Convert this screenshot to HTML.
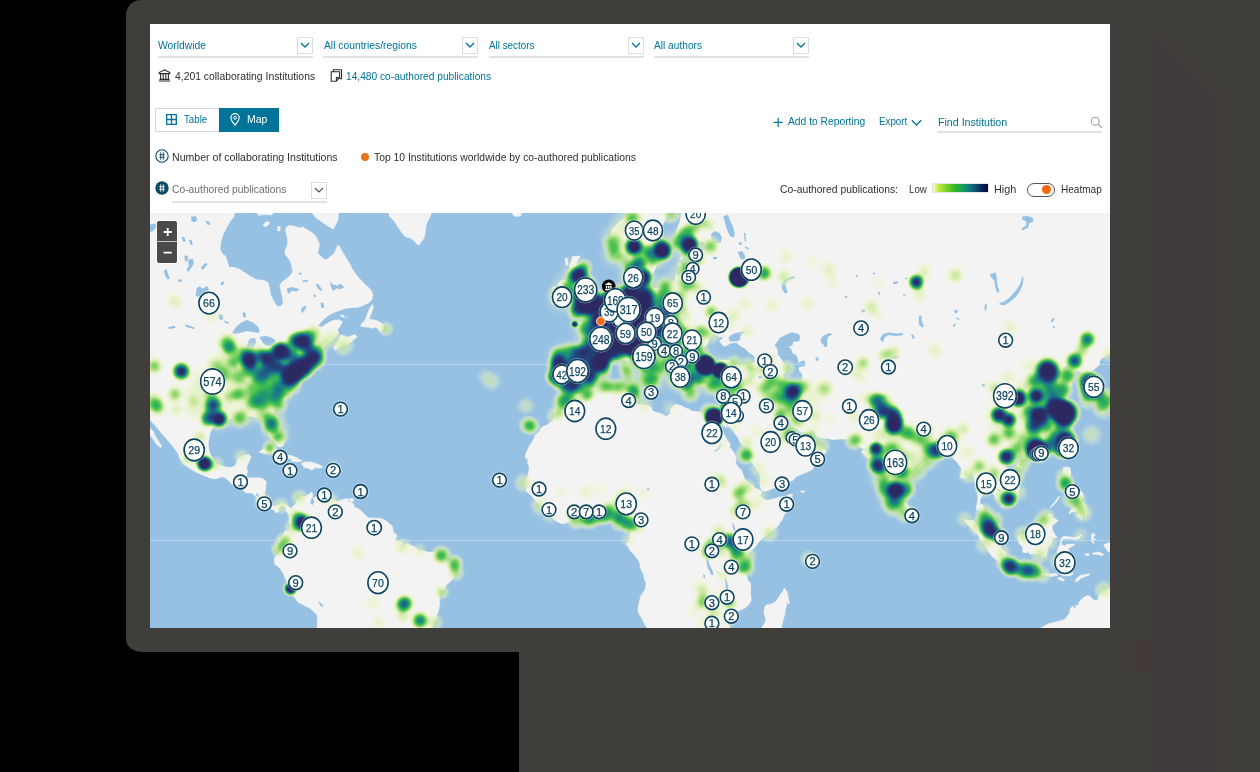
<!DOCTYPE html>
<html><head><meta charset="utf-8">
<style>
html,body{margin:0;padding:0;background:#000;}
body{width:1260px;height:772px;position:relative;overflow:hidden;font-family:"Liberation Sans",sans-serif;}
.abs{position:absolute;}
#frame{left:126px;top:0px;width:1160px;height:652px;background:#403e3a;border-radius:15px 0 0 16px / 15px 0 0 12.5px;}
#stand{left:519px;top:640px;width:741px;height:132px;background:#403e3a;}
#screen{left:150px;top:24px;width:960px;height:604px;background:#fff;overflow:hidden;}
.t{position:absolute;white-space:nowrap;font-size:11px;line-height:14px;color:#007398;transform-origin:0 50%;}
.k{color:#2e2e2e;}
.ul{position:absolute;height:2px;background:#e2e2e2;}
.cb{position:absolute;width:14px;height:15px;border:1px solid #dcdcdc;background:#fff;}
.cb svg{position:absolute;left:2px;top:3px;}
</style></head><body>
<div id="frame" class="abs"></div>
<div id="stand" class="abs"></div>
<div class="abs" style="left:1131.5px;top:641px;width:20.5px;height:31px;background:rgba(110,40,40,0.10);"></div>
<svg id="shade" class="abs" style="left:0;top:0" width="1260" height="772"><path d="M1149.5 27.5 L1217 95 V772 H1149.5 Z" fill="rgba(80,40,80,0.07)"/><path d="M1122 0 L1217 95" stroke="rgba(90,80,95,0.25)" stroke-width="0.8" fill="none"/></svg>
<div id="screen" class="abs">
<!-- coordinates inside screen are page coords minus (150,24) -->
<div id="ui" style="position:absolute;left:-150px;top:-24px;width:1260px;height:772px;">

<!-- row 1 dropdowns -->
<span class="t" id="t1" style="transform:scaleX(0.9383);left:158px;top:37.5px;">Worldwide</span>
<div class="ul" style="left:157.5px;top:56px;width:155px;"></div>
<div class="cb" style="left:296.5px;top:37px;"><svg width="10" height="8" viewBox="0 0 10 8"><path d="M1 2 L5 6 L9 2" fill="none" stroke="#007398" stroke-width="1.3"/></svg></div>

<span class="t" id="t2" style="transform:scaleX(0.9368);left:323.5px;top:37.5px;">All countries/regions</span>
<div class="ul" style="left:323px;top:56px;width:155px;"></div>
<div class="cb" style="left:462px;top:37px;"><svg width="10" height="8" viewBox="0 0 10 8"><path d="M1 2 L5 6 L9 2" fill="none" stroke="#007398" stroke-width="1.3"/></svg></div>

<span class="t" id="t3" style="transform:scaleX(0.8946);left:488.5px;top:37.5px;">All sectors</span>
<div class="ul" style="left:488.5px;top:56px;width:155px;"></div>
<div class="cb" style="left:627.5px;top:37px;"><svg width="10" height="8" viewBox="0 0 10 8"><path d="M1 2 L5 6 L9 2" fill="none" stroke="#007398" stroke-width="1.3"/></svg></div>

<span class="t" id="t4" style="transform:scaleX(0.9234);left:654px;top:37.5px;">All authors</span>
<div class="ul" style="left:654px;top:56px;width:155px;"></div>
<div class="cb" style="left:793px;top:37px;"><svg width="10" height="8" viewBox="0 0 10 8"><path d="M1 2 L5 6 L9 2" fill="none" stroke="#007398" stroke-width="1.3"/></svg></div>

<!-- row 2 -->
<svg class="abs" style="left:158px;top:68.6px" width="13" height="13" viewBox="0 0 13 13"><path d="M6.5 0.8 L11.8 3.6 L11.8 4.6 L1.2 4.6 L1.2 3.6 Z M2.6 5 V10 M5.2 5 V10 M7.8 5 V10 M10.4 5 V10 M1.5 10.4 H11.5 M0.8 12 H12.2" fill="none" stroke="#2e2e2e" stroke-width="1.1"/></svg>
<span class="t k" id="t5" style="transform:scaleX(0.9427);left:174.8px;top:68.6px;">4,201 collaborating Institutions</span>
<svg class="abs" style="left:330px;top:68.8px" width="13" height="13" viewBox="0 0 13 13"><path d="M3.3 2.8 V0.8 H11.5 V9.6 H9.8 M1.2 2.8 H9.6 V8.6 L6.4 12.2 H1.2 Z M9.6 8.6 H6.4 V12.2" fill="none" stroke="#2e2e2e" stroke-width="1.1"/></svg>
<span class="t" id="t6" style="transform:scaleX(0.9268);left:346.2px;top:68.6px;">14,480 co-authored publications</span>

<!-- Table / Map buttons -->
<div class="abs" style="left:155px;top:108px;width:64px;height:21.6px;border:1px solid #d6d6d6;background:#fff;"></div>
<div class="abs" style="left:219px;top:108px;width:60px;height:23.6px;background:#007398;"></div>
<svg class="abs" style="left:166px;top:113.5px" width="11" height="11" viewBox="0 0 11 11"><path d="M0.7 0.7 H10.3 V10.3 H0.7 Z M5.5 0.7 V10.3 M0.7 5.5 H10.3" fill="none" stroke="#007398" stroke-width="1.3"/></svg>
<span class="t" id="t7" style="transform:scaleX(0.8822);left:183.5px;top:111.8px;">Table</span>
<svg class="abs" style="left:230px;top:113px" width="10" height="13" viewBox="0 0 10 13"><path d="M5 12 C5 12 0.9 7.6 0.9 4.8 A4.1 4.1 0 0 1 9.1 4.8 C9.1 7.6 5 12 5 12 Z" fill="none" stroke="#fff" stroke-width="1.2"/><circle cx="5" cy="4.8" r="1.4" fill="none" stroke="#fff" stroke-width="1"/></svg>
<span class="t" id="t8" style="transform:scaleX(0.9483);left:247px;top:111.8px;color:#fff;">Map</span>

<!-- right: add to reporting etc -->
<svg class="abs" style="left:772.6px;top:117px" width="11" height="11" viewBox="0 0 11 11"><path d="M5.2 0.7 V9.9 M0.6 5.3 H9.8" stroke="#007398" stroke-width="1.2"/></svg>
<span class="t" id="t9" style="transform:scaleX(0.9350);left:787.5px;top:114px;">Add to Reporting</span>
<span class="t" id="t10" style="transform:scaleX(0.8900);left:879px;top:114px;">Export</span>
<svg class="abs" style="left:911px;top:119px" width="11" height="8" viewBox="0 0 11 8"><path d="M0.8 1.2 L5.5 6 L10.2 1.2" fill="none" stroke="#007398" stroke-width="1.3"/></svg>
<span class="t" id="t11" style="transform:scaleX(0.9672);left:937.5px;top:114.6px;">Find Institution</span>
<div class="ul" style="left:937px;top:131px;width:165px;"></div>
<svg class="abs" style="left:1089.5px;top:116px" width="13" height="13" viewBox="0 0 13 13"><circle cx="5.2" cy="5.2" r="3.9" fill="none" stroke="#a0a0a0" stroke-width="1.1"/><path d="M8 8 L11.8 11.8" stroke="#a0a0a0" stroke-width="1.2"/></svg>

<!-- legend row 1 -->
<svg class="abs" style="left:155px;top:148.7px" width="14" height="14" viewBox="0 0 14 14"><circle cx="7" cy="7" r="6.2" fill="#fff" stroke="#0c4a63" stroke-width="1.1"/><path d="M5.7 3.3 V10.7 M8.3 3.3 V10.7 M4.3 5.7 H9.7 M4.3 8.3 H9.7" stroke="#0c4a63" stroke-width="0.9"/></svg>
<span class="t k" id="t12" style="transform:scaleX(0.9603);left:172.4px;top:149.5px;">Number of collaborating Institutions</span>
<div class="abs" style="left:361.3px;top:152.7px;width:8px;height:8px;border-radius:50%;background:#e9711c;"></div>
<span class="t k" id="t13" style="transform:scaleX(0.9417);left:374px;top:149.5px;">Top 10 Institutions worldwide by co-authored publications</span>

<!-- legend row 2 -->
<svg class="abs" style="left:155px;top:180.9px" width="14" height="14" viewBox="0 0 14 14"><circle cx="7" cy="7" r="6.7" fill="#0c4a63"/><path d="M5.7 3.3 V10.7 M8.3 3.3 V10.7 M4.3 5.7 H9.7 M4.3 8.3 H9.7" stroke="#fff" stroke-width="0.9"/></svg>
<span class="t" id="t14" style="transform:scaleX(0.9353);left:172.4px;top:182px;color:#6e6e6e;">Co-authored publications</span>
<div class="cb" style="left:311px;top:182px;"><svg width="10" height="8" viewBox="0 0 10 8"><path d="M1 2 L5 6 L9 2" fill="none" stroke="#505050" stroke-width="1.2"/></svg></div>
<div class="ul" style="left:172.4px;top:201px;width:154.5px;height:1.5px;"></div>

<span class="t k" id="t15" style="transform:scaleX(0.9413);left:780px;top:181.6px;">Co-authored publications:</span>
<span class="t k" id="t16" style="transform:scaleX(0.8817);left:909.4px;top:181.6px;">Low</span>
<div class="abs" style="left:933.3px;top:184.2px;width:55px;height:8px;box-shadow:0 0 0 0.6px #cfcfcf;background:linear-gradient(90deg,#f4fbc8 0%,#c4ea4a 10%,#7cd321 24%,#2fb82c 40%,#14a05a 54%,#0f7a80 66%,#0b4670 80%,#08184a 92%,#070c3a 100%);"></div>
<span class="t k" id="t17" style="transform:scaleX(0.9812);left:994px;top:181.6px;">High</span>
<div class="abs" style="left:1026.8px;top:183px;width:26px;height:12px;border:1px solid #555;border-radius:7px;background:#fff;"></div>
<div class="abs" style="left:1041.8px;top:185px;width:9px;height:9px;border-radius:50%;background:#f9650d;"></div>
<span class="t k" id="t18" style="transform:scaleX(0.9140);left:1061.4px;top:181.6px;">Heatmap</span>

<!-- MAP -->
<div id="map" class="abs" style="left:150px;top:213px;width:960px;height:415px;background:#97c1e3;overflow:hidden;">
<svg width="960" height="415" viewBox="0 0 960 415" style="position:absolute;left:0;top:0;">
<g fill="#f3f3f3" stroke="#f3f3f3" stroke-width="0.6" stroke-linejoin="round"><path d="M-1.9 -1.9 L84.8 -1.9 L83.8 3.8 L80.0 8.6 L76.2 15.2 L73.3 21.0 L70.9 28.6 L70.1 36.2 L72.4 41.0 L75.8 43.4 L77.1 47.6 L79.0 54.3 L83.8 54.3 L89.5 56.2 L95.2 60.0 L101.0 63.8 L106.7 66.7 L114.3 67.6 L118.1 69.5 L119.6 75.2 L120.4 81.0 L122.9 86.7 L125.7 91.4 L128.0 93.7 L131.4 93.0 L133.3 89.5 L132.4 83.8 L131.0 78.1 L129.9 73.3 L131.4 69.5 L135.2 66.7 L140.0 62.9 L142.5 59.0 L141.9 53.3 L140.0 47.6 L137.1 43.8 L134.9 41.0 L135.6 36.2 L137.5 31.4 L137.5 25.7 L136.2 20.0 L135.6 15.2 L139.0 12.4 L144.8 13.3 L150.5 14.9 L152.4 13.7 L156.2 16.2 L161.0 19.0 L165.3 22.5 L167.6 26.7 L169.5 31.4 L168.6 36.2 L167.6 40.0 L170.5 42.9 L173.3 45.7 L176.2 46.7 L180.0 43.8 L183.8 41.0 L185.7 37.1 L187.6 32.4 L189.5 33.3 L191.4 37.1 L194.3 41.9 L197.1 46.7 L200.0 51.4 L201.9 55.2 L205.7 61.0 L209.5 65.7 L215.2 71.4 L221.0 77.1 L222.9 81.9 L221.9 86.7 L219.0 89.5 L213.3 92.4 L207.6 94.3 L201.9 94.7 L196.2 95.2 L190.5 97.1 L184.8 99.0 L179.0 101.9 L174.3 105.7 L170.5 109.5 L167.6 113.3 L171.4 114.3 L177.1 110.5 L182.9 107.6 L188.6 106.7 L192.4 108.6 L190.5 112.4 L187.6 116.6 L188.6 120.0 L185.7 123.8 L179.0 129.5 L173.3 134.3 L169.5 140.0 L168.6 142.9 L-1.9 142.9Z"/><path d="M190.5 121.9 L198.1 124.2 L204.8 121.5 L207.2 123.8 L202.3 128.0 L196.2 131.8 L190.5 133.7 L185.7 136.8 L183.2 135.6 L185.7 131.4 L188.6 126.7Z"/><path d="M161.0 -1.9 L188.6 -1.9 L187.8 7.6 L183.2 16.2 L179.0 13.7 L171.4 8.6 L165.3 4.2Z"/><path d="M221.0 93.0 L222.9 91.8 L223.2 95.2 L221.0 101.0 L219.0 105.7 L221.9 106.7 L226.7 107.6 L230.5 109.5 L233.9 112.4 L233.3 116.2 L230.5 119.0 L228.6 116.2 L225.7 114.3 L222.9 115.2 L219.0 114.3 L214.3 113.9 L210.5 113.3 L211.8 110.5 L215.2 106.7 L217.1 101.9 L219.0 97.1Z"/><path d="M190.5 101.9 L195.2 102.5 L200.0 104.4 L196.2 104.8 L191.4 103.8Z"/><path d="M113.3 11.4 L116.6 8.6 L120.0 9.5 L117.1 13.0 L114.3 13.7Z"/><path d="M128.0 13.3 L130.3 13.7 L129.9 18.1 L127.6 17.5Z"/><path d="M106.7 -1.0 L123.8 -1.0 L121.9 1.9 L114.3 1.5 L108.6 2.3Z"/><path d="M239.0 -1.9 L282.3 -1.9 L279.0 5.7 L276.2 11.4 L275.2 19.0 L274.3 24.8 L271.4 28.6 L268.6 32.4 L264.8 28.6 L260.0 24.8 L255.2 23.8 L251.4 19.0 L247.6 13.3 L243.8 7.6 L239.0 2.9Z"/><path d="M361.9 -1.9 L372.4 -1.9 L370.5 2.9 L365.7 3.4 L362.9 1.9Z"/><path d="M421.0 48.6 L424.8 44.2 L430.1 42.9 L427.6 47.6 L424.8 52.4 L421.9 53.3Z"/><path d="M414.9 45.7 L417.1 44.8 L418.1 51.4 L416.2 52.4Z"/><path d="M468.6 9.5 L473.3 6.7 L481.9 1.0 L481.9 47.6 L474.3 46.7 L469.5 42.9 L465.7 36.2 L463.2 28.6 L461.9 21.0 L463.8 15.2Z"/><path d="M528.6 43.4 L532.4 42.9 L533.0 45.3 L529.1 46.1Z"/><path d="M513.9 49.1 L516.2 48.6 L515.8 53.3 L513.9 53.7Z"/><path d="M-1.9 135.7 L168.6 135.7 L167.6 141.8 L169.9 146.6 L166.1 149.8 L161.9 154.2 L159.0 159.0 L154.3 163.7 L150.5 168.5 L146.7 173.2 L144.8 177.0 L141.0 181.8 L136.2 185.6 L131.4 189.8 L127.6 193.2 L124.8 197.0 L122.9 201.8 L123.8 206.6 L126.7 212.3 L129.5 218.0 L132.4 222.8 L134.3 227.5 L133.3 232.3 L129.5 234.2 L125.7 231.3 L121.9 226.6 L119.0 221.8 L116.6 216.1 L115.2 210.4 L112.4 206.6 L108.6 204.7 L103.8 203.7 L99.0 202.8 L95.2 204.7 L91.4 205.6 L86.7 206.6 L81.9 205.6 L76.2 207.0 L71.4 208.5 L66.7 211.3 L62.9 214.2 L60.6 218.0 L59.4 222.8 L58.7 227.5 L58.1 232.3 L59.0 237.0 L60.6 241.8 L62.9 246.6 L65.7 250.4 L69.5 252.3 L74.3 253.8 L80.0 254.6 L84.8 253.2 L86.7 249.4 L88.6 244.7 L93.3 242.4 L99.0 241.8 L101.0 243.7 L99.0 248.5 L96.8 253.2 L94.9 258.0 L93.3 262.8 L97.1 265.2 L102.9 264.7 L108.6 265.6 L114.3 267.5 L115.2 271.3 L114.3 279.9 L96.2 279.9 L89.5 274.2 L83.8 269.4 L78.1 265.2 L72.4 262.8 L66.7 264.1 L61.0 264.7 L55.2 262.8 L47.6 259.9 L41.0 256.1 L34.3 251.3 L30.5 246.6 L27.6 239.9 L22.9 233.2 L17.1 226.6 L11.4 219.9 L5.7 213.2 L-1.9 204.7Z"/><path d="M-1.9 213.2 L0.0 215.1 L2.9 218.0 L5.7 223.7 L8.6 228.5 L11.8 233.2 L10.5 234.8 L6.7 231.3 L3.4 226.6 L0.0 221.8 L-1.9 219.9Z"/><path d="M109.0 239.0 L114.3 235.5 L120.4 234.2 L125.7 236.1 L131.4 239.0 L137.1 241.8 L142.9 243.1 L149.5 246.2 L152.4 247.9 L146.7 248.9 L141.0 248.1 L141.9 246.2 L136.2 244.7 L131.4 242.4 L125.7 240.5 L120.0 239.7 L114.3 240.5Z"/><path d="M151.4 250.4 L155.2 248.9 L161.0 248.9 L165.7 250.4 L170.5 252.3 L173.3 254.2 L169.5 255.1 L165.7 254.6 L161.9 257.0 L158.1 255.1 L154.3 254.6 L152.4 252.3Z"/><path d="M481.1 -60.9 L989.6 -60.9 L989.6 136.0 L962.2 143.0 L957.9 140.8 L955.1 143.5 L952.0 145.1 L949.7 147.7 L949.3 151.9 L947.3 153.7 L943.4 157.0 L941.1 158.1 L940.5 161.4 L943.0 164.1 L945.0 166.1 L946.1 168.3 L948.1 172.0 L948.3 176.7 L947.7 180.3 L946.9 181.2 L944.6 182.2 L941.6 183.1 L939.5 184.1 L937.0 185.0 L936.2 182.9 L936.4 179.8 L937.0 177.1 L936.8 175.0 L935.4 173.0 L937.1 172.0 L937.1 169.8 L936.0 168.6 L933.6 167.1 L930.5 166.6 L931.7 163.6 L932.1 160.6 L929.3 158.6 L928.2 157.5 L924.6 158.6 L920.3 160.6 L917.6 162.6 L916.0 162.1 L917.6 159.1 L919.9 155.0 L918.4 152.4 L915.2 152.9 L912.9 156.0 L909.8 157.5 L907.0 161.1 L902.7 162.1 L901.9 164.1 L903.9 166.6 L907.4 168.1 L908.2 168.3 L907.0 170.6 L909.4 171.5 L911.3 170.1 L914.5 168.1 L916.8 169.3 L919.5 169.6 L921.5 170.1 L921.1 172.5 L917.6 173.0 L914.9 174.5 L912.9 176.4 L910.9 178.8 L908.6 181.2 L909.0 183.1 L912.1 185.5 L914.5 191.1 L915.2 193.5 L918.8 197.2 L918.4 199.5 L918.8 200.8 L916.0 201.7 L914.9 203.1 L917.6 204.5 L918.8 205.4 L918.8 208.5 L917.2 211.6 L914.9 213.9 L913.3 216.9 L910.9 220.4 L909.8 222.6 L908.6 225.2 L906.2 227.8 L903.9 229.3 L901.6 232.1 L898.4 234.0 L895.7 236.0 L891.8 236.8 L888.6 238.5 L886.1 238.9 L884.0 239.8 L881.2 241.0 L879.7 240.6 L876.1 241.9 L874.2 243.1 L874.6 245.6 L873.4 246.9 L871.4 246.1 L871.4 244.0 L870.7 241.9 L868.7 241.9 L866.4 241.0 L864.4 241.9 L861.7 244.0 L859.3 244.6 L858.5 246.9 L856.2 249.0 L855.4 253.5 L858.1 256.4 L858.9 258.5 L861.3 260.9 L862.8 262.6 L865.4 264.2 L867.5 267.0 L868.7 270.7 L869.3 273.5 L869.5 276.7 L869.1 279.7 L869.1 281.1 L867.9 283.5 L864.8 285.1 L862.4 286.7 L860.9 287.3 L859.7 287.5 L859.3 289.5 L858.5 290.3 L857.4 291.5 L854.6 292.7 L853.4 293.8 L851.7 294.2 L851.9 291.5 L853.1 288.7 L850.7 287.1 L849.5 286.5 L846.8 286.3 L844.8 283.1 L842.9 279.9 L840.5 278.3 L838.2 278.1 L836.6 277.1 L836.8 275.1 L835.3 274.7 L833.1 275.5 L832.9 278.3 L832.3 281.5 L831.2 284.3 L830.2 286.7 L829.8 289.5 L830.8 291.9 L832.7 291.5 L833.5 294.6 L834.7 297.8 L835.5 299.8 L838.0 300.9 L840.2 302.7 L841.9 303.7 L844.1 305.7 L845.4 307.0 L846.6 310.0 L846.4 313.1 L846.8 316.3 L848.2 318.4 L849.5 321.4 L849.7 322.7 L846.8 322.9 L844.1 321.0 L841.9 319.4 L840.2 317.8 L838.4 316.3 L836.6 313.5 L835.5 311.6 L834.7 308.4 L834.5 306.8 L834.5 304.5 L833.3 302.5 L831.9 300.9 L830.8 299.4 L828.8 296.4 L826.5 297.0 L826.3 294.6 L826.9 291.9 L827.4 288.7 L828.0 285.9 L827.6 282.3 L827.6 279.1 L826.5 275.5 L825.7 272.3 L824.5 267.8 L823.7 262.6 L821.4 260.5 L821.0 259.3 L818.6 262.6 L815.1 265.4 L812.4 265.0 L810.4 264.6 L811.2 259.7 L811.6 255.6 L809.3 252.3 L807.7 249.8 L805.3 247.5 L803.0 244.8 L801.8 242.3 L801.0 238.5 L798.7 237.2 L796.3 238.5 L794.8 240.2 L792.0 240.6 L789.3 241.4 L786.6 241.4 L784.2 241.4 L782.3 241.9 L781.9 244.8 L781.1 246.9 L779.1 248.6 L777.8 249.0 L774.8 250.6 L773.7 251.9 L770.9 255.2 L767.8 257.6 L763.9 260.7 L763.5 262.6 L761.5 263.4 L759.4 264.0 L758.0 265.4 L755.3 267.4 L755.1 270.7 L755.7 274.3 L756.1 276.3 L755.5 279.5 L754.3 281.9 L754.3 287.5 L752.2 287.5 L750.6 290.3 L752.2 291.5 L750.6 291.9 L747.7 293.4 L745.3 296.3 L743.2 295.2 L741.2 292.7 L740.2 288.9 L738.5 283.9 L736.5 280.7 L734.7 277.1 L733.8 273.5 L732.6 269.9 L730.6 266.6 L729.5 263.4 L728.7 260.5 L727.5 256.4 L726.7 252.3 L726.5 249.0 L726.7 246.1 L726.7 243.5 L725.9 241.4 L725.9 238.9 L724.4 238.9 L724.4 242.7 L722.0 244.4 L719.7 245.2 L717.0 244.2 L714.6 241.9 L711.7 238.7 L712.6 237.6 L716.6 237.2 L717.0 235.5 L713.8 236.0 L710.7 234.7 L708.7 232.5 L706.0 231.7 L705.2 229.5 L704.0 227.6 L702.5 225.7 L698.2 225.5 L694.7 226.1 L690.4 225.9 L685.7 226.5 L682.5 226.5 L679.0 225.7 L674.7 225.2 L672.0 224.8 L668.1 224.2 L665.7 222.6 L664.5 218.7 L662.2 217.6 L659.1 219.4 L656.7 220.2 L652.4 219.6 L649.3 218.3 L647.3 216.1 L644.2 214.7 L641.9 212.1 L640.7 209.8 L639.9 207.6 L637.9 204.9 L635.6 204.5 L633.3 203.5 L632.1 204.9 L629.7 205.4 L629.5 207.6 L630.5 209.4 L631.7 212.1 L633.3 215.2 L635.6 217.4 L637.9 219.6 L638.3 221.8 L637.9 223.9 L639.9 226.1 L640.7 228.0 L641.1 224.8 L642.2 222.0 L643.8 223.1 L643.8 227.0 L642.6 228.7 L643.8 230.2 L647.3 230.6 L651.2 230.8 L654.8 229.3 L658.3 225.9 L661.0 223.5 L662.2 221.1 L662.6 223.1 L662.4 227.0 L663.4 229.1 L665.7 231.3 L668.8 232.3 L671.2 233.0 L673.5 235.5 L675.9 237.6 L674.7 240.2 L672.4 243.5 L670.8 246.1 L668.1 247.3 L667.7 249.6 L667.7 252.5 L664.2 253.5 L662.2 256.6 L658.3 258.5 L653.6 260.5 L649.7 261.9 L646.2 263.8 L642.6 267.4 L638.3 269.1 L634.0 270.7 L630.5 272.7 L627.4 274.3 L623.9 275.1 L618.0 277.5 L614.9 278.3 L612.1 277.9 L611.2 275.5 L610.2 272.7 L610.0 269.5 L610.6 267.4 L610.2 263.4 L609.6 260.9 L607.4 257.6 L604.7 253.5 L603.9 251.9 L600.8 247.7 L598.1 245.6 L596.3 241.9 L595.7 237.6 L593.8 233.4 L592.0 230.8 L589.1 227.4 L588.3 224.8 L585.7 221.8 L582.8 216.7 L579.7 213.9 L577.7 213.4 L578.9 207.2 L578.5 207.2 L576.9 212.5 L576.0 215.0 L573.4 212.5 L571.8 209.8 L569.9 206.3 L569.3 205.1 L568.3 199.2 L571.1 199.9 L574.2 199.9 L576.5 198.1 L577.9 195.3 L578.9 192.1 L579.3 189.7 L580.8 186.9 L582.4 183.1 L582.0 179.3 L582.4 176.9 L583.6 174.0 L581.2 174.0 L577.3 173.0 L574.6 175.4 L570.3 176.9 L567.2 174.5 L562.1 172.5 L561.3 175.4 L558.2 176.2 L555.8 174.0 L552.7 173.0 L549.2 172.0 L548.6 169.1 L544.9 165.6 L547.2 164.9 L546.8 161.6 L544.1 159.6 L544.5 157.0 L543.7 154.0 L539.8 152.4 L537.4 152.4 L535.5 155.5 L534.7 157.0 L533.5 155.5 L531.6 154.5 L530.4 157.0 L531.6 160.1 L532.7 161.6 L531.6 162.6 L533.9 164.6 L536.1 167.1 L535.9 168.8 L533.9 167.1 L532.3 167.6 L532.7 170.1 L530.8 169.3 L532.3 174.5 L530.0 175.0 L528.8 172.5 L526.9 173.0 L525.3 169.1 L526.9 165.6 L530.0 165.6 L524.5 165.1 L523.0 162.6 L521.0 159.1 L519.8 157.0 L517.9 154.5 L518.3 150.3 L517.9 147.2 L514.4 144.0 L510.8 141.4 L506.1 138.7 L502.6 136.0 L500.3 131.6 L498.3 128.8 L496.4 131.3 L495.2 128.0 L495.6 126.6 L493.2 126.6 L490.1 128.3 L490.5 131.0 L490.1 134.3 L492.8 136.8 L495.2 138.4 L496.8 143.0 L499.5 146.1 L502.6 147.2 L505.0 147.2 L504.2 149.3 L508.1 151.4 L512.0 153.7 L514.4 156.3 L514.0 158.1 L512.0 155.5 L508.5 154.5 L506.9 157.5 L508.9 162.1 L506.9 163.1 L505.0 167.4 L503.2 167.1 L503.8 164.1 L505.0 162.1 L503.8 157.5 L500.7 156.0 L498.3 153.7 L497.1 152.7 L495.2 150.6 L491.3 149.6 L489.7 147.7 L487.4 144.8 L485.0 144.0 L483.1 141.4 L482.3 138.1 L481.5 136.0 L479.2 134.3 L476.8 133.8 L474.1 136.2 L471.3 137.1 L469.4 138.4 L466.2 140.8 L462.7 139.8 L460.8 139.2 L457.6 138.4 L454.5 140.3 L453.9 144.0 L454.5 147.2 L450.6 149.8 L445.9 151.6 L444.7 153.4 L442.0 157.5 L440.8 159.6 L441.6 163.1 L440.0 165.6 L438.9 168.6 L438.1 169.1 L434.6 172.5 L432.6 173.0 L428.3 173.5 L424.8 173.5 L421.1 176.4 L420.1 176.9 L417.4 174.0 L417.0 172.5 L414.6 171.1 L411.1 172.0 L407.0 172.0 L407.6 167.1 L404.8 163.4 L405.6 160.1 L407.2 156.0 L408.2 151.1 L407.4 146.7 L405.8 141.9 L409.1 139.2 L411.9 137.3 L418.5 138.1 L424.4 139.2 L427.1 139.0 L430.7 139.2 L435.0 139.2 L436.1 138.4 L437.1 132.7 L437.5 127.7 L437.7 124.9 L435.0 122.1 L433.6 118.7 L432.2 117.5 L431.0 116.3 L428.3 114.9 L424.8 114.3 L423.4 111.4 L426.4 109.3 L430.3 108.7 L434.2 109.6 L435.7 109.6 L435.7 103.6 L437.1 103.6 L437.7 105.4 L442.4 104.5 L442.8 103.3 L446.3 101.5 L448.3 99.4 L448.3 96.3 L451.8 94.7 L454.5 93.2 L456.5 92.2 L457.6 89.1 L460.0 85.9 L460.6 83.0 L463.1 81.0 L465.1 80.0 L469.0 80.4 L470.2 78.1 L473.3 78.1 L475.2 78.7 L475.6 76.1 L476.8 76.1 L475.8 73.4 L475.6 70.0 L474.5 69.3 L473.9 65.6 L473.9 58.2 L475.6 54.6 L479.5 53.6 L481.1 51.0 L483.5 49.9 L483.1 53.9 L482.3 57.5 L484.6 59.3 L481.9 61.7 L481.9 63.8 L479.9 65.9 L479.2 69.3 L480.7 70.7 L481.1 73.1 L484.6 73.7 L485.0 76.1 L488.5 75.1 L490.9 73.1 L494.4 74.1 L495.6 75.1 L497.7 76.7 L499.1 76.7 L504.6 74.4 L508.1 72.1 L513.6 70.7 L515.1 73.4 L517.9 73.7 L519.8 73.1 L520.2 69.7 L524.1 67.3 L524.3 62.4 L524.1 56.8 L526.5 51.4 L530.4 49.9 L533.1 55.0 L536.3 55.0 L537.4 48.8 L537.0 45.9 L533.9 43.6 L533.9 39.1 L538.6 37.1 L543.7 36.0 L547.6 37.1 L551.5 36.8 L555.4 32.9 L560.1 33.3 L555.4 31.3 L553.5 28.1 L547.6 28.9 L539.8 31.3 L532.0 34.1 L529.6 30.5 L525.7 28.1 L525.3 20.9 L525.3 14.2 L524.5 9.1 L528.0 3.9 L531.2 0.4 L533.9 -5.0 L537.8 -12.4 L535.9 -19.0 L528.0 -19.0 L526.1 -12.4 L524.1 -5.9 L522.2 1.3 L516.3 6.5 L514.4 9.1 L512.0 12.5 L510.1 16.7 L509.3 20.9 L508.9 27.3 L510.4 28.9 L514.4 31.3 L515.9 33.7 L512.8 38.3 L510.8 42.1 L507.3 43.6 L507.1 49.5 L506.1 55.4 L504.6 61.0 L503.0 61.4 L499.5 61.4 L497.5 66.6 L494.0 67.0 L492.5 65.6 L491.9 62.1 L491.3 59.6 L492.3 57.9 L488.9 52.5 L488.5 50.3 L486.2 45.1 L485.8 40.6 L483.5 38.3 L483.5 34.1 L482.7 38.3 L480.3 40.6 L476.4 45.1 L473.3 47.3 L469.4 48.1 L464.3 43.6 L463.9 40.6 L462.3 36.8 L462.7 29.7 L461.6 24.9 L461.6 20.1 L462.3 15.9 L466.2 12.5 L469.4 9.1 L473.3 5.7 L476.0 3.9 L479.2 2.2 L481.9 -2.3Z"/><path d="M418.9 177.9 L421.3 177.4 L424.8 181.0 L430.3 180.3 L434.2 181.2 L438.1 178.3 L442.0 177.4 L445.9 174.5 L449.8 174.0 L454.0 173.0 L457.6 172.5 L461.9 173.3 L466.6 171.8 L470.2 171.5 L472.5 172.5 L475.6 172.3 L480.5 170.6 L482.3 171.1 L481.9 173.0 L485.2 171.5 L483.1 175.0 L483.5 177.9 L485.4 180.7 L484.2 183.1 L481.5 185.0 L481.5 186.9 L485.0 188.3 L485.4 190.2 L490.1 191.8 L493.6 191.6 L497.5 192.5 L501.1 193.9 L502.2 197.6 L506.5 199.5 L511.6 200.8 L516.3 203.5 L520.2 200.4 L520.6 195.3 L524.1 192.3 L526.9 191.6 L532.3 193.0 L535.9 195.3 L539.8 196.2 L540.6 197.8 L548.4 198.8 L553.5 200.1 L555.4 201.1 L558.9 199.5 L562.9 198.1 L565.2 198.1 L568.3 199.2 L569.3 205.1 L568.5 206.7 L569.7 209.8 L571.7 213.9 L572.6 217.4 L573.4 220.0 L575.0 223.1 L576.9 226.5 L579.3 230.0 L580.5 231.7 L579.3 233.8 L582.0 236.8 L583.6 238.9 L584.8 241.0 L585.9 244.4 L585.9 249.8 L586.7 251.9 L588.7 254.8 L591.0 256.4 L593.0 261.3 L594.7 266.2 L597.7 269.1 L601.6 271.5 L604.7 274.7 L609.0 276.7 L611.4 278.3 L611.4 281.1 L609.4 282.5 L611.2 282.9 L614.1 286.7 L618.0 287.1 L623.9 285.7 L629.7 284.1 L634.8 283.5 L639.5 281.3 L642.4 281.3 L641.9 283.9 L643.0 286.9 L640.7 291.1 L638.3 295.4 L636.8 297.8 L634.0 302.1 L632.1 306.5 L629.3 311.2 L625.4 315.5 L619.2 320.0 L614.1 323.7 L608.4 329.4 L604.7 334.6 L602.0 337.0 L599.2 339.3 L598.8 340.9 L597.1 343.9 L595.3 347.2 L593.8 351.1 L593.9 353.3 L595.7 354.7 L596.5 357.4 L595.7 360.6 L596.9 364.1 L597.7 367.3 L599.2 368.5 L600.4 370.5 L600.8 375.3 L600.4 379.3 L601.0 384.1 L601.2 387.3 L598.4 392.2 L594.9 395.1 L590.6 396.7 L586.3 399.2 L583.6 403.3 L580.1 406.2 L578.3 407.0 L577.7 409.9 L579.3 413.3 L580.5 417.1 L578.9 451.1 L500.7 451.1 L498.7 418.4 L497.9 416.2 L494.4 410.8 L492.1 405.8 L488.2 399.6 L488.0 396.5 L488.2 393.4 L489.5 388.2 L490.9 382.5 L495.0 376.7 L496.0 372.1 L496.0 370.1 L494.0 365.3 L493.8 362.6 L492.3 359.0 L490.1 353.9 L490.3 351.7 L489.7 349.9 L488.3 346.8 L485.4 343.5 L483.7 341.3 L479.9 337.4 L478.4 333.9 L476.2 330.7 L478.4 328.8 L479.0 326.4 L479.5 324.1 L480.1 320.8 L480.3 318.2 L480.7 315.5 L479.9 312.3 L476.8 310.2 L474.5 310.2 L470.2 310.8 L465.9 311.2 L463.1 308.0 L459.6 303.5 L455.3 302.7 L451.4 303.1 L446.7 304.1 L443.6 305.5 L441.2 306.3 L438.1 307.6 L433.8 309.4 L430.3 308.0 L426.4 307.2 L422.4 307.8 L418.5 309.2 L412.7 311.0 L411.9 310.8 L406.8 308.4 L402.9 305.3 L399.8 303.3 L397.0 300.9 L393.1 299.0 L390.4 294.6 L390.0 291.9 L388.4 290.7 L384.9 286.7 L383.3 284.7 L380.2 281.5 L376.7 279.1 L376.3 275.5 L377.5 275.1 L376.3 273.1 L373.6 269.9 L375.5 267.4 L377.5 264.6 L378.2 260.5 L379.4 256.0 L378.6 251.5 L377.5 250.6 L378.2 246.9 L375.3 244.8 L375.5 242.3 L375.9 240.6 L378.2 235.5 L379.8 232.5 L382.2 228.7 L383.9 225.7 L385.3 222.2 L389.2 218.7 L391.5 214.3 L397.0 212.1 L402.1 208.1 L404.3 204.5 L404.5 203.1 L403.5 200.4 L403.7 198.1 L405.8 194.4 L408.8 190.0 L412.3 188.3 L415.4 186.2 L417.4 181.7Z"/><path d="M96.6 254.4 L97.4 258.5 L96.6 262.6 L94.3 265.0 L97.8 265.8 L101.7 265.4 L105.6 265.0 L109.6 264.8 L113.5 266.2 L116.6 268.7 L115.8 272.7 L115.4 276.7 L114.8 280.7 L114.6 284.7 L117.4 288.7 L120.5 291.9 L123.2 293.2 L126.0 293.1 L129.1 291.5 L131.1 290.3 L135.0 291.1 L139.3 294.0 L141.2 296.2 L141.8 294.6 L143.6 292.7 L146.3 290.3 L146.7 287.1 L149.3 284.5 L151.8 283.5 L155.3 283.5 L159.2 281.1 L161.6 279.1 L163.1 281.5 L162.0 284.9 L164.3 284.7 L167.4 282.7 L168.2 280.1 L169.0 282.7 L172.9 283.1 L175.3 286.3 L180.0 286.3 L183.5 286.3 L187.4 288.5 L190.9 286.9 L195.6 285.9 L199.9 285.9 L197.2 287.9 L201.5 289.5 L203.8 291.1 L204.2 294.2 L208.1 295.4 L213.2 299.8 L214.4 301.3 L217.9 304.5 L219.1 304.9 L226.1 304.9 L230.8 305.5 L235.1 307.2 L237.4 308.8 L240.2 311.6 L242.1 312.7 L243.7 319.4 L246.4 321.4 L246.8 324.1 L244.9 327.2 L246.4 328.0 L250.4 328.8 L252.7 329.2 L252.3 333.5 L256.2 330.5 L260.1 331.9 L264.0 333.5 L267.6 336.2 L268.7 337.8 L271.9 337.4 L275.8 338.6 L279.7 339.3 L283.6 339.2 L287.5 340.1 L291.4 342.5 L295.3 345.6 L298.1 347.8 L303.2 348.2 L304.3 349.5 L305.3 353.1 L305.9 355.8 L305.5 359.6 L304.3 363.3 L302.4 365.9 L299.6 369.3 L297.1 370.9 L295.3 373.7 L293.4 377.7 L291.4 379.3 L289.5 382.1 L289.3 386.5 L289.9 390.6 L289.3 393.2 L288.5 398.4 L286.7 401.2 L286.3 406.2 L284.4 409.1 L282.0 413.7 L281.6 416.2 L281.6 451.1 L166.3 451.1 L167.0 416.2 L167.6 408.7 L167.0 401.6 L163.1 397.9 L160.4 395.5 L155.3 393.0 L147.9 389.0 L143.6 383.3 L144.0 380.9 L140.5 375.5 L138.1 371.3 L136.2 367.3 L134.6 363.7 L133.0 359.8 L129.5 355.1 L126.8 352.3 L124.8 351.5 L124.6 348.0 L124.0 346.4 L125.6 343.3 L127.9 341.3 L129.5 338.2 L127.5 338.2 L125.4 336.6 L126.4 331.9 L127.5 329.6 L128.9 327.6 L129.1 324.9 L130.7 324.3 L133.4 322.5 L134.6 318.2 L138.1 317.8 L139.3 315.1 L140.5 312.7 L138.9 309.2 L139.7 306.1 L139.1 302.1 L137.3 299.8 L135.8 297.0 L136.3 295.0 L133.4 293.1 L131.1 292.9 L129.5 295.0 L127.5 295.6 L129.1 298.6 L125.6 299.6 L124.8 297.4 L122.5 296.6 L120.5 295.4 L117.8 296.2 L117.4 295.4 L114.6 294.2 L115.0 292.7 L111.1 290.3 L109.9 288.7 L109.2 290.1 L106.4 287.9 L106.8 284.7 L103.7 281.5 L101.0 278.7 L99.4 276.7 L98.2 275.9 L94.7 275.7 L90.8 274.5 L86.9 273.1 L84.1 272.3 L81.4 270.7 L78.3 267.0 L74.7 264.6 L71.6 263.8 L68.5 265.0 L64.6 266.0 L59.5 264.8 L56.4 263.4 L51.3 261.1 L70.4 255.2 L86.1 255.2Z"/><path d="M754.3 289.5 L755.7 289.5 L759.6 294.6 L762.1 299.0 L761.5 302.5 L758.8 304.3 L755.7 304.7 L754.3 300.9 L753.7 296.2 L754.9 292.7Z"/><path d="M867.1 251.0 L869.5 248.6 L872.2 247.9 L875.7 248.1 L876.1 249.8 L874.2 253.1 L871.0 255.4 L867.9 254.8 L866.9 252.7Z"/><path d="M915.2 227.0 L917.6 225.7 L919.0 227.0 L917.6 231.3 L916.8 234.7 L914.9 238.5 L914.5 240.0 L912.5 237.2 L911.7 235.1 L912.1 232.1 L913.7 229.5Z"/><path d="M949.3 190.2 L950.4 188.3 L954.0 186.7 L957.1 188.3 L957.9 191.1 L957.9 192.5 L955.9 196.7 L954.7 199.0 L953.2 200.4 L951.2 199.2 L951.2 195.3 L952.8 193.0 L951.2 193.0 L949.5 192.5Z"/><path d="M954.0 186.5 L955.9 184.6 L958.7 182.2 L961.0 179.8 L966.1 178.8 L966.1 183.6 L962.2 185.0 L959.0 185.5 L957.1 186.5Z"/><path d="M959.8 191.1 L958.7 189.3 L961.0 186.5 L966.1 185.5 L966.1 189.3 L962.2 191.1Z"/><path d="M913.7 254.4 L916.0 253.9 L919.9 254.8 L920.7 259.3 L919.9 263.8 L917.6 265.0 L917.6 268.7 L918.4 271.9 L921.5 271.9 L924.2 273.5 L926.6 273.5 L927.4 277.1 L926.6 277.9 L923.8 275.9 L921.5 275.9 L919.2 273.9 L916.4 274.3 L913.7 273.5 L913.7 271.1 L915.0 270.3 L913.5 269.7 L912.1 269.5 L910.9 266.2 L910.6 263.4 L912.5 264.2 L912.9 260.5 L912.9 258.1Z"/><path d="M912.9 275.1 L915.2 274.7 L917.2 277.1 L916.0 279.9 L914.9 279.5Z"/><path d="M900.4 295.0 L903.5 291.9 L907.4 287.5 L909.8 283.5 L909.0 283.1 L905.5 287.9 L901.6 292.7Z"/><path d="M919.2 281.1 L923.5 282.7 L921.5 286.7 L919.2 286.9 L918.8 284.7Z"/><path d="M923.1 285.1 L925.2 285.9 L923.8 292.3 L921.1 290.7 L920.7 288.7 L922.5 286.7Z"/><path d="M924.6 290.7 L925.8 290.3 L927.4 283.9 L926.6 283.9Z"/><path d="M928.2 278.7 L932.1 278.7 L933.6 283.9 L930.9 284.7 L930.1 282.7Z"/><path d="M928.5 283.1 L930.9 284.3 L931.7 287.9 L930.1 288.7 L929.7 285.5Z"/><path d="M926.2 289.1 L928.9 288.3 L928.9 289.9 L927.0 290.3Z"/><path d="M919.4 300.9 L920.3 297.0 L922.7 296.0 L924.6 293.8 L926.2 295.8 L928.2 294.2 L930.1 292.7 L932.8 289.5 L936.0 293.1 L937.1 299.4 L935.6 303.3 L933.2 300.6 L932.5 304.1 L932.1 306.1 L927.8 303.7 L927.0 300.9 L927.8 299.0 L925.0 298.2 L924.2 299.0 L922.3 298.6Z"/><path d="M870.9 320.0 L873.4 321.4 L876.1 322.5 L877.7 318.6 L880.0 316.7 L884.0 315.5 L887.7 310.8 L890.2 309.2 L891.8 308.4 L893.7 306.8 L895.9 304.5 L898.4 300.9 L900.4 300.6 L902.3 302.9 L901.9 304.9 L903.9 305.3 L908.2 307.6 L904.7 310.8 L903.1 311.6 L901.9 313.9 L902.7 317.0 L903.5 319.4 L906.6 323.7 L907.4 324.3 L903.1 324.9 L901.6 328.0 L901.4 331.1 L898.8 333.1 L897.6 335.8 L896.9 339.3 L896.1 343.3 L891.8 343.7 L890.2 341.7 L889.8 341.3 L886.7 341.3 L884.0 340.1 L880.0 341.3 L878.5 339.3 L875.7 339.7 L873.0 339.3 L872.6 335.4 L872.2 333.1 L869.5 331.1 L868.7 328.0 L868.3 325.7 L868.1 323.3Z"/><path d="M814.7 306.3 L819.4 307.6 L823.3 307.4 L825.3 310.2 L828.0 313.3 L831.9 315.5 L834.7 318.6 L837.0 319.4 L839.4 321.4 L842.1 324.1 L844.8 325.7 L847.6 327.6 L846.4 330.7 L850.3 332.1 L851.1 335.4 L852.7 337.2 L856.6 339.7 L855.8 344.4 L856.2 347.6 L855.8 350.9 L853.4 350.7 L851.1 349.5 L850.9 351.1 L847.6 347.6 L842.1 343.5 L838.6 338.6 L836.6 335.8 L834.5 331.7 L832.3 328.0 L829.6 325.7 L828.2 321.4 L824.5 318.6 L822.2 315.5 L817.9 311.8 L815.1 308.8Z"/><path d="M853.4 354.7 L856.6 351.1 L859.7 351.7 L863.6 352.3 L866.4 354.3 L870.3 354.9 L873.8 355.2 L875.7 353.1 L878.1 354.1 L882.4 355.1 L883.0 356.2 L885.9 358.2 L889.4 358.4 L889.4 361.8 L885.9 361.0 L882.0 361.0 L878.1 360.6 L874.2 359.8 L870.3 358.4 L866.4 358.6 L862.4 358.2 L858.5 357.0 L854.6 354.9Z"/><path d="M889.8 360.0 L892.6 359.6 L894.5 361.0 L892.6 362.6 L890.2 361.0Z"/><path d="M895.3 361.0 L897.3 360.4 L898.4 361.8 L897.3 363.1 L895.3 362.6Z"/><path d="M898.8 361.0 L901.9 361.0 L904.3 360.2 L907.8 361.0 L907.4 362.4 L904.7 362.8 L901.6 363.5 L898.8 363.3Z"/><path d="M910.9 361.0 L914.5 360.6 L918.4 361.4 L922.7 359.8 L923.1 361.0 L920.3 362.4 L916.0 362.9 L912.1 362.6Z"/><path d="M907.4 365.1 L910.9 364.5 L914.5 367.1 L912.9 368.3 L909.4 366.5Z"/><path d="M925.0 368.5 L927.0 364.9 L930.9 362.2 L934.8 361.4 L939.9 360.8 L938.7 362.2 L934.8 363.7 L930.9 365.3 L928.2 367.9Z"/><path d="M909.0 348.2 L909.4 343.7 L907.0 339.7 L907.0 338.6 L908.6 333.9 L910.4 330.7 L910.6 327.2 L911.3 325.1 L914.5 322.9 L917.2 323.7 L921.1 324.1 L925.0 324.5 L928.9 322.9 L930.9 321.5 L931.7 322.5 L928.9 325.7 L925.0 326.6 L921.1 326.0 L917.2 326.0 L913.3 326.0 L911.7 328.0 L911.5 331.1 L914.1 333.1 L916.8 331.5 L920.3 331.1 L924.6 331.1 L924.2 332.1 L921.1 334.1 L918.0 335.4 L920.3 339.7 L922.7 343.7 L923.5 346.4 L921.5 349.2 L919.9 346.8 L917.6 346.8 L917.2 343.7 L915.2 340.5 L915.6 338.6 L912.9 339.0 L912.9 342.1 L912.9 346.8 L913.1 349.9 L909.4 349.9Z"/><path d="M941.1 324.1 L942.6 319.8 L945.4 322.1 L943.0 324.5 L946.1 326.8 L942.6 326.4 L944.2 331.1 L942.2 329.2 L941.4 326.4Z"/><path d="M942.6 340.1 L948.5 339.0 L953.6 341.3 L952.4 342.5 L946.5 341.3 L942.6 341.3Z"/><path d="M935.2 340.5 L939.1 340.9 L938.7 342.9 L935.6 342.5Z"/><path d="M954.0 331.5 L955.5 331.1 L959.8 329.6 L966.1 331.1 L966.1 341.7 L961.4 337.8 L958.3 339.0 L954.4 333.5Z"/><path d="M885.9 418.4 L888.3 415.8 L890.2 415.4 L893.7 413.3 L898.4 410.8 L902.7 409.9 L905.9 409.1 L910.6 407.7 L915.2 406.2 L918.4 401.6 L919.9 399.6 L919.9 396.3 L922.7 393.0 L925.4 397.1 L925.8 392.6 L928.5 392.2 L928.9 389.4 L931.7 386.1 L934.8 383.7 L938.3 382.3 L941.4 384.5 L943.4 386.9 L944.6 387.3 L948.9 386.9 L948.1 384.5 L951.2 380.1 L951.6 377.7 L953.8 377.1 L956.3 376.1 L960.2 375.7 L970.0 375.3 L970.0 429.0 L884.0 429.0Z"/><path d="M634.8 375.3 L637.2 379.3 L637.6 380.9 L638.7 386.9 L639.5 391.0 L636.8 389.4 L636.4 393.4 L635.2 396.7 L635.2 400.2 L632.9 407.4 L631.3 415.0 L630.5 418.4 L612.1 418.4 L611.5 415.2 L615.3 409.1 L615.7 406.2 L614.1 400.0 L614.1 396.3 L615.7 392.2 L619.2 391.4 L623.1 390.2 L625.8 388.6 L627.4 386.5 L629.3 383.3 L630.9 380.9 L632.9 378.5 L633.3 376.5Z"/><path d="M419.7 101.2 L425.6 99.4 L428.3 99.7 L430.3 97.2 L434.6 97.8 L437.7 96.9 L442.0 96.9 L445.9 96.0 L447.5 94.4 L447.5 93.2 L444.3 92.6 L446.3 90.4 L448.6 85.9 L447.1 83.3 L443.6 83.0 L443.4 81.4 L442.4 78.7 L441.2 75.4 L439.7 72.7 L436.9 70.7 L435.9 67.3 L434.2 63.8 L430.7 62.4 L431.8 60.3 L431.0 59.3 L433.8 55.4 L435.0 51.7 L433.8 50.3 L428.3 50.3 L426.0 51.4 L426.7 48.1 L429.9 43.6 L422.4 43.6 L421.7 48.1 L419.7 51.7 L420.1 56.1 L417.8 57.5 L420.1 60.3 L419.7 66.6 L422.1 65.9 L423.2 65.2 L422.8 69.3 L422.1 70.7 L424.8 71.4 L427.9 70.0 L428.7 70.4 L427.9 73.1 L429.5 75.4 L430.7 75.1 L430.1 77.7 L429.9 80.0 L425.2 80.7 L424.0 84.0 L426.0 83.3 L426.0 87.2 L423.6 88.8 L421.3 89.7 L422.4 91.3 L425.6 91.6 L429.5 92.6 L431.4 91.9 L430.3 94.1 L425.6 94.1 L424.2 95.7 L422.1 99.1Z"/><path d="M417.8 80.4 L418.5 83.3 L417.0 87.8 L412.3 88.8 L409.5 90.4 L404.5 92.2 L401.7 90.0 L401.7 88.1 L404.1 85.2 L405.2 82.0 L402.9 80.0 L402.5 75.4 L403.3 74.1 L408.4 74.1 L408.0 71.0 L409.9 68.3 L413.4 67.0 L417.8 67.6 L419.7 70.4 L420.5 73.4 L418.1 76.1 L418.1 78.1Z"/><path d="M478.8 141.4 L479.4 145.6 L478.0 149.8 L475.6 147.2 L475.6 144.0Z"/><path d="M478.0 150.9 L480.3 154.5 L479.5 161.1 L477.2 162.1 L474.9 161.6 L474.9 155.5 L474.1 152.4Z"/><path d="M490.5 167.1 L494.4 166.1 L503.0 165.9 L501.1 170.6 L501.1 173.7 L497.9 172.0 L490.9 169.1Z"/><path d="M533.9 179.3 L537.8 179.8 L544.9 180.5 L544.1 181.7 L538.6 181.9 L533.9 180.5Z"/><path d="M568.3 181.5 L570.7 180.7 L573.0 180.0 L577.3 178.3 L575.0 181.7 L571.1 183.6 L568.7 182.9Z"/><path d="M485.0 64.5 L488.9 61.7 L491.3 64.5 L489.7 68.0 L487.8 69.7 L485.4 67.3Z"/><path d="M480.3 65.9 L483.8 65.9 L484.2 68.7 L481.5 69.0Z"/><path d="M512.8 53.9 L515.5 48.8 L516.3 50.3 L514.0 55.4Z"/><path d="M527.7 45.9 L530.4 43.6 L532.7 44.4 L530.0 47.3Z"/><path d="M528.8 41.3 L531.2 40.2 L532.0 42.1 L530.0 42.9Z"/><path d="M135.6 255.0 L138.9 254.4 L143.6 256.0 L142.8 257.0 L138.9 257.2 L135.8 255.6Z"/><path d="M179.0 254.6 L185.0 254.8 L185.0 256.4 L179.2 256.6Z"/><path d="M199.9 285.9 L203.4 285.5 L203.4 288.3 L199.9 288.3Z"/><path d="M451.4 159.3 L454.1 157.5 L455.3 158.6 L454.1 160.6 L452.2 160.1Z"/><path d="M650.5 278.3 L653.2 277.9 L655.2 278.5 L653.2 279.5 L650.9 279.1Z"/><path d="M935.6 189.7 L937.1 188.6 L938.5 189.0 L937.1 190.0Z"/></g>
<g fill="#97c1e3"><path d="M81.9 120.0 L85.7 114.3 L91.4 109.5 L97.1 107.0 L102.9 109.5 L107.6 113.3 L109.5 117.1 L108.6 120.0 L102.9 119.0 L97.1 118.1 L91.4 119.6 L85.7 121.0Z"/><path d="M100.0 125.7 L104.8 124.8 L106.3 129.5 L103.8 133.3 L101.0 141.9 L96.8 141.9 L96.8 133.3 L98.1 128.6Z"/><path d="M109.5 123.8 L116.2 122.9 L121.9 124.8 L125.7 127.6 L124.8 131.4 L120.0 133.3 L114.3 131.4 L111.4 127.6Z"/><path d="M46.7 75.2 L49.9 73.3 L52.4 75.8 L55.2 73.9 L58.1 73.3 L58.7 77.1 L55.2 79.0 L51.4 81.0 L48.6 83.8 L45.7 82.9 L46.1 79.0Z"/><path d="M68.6 101.9 L72.0 101.0 L73.3 105.7 L70.5 107.6 L68.6 104.8Z"/><path d="M92.4 100.0 L95.2 99.0 L96.2 103.8 L93.3 104.4Z"/><path d="M38.1 46.7 L42.9 45.7 L43.8 50.5 L41.0 55.2 L38.1 59.0 L36.6 57.1 L38.7 52.4Z"/><path d="M34.3 42.9 L37.7 42.3 L38.1 46.7 L35.8 49.1 L34.7 46.7Z"/><path d="M51.0 54.3 L55.2 49.9 L57.5 51.0 L54.3 55.6 L51.8 57.1Z"/><path d="M41.0 3.8 L45.7 2.9 L47.6 6.7 L44.2 9.5 L41.5 8.0Z"/><path d="M55.2 7.6 L59.0 8.6 L60.6 11.8 L57.1 11.4Z"/><path d="M31.4 23.8 L34.7 24.4 L35.8 28.6 L33.3 29.0Z"/><path d="M39.0 26.7 L41.5 27.0 L42.9 31.4 L40.4 32.0Z"/><path d="M13.7 57.1 L16.8 56.2 L18.1 61.0 L20.0 65.7 L17.5 66.3 L15.2 62.9Z"/><path d="M0.0 11.4 L5.7 10.5 L7.6 13.3 L2.9 18.1 L0.0 19.0Z"/><path d="M137.1 75.2 L142.9 73.9 L149.5 76.2 L146.7 78.5 L141.9 78.1 L139.0 81.0 L137.1 78.5Z"/><path d="M180.0 68.6 L182.9 71.4 L187.6 72.4 L190.5 70.5 L194.3 74.3 L190.5 76.2 L186.7 75.2 L183.2 78.1 L181.0 74.3Z"/><path d="M170.5 89.5 L173.7 89.9 L174.3 94.3 L171.4 95.2Z"/><path d="M151.4 95.2 L155.2 92.4 L156.6 94.3 L153.3 99.0 L151.4 100.0Z"/><path d="M165.7 70.5 L168.6 71.4 L172.4 77.1 L170.5 78.1 L167.2 74.7Z"/><path d="M152.4 67.6 L158.1 66.7 L158.5 68.2 L153.3 69.5Z"/><path d="M148.6 59.4 L151.4 60.0 L152.0 61.9 L149.0 61.3Z"/><path d="M163.4 81.0 L165.7 81.9 L166.1 84.2 L163.8 83.8Z"/><path d="M70.5 69.5 L74.3 68.6 L73.3 72.0 L70.9 72.4Z"/><path d="M28.2 66.7 L32.4 66.3 L31.4 69.0 L28.6 69.0Z"/><path d="M18.1 114.3 L24.8 112.8 L25.7 114.7 L19.0 116.2Z"/><path d="M35.2 111.4 L39.0 112.4 L43.8 114.3 L44.8 116.2 L39.0 114.7 L35.2 113.3Z"/><path d="M74.3 107.6 L79.0 109.5 L78.5 110.9 L74.7 109.5Z"/><path d="M194.3 101.9 L201.9 104.4 L201.0 105.9 L193.9 103.8Z"/><path d="M517.1 -1.9 L531.4 -1.9 L529.9 7.6 L527.2 15.2 L525.7 22.9 L527.6 28.6 L529.9 33.3 L537.1 35.2 L548.6 34.3 L560.0 32.8 L561.0 35.2 L550.5 38.1 L539.0 39.0 L532.4 41.0 L529.9 45.7 L527.6 50.5 L529.9 55.2 L531.4 59.0 L528.6 62.9 L525.7 61.0 L524.8 66.7 L521.0 70.5 L514.3 73.3 L506.7 74.7 L499.0 75.2 L491.4 76.2 L483.8 75.2 L480.0 72.4 L487.6 70.5 L499.0 68.6 L502.5 61.0 L506.7 53.3 L510.5 45.7 L515.2 39.0 L519.0 34.3 L521.0 28.6 L520.4 22.9 L518.1 17.1 L515.2 9.5Z"/><path d="M561.0 21.0 L564.8 18.1 L569.5 20.0 L571.8 24.8 L570.5 29.5 L565.7 30.5 L561.9 27.6Z"/><path d="M573.3 2.9 L578.1 1.9 L580.0 7.6 L582.9 13.3 L584.8 20.0 L583.8 24.8 L580.0 22.9 L577.1 17.1 L575.2 10.5Z"/><path d="M587.6 39.0 L592.4 38.1 L595.2 42.9 L594.3 46.7 L590.5 45.7Z"/><path d="M588.6 29.5 L591.4 29.0 L592.0 31.4 L589.0 32.0Z"/><path d="M593.9 20.0 L595.4 20.0 L596.2 28.6 L594.7 28.6Z"/><path d="M595.2 33.3 L599.0 35.2 L598.5 36.6 L594.9 34.9Z"/><path d="M562.9 44.2 L566.7 43.8 L567.2 46.1 L563.4 46.5Z"/><path d="M631.4 72.4 L633.3 67.6 L638.1 64.8 L644.2 62.9 L644.8 64.8 L639.0 67.0 L635.2 70.5 L636.2 75.2 L637.7 79.6 L634.7 80.4 L632.4 76.2Z"/><path d="M694.9 83.4 L697.1 82.3 L697.5 84.2 L695.2 85.3Z"/><path d="M711.4 97.1 L714.7 96.2 L715.2 98.7 L712.0 99.4Z"/><path d="M705.7 61.9 L707.8 61.9 L707.8 63.8 L705.7 63.8Z"/><path d="M849.1 89.9 L853.3 89.1 L858.1 85.7 L862.9 81.0 L867.6 75.2 L870.9 69.5 L872.0 63.8 L873.5 64.4 L872.8 71.4 L869.9 78.1 L865.5 84.2 L860.4 88.4 L854.7 92.2 L850.5 91.8Z"/><path d="M839.6 61.3 L845.7 59.6 L846.9 65.7 L847.4 72.4 L849.5 78.1 L847.2 80.4 L845.3 74.3 L844.2 67.6 L841.5 64.8Z"/><path d="M872.0 3.4 L877.1 2.9 L882.9 4.8 L883.4 8.6 L879.0 10.5 L878.5 14.3 L872.4 17.5 L871.4 15.6 L876.2 12.4 L876.2 8.6 L872.4 6.7Z"/><path d="M729.9 125.7 L733.0 121.0 L739.0 119.6 L746.7 120.4 L753.1 120.0 L752.8 122.3 L745.7 123.0 L739.0 122.1 L735.2 123.8 L732.4 129.5Z"/><path d="M769.1 102.9 L771.8 102.5 L771.4 106.7 L773.7 112.4 L773.0 114.7 L769.1 112.0 L768.6 107.6Z"/><path d="M803.8 97.5 L806.1 96.4 L808.0 98.7 L805.7 101.0Z"/><path d="M806.1 104.4 L809.5 105.7 L809.1 107.0 L806.1 105.9Z"/><path d="M802.3 112.4 L805.3 110.5 L806.1 111.6 L803.4 114.3Z"/><path d="M834.7 91.4 L837.0 91.0 L836.2 97.5 L834.7 97.5Z"/><path d="M900.6 107.6 L903.8 104.8 L904.8 106.3 L901.9 109.5Z"/><path d="M902.9 113.3 L904.8 113.0 L904.8 114.7 L902.9 115.0Z"/><path d="M742.9 69.0 L747.6 68.2 L748.0 70.5 L743.2 71.2Z"/><path d="M761.0 121.9 L763.4 121.5 L764.8 125.7 L762.9 125.7Z"/><path d="M728.0 79.0 L730.5 79.6 L729.9 81.9 L728.0 81.0Z"/><path d="M753.3 81.5 L755.2 81.5 L755.2 83.4 L753.3 83.4Z"/><path d="M722.7 59.8 L725.0 59.8 L725.0 61.3 L722.7 61.3Z"/><path d="M755.0 64.8 L757.3 64.8 L757.3 66.3 L755.0 66.3Z"/><path d="M670.6 127.7 L671.7 124.3 L674.8 122.0 L679.5 120.1 L682.3 120.9 L679.8 123.1 L677.3 124.0 L678.2 126.2 L676.7 127.7 L677.6 131.3 L676.7 133.6 L674.5 133.9 L673.2 131.3 L671.4 130.2Z"/><path d="M665.8 144.8 L668.0 144.2 L668.9 146.7 L667.0 148.2 L665.5 147.0Z"/><path d="M555.8 150.9 L551.5 147.2 L551.1 144.0 L549.6 144.0 L551.1 140.3 L553.9 137.6 L553.9 134.9 L557.8 131.3 L558.2 129.4 L560.1 125.8 L562.3 122.1 L565.2 121.5 L567.2 122.7 L569.5 124.3 L573.4 124.3 L569.1 128.6 L573.0 132.7 L575.0 133.8 L580.5 130.5 L584.4 129.9 L585.1 129.9 L587.9 130.5 L588.7 132.1 L591.4 133.8 L594.5 135.4 L597.3 138.1 L599.6 140.3 L602.4 141.9 L604.3 144.0 L604.7 148.8 L602.4 150.6 L598.4 151.9 L594.5 151.6 L590.6 152.2 L586.7 151.1 L584.0 150.3 L580.8 148.5 L578.9 146.4 L575.0 146.9 L572.2 146.7 L568.7 147.7 L564.8 150.3 L560.5 151.1Z"/><path d="M585.1 128.6 L579.7 128.6 L578.5 124.3 L582.4 121.2 L587.9 119.5 L592.2 118.4 L595.3 118.7 L591.4 121.5 L589.8 124.3 L590.6 125.5 L589.1 127.4 L586.7 128.6Z"/><path d="M546.4 155.0 L549.6 155.2 L551.5 155.0 L555.4 154.7 L558.9 153.2 L555.8 151.9 L552.3 151.6 L549.6 152.2 L547.6 153.7Z"/><path d="M629.7 124.9 L635.6 122.1 L641.5 119.2 L647.3 120.4 L650.1 122.7 L649.3 128.3 L643.4 128.8 L642.2 132.7 L638.7 133.8 L641.1 136.0 L642.6 140.3 L646.6 142.4 L648.1 146.7 L648.5 150.3 L653.2 147.2 L655.5 149.3 L655.2 152.9 L649.3 154.0 L648.5 157.0 L650.9 159.6 L652.4 162.6 L652.4 168.1 L653.2 172.0 L649.3 173.0 L645.4 173.7 L641.5 173.0 L638.3 170.6 L635.2 169.6 L633.3 165.6 L633.3 160.6 L635.2 160.1 L635.6 156.0 L638.9 155.2 L635.6 153.4 L634.4 150.9 L632.1 147.2 L629.3 143.0 L627.8 141.4 L627.8 137.1 L626.2 134.3 L624.6 132.7 L626.6 129.4 L629.0 126.6Z"/><path d="M566.0 330.7 L567.9 327.2 L572.2 326.4 L575.4 327.2 L575.0 331.5 L573.4 335.8 L570.7 338.2 L567.2 337.4 L566.4 334.3Z"/><path d="M556.2 341.3 L557.8 341.3 L558.6 346.8 L559.3 351.5 L562.5 357.4 L563.6 362.2 L561.3 361.8 L557.8 354.7 L556.2 348.4Z"/><path d="M574.6 365.3 L576.2 365.7 L577.7 371.3 L578.5 377.3 L579.7 382.1 L578.9 384.9 L576.9 381.7 L575.8 375.3 L575.4 369.3Z"/><path d="M582.4 310.4 L583.6 310.8 L585.5 317.4 L584.0 318.2 L582.8 314.3Z"/><path d="M560.9 323.7 L564.4 319.4 L565.2 319.8 L562.9 323.7Z"/><path d="M553.1 361.8 L555.0 361.8 L555.0 365.3 L553.5 364.5Z"/><path d="M566.4 358.2 L568.3 359.0 L569.9 361.4 L567.9 360.6Z"/><path d="M586.7 279.9 L589.1 279.9 L588.7 281.9 L587.1 281.9Z"/><path d="M557.0 328.4 L558.6 328.4 L558.6 330.3 L557.0 330.3Z"/><path d="M555.0 334.3 L556.6 334.6 L556.2 337.4 L555.0 337.0Z"/><path d="M496.4 275.9 L498.7 274.7 L499.9 276.7 L497.5 277.5Z"/><path d="M570.3 231.3 L571.5 231.7 L569.5 236.0 L565.2 238.9 L564.4 238.1 L568.3 235.1Z"/><path d="M168.2 388.6 L169.8 389.0 L172.9 392.2 L172.9 393.9 L170.2 392.2Z"/><path d="M162.0 285.1 L163.1 285.1 L164.3 289.1 L162.4 292.3 L160.4 290.3 L160.8 287.1Z"/><path d="M740.0 144.6 L743.9 143.0 L747.8 143.5 L748.2 145.1 L743.9 146.1Z"/><path d="M618.4 166.1 L620.3 166.1 L621.5 170.6 L619.6 171.5 L618.8 169.1Z"/><path d="M607.8 164.1 L611.4 162.1 L612.5 164.6 L609.8 165.6Z"/><path d="M580.5 196.9 L581.2 196.9 L581.0 199.9 L580.5 199.9Z"/><path d="M847.2 275.5 L848.8 275.9 L851.1 278.7 L849.5 279.1Z"/><path d="M106.0 280.3 L108.0 280.7 L110.3 284.3 L108.8 284.7 L106.4 282.3Z"/><path d="M831.5 171.5 L833.9 171.1 L835.8 172.5 L833.9 174.0 L831.9 173.0Z"/><path d="M490.5 41.3 L493.6 38.3 L496.8 39.8 L494.8 43.6 L491.3 44.4Z"/><path d="M496.8 49.5 L498.3 49.5 L500.3 43.6 L498.7 42.9Z"/><path d="M548.0 41.3 L550.7 40.6 L550.7 46.6 L548.8 48.8Z"/></g>
<path d="M0 151.5 H960 M0 327.5 H960" stroke="#fff" stroke-opacity="0.28" stroke-width="1" fill="none"/>
<defs>
<radialGradient id="h0"><stop offset="0.00" stop-color="#000" stop-opacity="0.040"/><stop offset="0.05" stop-color="#000" stop-opacity="0.040"/><stop offset="0.10" stop-color="#000" stop-opacity="0.039"/><stop offset="0.15" stop-color="#000" stop-opacity="0.038"/><stop offset="0.20" stop-color="#000" stop-opacity="0.037"/><stop offset="0.25" stop-color="#000" stop-opacity="0.035"/><stop offset="0.30" stop-color="#000" stop-opacity="0.033"/><stop offset="0.35" stop-color="#000" stop-opacity="0.031"/><stop offset="0.40" stop-color="#000" stop-opacity="0.028"/><stop offset="0.45" stop-color="#000" stop-opacity="0.025"/><stop offset="0.50" stop-color="#000" stop-opacity="0.022"/><stop offset="0.55" stop-color="#000" stop-opacity="0.019"/><stop offset="0.60" stop-color="#000" stop-opacity="0.016"/><stop offset="0.65" stop-color="#000" stop-opacity="0.013"/><stop offset="0.70" stop-color="#000" stop-opacity="0.010"/><stop offset="0.75" stop-color="#000" stop-opacity="0.008"/><stop offset="0.80" stop-color="#000" stop-opacity="0.005"/><stop offset="0.85" stop-color="#000" stop-opacity="0.003"/><stop offset="0.90" stop-color="#000" stop-opacity="0.001"/><stop offset="0.95" stop-color="#000" stop-opacity="0.000"/><stop offset="1.00" stop-color="#000" stop-opacity="0.000"/></radialGradient>
<radialGradient id="h1"><stop offset="0.00" stop-color="#000" stop-opacity="0.060"/><stop offset="0.05" stop-color="#000" stop-opacity="0.060"/><stop offset="0.10" stop-color="#000" stop-opacity="0.059"/><stop offset="0.15" stop-color="#000" stop-opacity="0.057"/><stop offset="0.20" stop-color="#000" stop-opacity="0.055"/><stop offset="0.25" stop-color="#000" stop-opacity="0.053"/><stop offset="0.30" stop-color="#000" stop-opacity="0.050"/><stop offset="0.35" stop-color="#000" stop-opacity="0.046"/><stop offset="0.40" stop-color="#000" stop-opacity="0.042"/><stop offset="0.45" stop-color="#000" stop-opacity="0.038"/><stop offset="0.50" stop-color="#000" stop-opacity="0.034"/><stop offset="0.55" stop-color="#000" stop-opacity="0.029"/><stop offset="0.60" stop-color="#000" stop-opacity="0.025"/><stop offset="0.65" stop-color="#000" stop-opacity="0.020"/><stop offset="0.70" stop-color="#000" stop-opacity="0.016"/><stop offset="0.75" stop-color="#000" stop-opacity="0.011"/><stop offset="0.80" stop-color="#000" stop-opacity="0.008"/><stop offset="0.85" stop-color="#000" stop-opacity="0.005"/><stop offset="0.90" stop-color="#000" stop-opacity="0.002"/><stop offset="0.95" stop-color="#000" stop-opacity="0.001"/><stop offset="1.00" stop-color="#000" stop-opacity="0.000"/></radialGradient>
<radialGradient id="h2"><stop offset="0.00" stop-color="#000" stop-opacity="0.075"/><stop offset="0.05" stop-color="#000" stop-opacity="0.075"/><stop offset="0.10" stop-color="#000" stop-opacity="0.074"/><stop offset="0.15" stop-color="#000" stop-opacity="0.072"/><stop offset="0.20" stop-color="#000" stop-opacity="0.069"/><stop offset="0.25" stop-color="#000" stop-opacity="0.066"/><stop offset="0.30" stop-color="#000" stop-opacity="0.062"/><stop offset="0.35" stop-color="#000" stop-opacity="0.058"/><stop offset="0.40" stop-color="#000" stop-opacity="0.053"/><stop offset="0.45" stop-color="#000" stop-opacity="0.048"/><stop offset="0.50" stop-color="#000" stop-opacity="0.042"/><stop offset="0.55" stop-color="#000" stop-opacity="0.036"/><stop offset="0.60" stop-color="#000" stop-opacity="0.031"/><stop offset="0.65" stop-color="#000" stop-opacity="0.025"/><stop offset="0.70" stop-color="#000" stop-opacity="0.020"/><stop offset="0.75" stop-color="#000" stop-opacity="0.014"/><stop offset="0.80" stop-color="#000" stop-opacity="0.010"/><stop offset="0.85" stop-color="#000" stop-opacity="0.006"/><stop offset="0.90" stop-color="#000" stop-opacity="0.003"/><stop offset="0.95" stop-color="#000" stop-opacity="0.001"/><stop offset="1.00" stop-color="#000" stop-opacity="0.000"/></radialGradient>
<radialGradient id="h4"><stop offset="0.00" stop-color="#000" stop-opacity="0.090"/><stop offset="0.05" stop-color="#000" stop-opacity="0.090"/><stop offset="0.10" stop-color="#000" stop-opacity="0.088"/><stop offset="0.15" stop-color="#000" stop-opacity="0.086"/><stop offset="0.20" stop-color="#000" stop-opacity="0.083"/><stop offset="0.25" stop-color="#000" stop-opacity="0.079"/><stop offset="0.30" stop-color="#000" stop-opacity="0.075"/><stop offset="0.35" stop-color="#000" stop-opacity="0.069"/><stop offset="0.40" stop-color="#000" stop-opacity="0.064"/><stop offset="0.45" stop-color="#000" stop-opacity="0.057"/><stop offset="0.50" stop-color="#000" stop-opacity="0.051"/><stop offset="0.55" stop-color="#000" stop-opacity="0.044"/><stop offset="0.60" stop-color="#000" stop-opacity="0.037"/><stop offset="0.65" stop-color="#000" stop-opacity="0.030"/><stop offset="0.70" stop-color="#000" stop-opacity="0.023"/><stop offset="0.75" stop-color="#000" stop-opacity="0.017"/><stop offset="0.80" stop-color="#000" stop-opacity="0.012"/><stop offset="0.85" stop-color="#000" stop-opacity="0.007"/><stop offset="0.90" stop-color="#000" stop-opacity="0.003"/><stop offset="0.95" stop-color="#000" stop-opacity="0.001"/><stop offset="1.00" stop-color="#000" stop-opacity="0.000"/></radialGradient>
<radialGradient id="h5"><stop offset="0.00" stop-color="#000" stop-opacity="0.095"/><stop offset="0.05" stop-color="#000" stop-opacity="0.095"/><stop offset="0.10" stop-color="#000" stop-opacity="0.093"/><stop offset="0.15" stop-color="#000" stop-opacity="0.091"/><stop offset="0.20" stop-color="#000" stop-opacity="0.088"/><stop offset="0.25" stop-color="#000" stop-opacity="0.083"/><stop offset="0.30" stop-color="#000" stop-opacity="0.079"/><stop offset="0.35" stop-color="#000" stop-opacity="0.073"/><stop offset="0.40" stop-color="#000" stop-opacity="0.067"/><stop offset="0.45" stop-color="#000" stop-opacity="0.060"/><stop offset="0.50" stop-color="#000" stop-opacity="0.053"/><stop offset="0.55" stop-color="#000" stop-opacity="0.046"/><stop offset="0.60" stop-color="#000" stop-opacity="0.039"/><stop offset="0.65" stop-color="#000" stop-opacity="0.032"/><stop offset="0.70" stop-color="#000" stop-opacity="0.025"/><stop offset="0.75" stop-color="#000" stop-opacity="0.018"/><stop offset="0.80" stop-color="#000" stop-opacity="0.012"/><stop offset="0.85" stop-color="#000" stop-opacity="0.007"/><stop offset="0.90" stop-color="#000" stop-opacity="0.003"/><stop offset="0.95" stop-color="#000" stop-opacity="0.001"/><stop offset="1.00" stop-color="#000" stop-opacity="0.000"/></radialGradient>
<radialGradient id="h6"><stop offset="0.00" stop-color="#000" stop-opacity="0.100"/><stop offset="0.05" stop-color="#000" stop-opacity="0.100"/><stop offset="0.10" stop-color="#000" stop-opacity="0.098"/><stop offset="0.15" stop-color="#000" stop-opacity="0.096"/><stop offset="0.20" stop-color="#000" stop-opacity="0.092"/><stop offset="0.25" stop-color="#000" stop-opacity="0.088"/><stop offset="0.30" stop-color="#000" stop-opacity="0.083"/><stop offset="0.35" stop-color="#000" stop-opacity="0.077"/><stop offset="0.40" stop-color="#000" stop-opacity="0.071"/><stop offset="0.45" stop-color="#000" stop-opacity="0.064"/><stop offset="0.50" stop-color="#000" stop-opacity="0.056"/><stop offset="0.55" stop-color="#000" stop-opacity="0.049"/><stop offset="0.60" stop-color="#000" stop-opacity="0.041"/><stop offset="0.65" stop-color="#000" stop-opacity="0.033"/><stop offset="0.70" stop-color="#000" stop-opacity="0.026"/><stop offset="0.75" stop-color="#000" stop-opacity="0.019"/><stop offset="0.80" stop-color="#000" stop-opacity="0.013"/><stop offset="0.85" stop-color="#000" stop-opacity="0.008"/><stop offset="0.90" stop-color="#000" stop-opacity="0.004"/><stop offset="0.95" stop-color="#000" stop-opacity="0.001"/><stop offset="1.00" stop-color="#000" stop-opacity="0.000"/></radialGradient>
<radialGradient id="h7"><stop offset="0.00" stop-color="#000" stop-opacity="0.110"/><stop offset="0.05" stop-color="#000" stop-opacity="0.109"/><stop offset="0.10" stop-color="#000" stop-opacity="0.108"/><stop offset="0.15" stop-color="#000" stop-opacity="0.105"/><stop offset="0.20" stop-color="#000" stop-opacity="0.101"/><stop offset="0.25" stop-color="#000" stop-opacity="0.097"/><stop offset="0.30" stop-color="#000" stop-opacity="0.091"/><stop offset="0.35" stop-color="#000" stop-opacity="0.085"/><stop offset="0.40" stop-color="#000" stop-opacity="0.078"/><stop offset="0.45" stop-color="#000" stop-opacity="0.070"/><stop offset="0.50" stop-color="#000" stop-opacity="0.062"/><stop offset="0.55" stop-color="#000" stop-opacity="0.054"/><stop offset="0.60" stop-color="#000" stop-opacity="0.045"/><stop offset="0.65" stop-color="#000" stop-opacity="0.037"/><stop offset="0.70" stop-color="#000" stop-opacity="0.029"/><stop offset="0.75" stop-color="#000" stop-opacity="0.021"/><stop offset="0.80" stop-color="#000" stop-opacity="0.014"/><stop offset="0.85" stop-color="#000" stop-opacity="0.008"/><stop offset="0.90" stop-color="#000" stop-opacity="0.004"/><stop offset="0.95" stop-color="#000" stop-opacity="0.001"/><stop offset="1.00" stop-color="#000" stop-opacity="0.000"/></radialGradient>
<radialGradient id="h8"><stop offset="0.00" stop-color="#000" stop-opacity="0.120"/><stop offset="0.05" stop-color="#000" stop-opacity="0.119"/><stop offset="0.10" stop-color="#000" stop-opacity="0.118"/><stop offset="0.15" stop-color="#000" stop-opacity="0.115"/><stop offset="0.20" stop-color="#000" stop-opacity="0.111"/><stop offset="0.25" stop-color="#000" stop-opacity="0.105"/><stop offset="0.30" stop-color="#000" stop-opacity="0.099"/><stop offset="0.35" stop-color="#000" stop-opacity="0.092"/><stop offset="0.40" stop-color="#000" stop-opacity="0.085"/><stop offset="0.45" stop-color="#000" stop-opacity="0.076"/><stop offset="0.50" stop-color="#000" stop-opacity="0.068"/><stop offset="0.55" stop-color="#000" stop-opacity="0.058"/><stop offset="0.60" stop-color="#000" stop-opacity="0.049"/><stop offset="0.65" stop-color="#000" stop-opacity="0.040"/><stop offset="0.70" stop-color="#000" stop-opacity="0.031"/><stop offset="0.75" stop-color="#000" stop-opacity="0.023"/><stop offset="0.80" stop-color="#000" stop-opacity="0.016"/><stop offset="0.85" stop-color="#000" stop-opacity="0.009"/><stop offset="0.90" stop-color="#000" stop-opacity="0.004"/><stop offset="0.95" stop-color="#000" stop-opacity="0.001"/><stop offset="1.00" stop-color="#000" stop-opacity="0.000"/></radialGradient>
<radialGradient id="h9"><stop offset="0.00" stop-color="#000" stop-opacity="0.140"/><stop offset="0.05" stop-color="#000" stop-opacity="0.139"/><stop offset="0.10" stop-color="#000" stop-opacity="0.137"/><stop offset="0.15" stop-color="#000" stop-opacity="0.134"/><stop offset="0.20" stop-color="#000" stop-opacity="0.129"/><stop offset="0.25" stop-color="#000" stop-opacity="0.123"/><stop offset="0.30" stop-color="#000" stop-opacity="0.116"/><stop offset="0.35" stop-color="#000" stop-opacity="0.108"/><stop offset="0.40" stop-color="#000" stop-opacity="0.099"/><stop offset="0.45" stop-color="#000" stop-opacity="0.089"/><stop offset="0.50" stop-color="#000" stop-opacity="0.079"/><stop offset="0.55" stop-color="#000" stop-opacity="0.068"/><stop offset="0.60" stop-color="#000" stop-opacity="0.057"/><stop offset="0.65" stop-color="#000" stop-opacity="0.047"/><stop offset="0.70" stop-color="#000" stop-opacity="0.036"/><stop offset="0.75" stop-color="#000" stop-opacity="0.027"/><stop offset="0.80" stop-color="#000" stop-opacity="0.018"/><stop offset="0.85" stop-color="#000" stop-opacity="0.011"/><stop offset="0.90" stop-color="#000" stop-opacity="0.005"/><stop offset="0.95" stop-color="#000" stop-opacity="0.001"/><stop offset="1.00" stop-color="#000" stop-opacity="0.000"/></radialGradient>
<radialGradient id="h10"><stop offset="0.00" stop-color="#000" stop-opacity="0.150"/><stop offset="0.05" stop-color="#000" stop-opacity="0.149"/><stop offset="0.10" stop-color="#000" stop-opacity="0.147"/><stop offset="0.15" stop-color="#000" stop-opacity="0.143"/><stop offset="0.20" stop-color="#000" stop-opacity="0.138"/><stop offset="0.25" stop-color="#000" stop-opacity="0.132"/><stop offset="0.30" stop-color="#000" stop-opacity="0.124"/><stop offset="0.35" stop-color="#000" stop-opacity="0.116"/><stop offset="0.40" stop-color="#000" stop-opacity="0.106"/><stop offset="0.45" stop-color="#000" stop-opacity="0.095"/><stop offset="0.50" stop-color="#000" stop-opacity="0.084"/><stop offset="0.55" stop-color="#000" stop-opacity="0.073"/><stop offset="0.60" stop-color="#000" stop-opacity="0.061"/><stop offset="0.65" stop-color="#000" stop-opacity="0.050"/><stop offset="0.70" stop-color="#000" stop-opacity="0.039"/><stop offset="0.75" stop-color="#000" stop-opacity="0.029"/><stop offset="0.80" stop-color="#000" stop-opacity="0.019"/><stop offset="0.85" stop-color="#000" stop-opacity="0.012"/><stop offset="0.90" stop-color="#000" stop-opacity="0.005"/><stop offset="0.95" stop-color="#000" stop-opacity="0.001"/><stop offset="1.00" stop-color="#000" stop-opacity="0.000"/></radialGradient>
<radialGradient id="h11"><stop offset="0.00" stop-color="#000" stop-opacity="0.160"/><stop offset="0.05" stop-color="#000" stop-opacity="0.159"/><stop offset="0.10" stop-color="#000" stop-opacity="0.157"/><stop offset="0.15" stop-color="#000" stop-opacity="0.153"/><stop offset="0.20" stop-color="#000" stop-opacity="0.147"/><stop offset="0.25" stop-color="#000" stop-opacity="0.141"/><stop offset="0.30" stop-color="#000" stop-opacity="0.132"/><stop offset="0.35" stop-color="#000" stop-opacity="0.123"/><stop offset="0.40" stop-color="#000" stop-opacity="0.113"/><stop offset="0.45" stop-color="#000" stop-opacity="0.102"/><stop offset="0.50" stop-color="#000" stop-opacity="0.090"/><stop offset="0.55" stop-color="#000" stop-opacity="0.078"/><stop offset="0.60" stop-color="#000" stop-opacity="0.066"/><stop offset="0.65" stop-color="#000" stop-opacity="0.053"/><stop offset="0.70" stop-color="#000" stop-opacity="0.042"/><stop offset="0.75" stop-color="#000" stop-opacity="0.031"/><stop offset="0.80" stop-color="#000" stop-opacity="0.021"/><stop offset="0.85" stop-color="#000" stop-opacity="0.012"/><stop offset="0.90" stop-color="#000" stop-opacity="0.006"/><stop offset="0.95" stop-color="#000" stop-opacity="0.002"/><stop offset="1.00" stop-color="#000" stop-opacity="0.000"/></radialGradient>
<radialGradient id="h12"><stop offset="0.00" stop-color="#000" stop-opacity="0.180"/><stop offset="0.05" stop-color="#000" stop-opacity="0.179"/><stop offset="0.10" stop-color="#000" stop-opacity="0.176"/><stop offset="0.15" stop-color="#000" stop-opacity="0.172"/><stop offset="0.20" stop-color="#000" stop-opacity="0.166"/><stop offset="0.25" stop-color="#000" stop-opacity="0.158"/><stop offset="0.30" stop-color="#000" stop-opacity="0.149"/><stop offset="0.35" stop-color="#000" stop-opacity="0.139"/><stop offset="0.40" stop-color="#000" stop-opacity="0.127"/><stop offset="0.45" stop-color="#000" stop-opacity="0.114"/><stop offset="0.50" stop-color="#000" stop-opacity="0.101"/><stop offset="0.55" stop-color="#000" stop-opacity="0.088"/><stop offset="0.60" stop-color="#000" stop-opacity="0.074"/><stop offset="0.65" stop-color="#000" stop-opacity="0.060"/><stop offset="0.70" stop-color="#000" stop-opacity="0.047"/><stop offset="0.75" stop-color="#000" stop-opacity="0.034"/><stop offset="0.80" stop-color="#000" stop-opacity="0.023"/><stop offset="0.85" stop-color="#000" stop-opacity="0.014"/><stop offset="0.90" stop-color="#000" stop-opacity="0.006"/><stop offset="0.95" stop-color="#000" stop-opacity="0.002"/><stop offset="1.00" stop-color="#000" stop-opacity="0.000"/></radialGradient>
<radialGradient id="h13"><stop offset="0.00" stop-color="#000" stop-opacity="0.200"/><stop offset="0.05" stop-color="#000" stop-opacity="0.199"/><stop offset="0.10" stop-color="#000" stop-opacity="0.196"/><stop offset="0.15" stop-color="#000" stop-opacity="0.191"/><stop offset="0.20" stop-color="#000" stop-opacity="0.184"/><stop offset="0.25" stop-color="#000" stop-opacity="0.176"/><stop offset="0.30" stop-color="#000" stop-opacity="0.166"/><stop offset="0.35" stop-color="#000" stop-opacity="0.154"/><stop offset="0.40" stop-color="#000" stop-opacity="0.141"/><stop offset="0.45" stop-color="#000" stop-opacity="0.127"/><stop offset="0.50" stop-color="#000" stop-opacity="0.113"/><stop offset="0.55" stop-color="#000" stop-opacity="0.097"/><stop offset="0.60" stop-color="#000" stop-opacity="0.082"/><stop offset="0.65" stop-color="#000" stop-opacity="0.067"/><stop offset="0.70" stop-color="#000" stop-opacity="0.052"/><stop offset="0.75" stop-color="#000" stop-opacity="0.038"/><stop offset="0.80" stop-color="#000" stop-opacity="0.026"/><stop offset="0.85" stop-color="#000" stop-opacity="0.015"/><stop offset="0.90" stop-color="#000" stop-opacity="0.007"/><stop offset="0.95" stop-color="#000" stop-opacity="0.002"/><stop offset="1.00" stop-color="#000" stop-opacity="0.000"/></radialGradient>
<radialGradient id="h14"><stop offset="0.00" stop-color="#000" stop-opacity="0.220"/><stop offset="0.05" stop-color="#000" stop-opacity="0.219"/><stop offset="0.10" stop-color="#000" stop-opacity="0.216"/><stop offset="0.15" stop-color="#000" stop-opacity="0.210"/><stop offset="0.20" stop-color="#000" stop-opacity="0.203"/><stop offset="0.25" stop-color="#000" stop-opacity="0.193"/><stop offset="0.30" stop-color="#000" stop-opacity="0.182"/><stop offset="0.35" stop-color="#000" stop-opacity="0.169"/><stop offset="0.40" stop-color="#000" stop-opacity="0.155"/><stop offset="0.45" stop-color="#000" stop-opacity="0.140"/><stop offset="0.50" stop-color="#000" stop-opacity="0.124"/><stop offset="0.55" stop-color="#000" stop-opacity="0.107"/><stop offset="0.60" stop-color="#000" stop-opacity="0.090"/><stop offset="0.65" stop-color="#000" stop-opacity="0.073"/><stop offset="0.70" stop-color="#000" stop-opacity="0.057"/><stop offset="0.75" stop-color="#000" stop-opacity="0.042"/><stop offset="0.80" stop-color="#000" stop-opacity="0.029"/><stop offset="0.85" stop-color="#000" stop-opacity="0.017"/><stop offset="0.90" stop-color="#000" stop-opacity="0.008"/><stop offset="0.95" stop-color="#000" stop-opacity="0.002"/><stop offset="1.00" stop-color="#000" stop-opacity="0.000"/></radialGradient>
<radialGradient id="h15"><stop offset="0.00" stop-color="#000" stop-opacity="0.240"/><stop offset="0.05" stop-color="#000" stop-opacity="0.239"/><stop offset="0.10" stop-color="#000" stop-opacity="0.235"/><stop offset="0.15" stop-color="#000" stop-opacity="0.229"/><stop offset="0.20" stop-color="#000" stop-opacity="0.221"/><stop offset="0.25" stop-color="#000" stop-opacity="0.211"/><stop offset="0.30" stop-color="#000" stop-opacity="0.199"/><stop offset="0.35" stop-color="#000" stop-opacity="0.185"/><stop offset="0.40" stop-color="#000" stop-opacity="0.169"/><stop offset="0.45" stop-color="#000" stop-opacity="0.153"/><stop offset="0.50" stop-color="#000" stop-opacity="0.135"/><stop offset="0.55" stop-color="#000" stop-opacity="0.117"/><stop offset="0.60" stop-color="#000" stop-opacity="0.098"/><stop offset="0.65" stop-color="#000" stop-opacity="0.080"/><stop offset="0.70" stop-color="#000" stop-opacity="0.062"/><stop offset="0.75" stop-color="#000" stop-opacity="0.046"/><stop offset="0.80" stop-color="#000" stop-opacity="0.031"/><stop offset="0.85" stop-color="#000" stop-opacity="0.018"/><stop offset="0.90" stop-color="#000" stop-opacity="0.009"/><stop offset="0.95" stop-color="#000" stop-opacity="0.002"/><stop offset="1.00" stop-color="#000" stop-opacity="0.000"/></radialGradient>
<radialGradient id="h16"><stop offset="0.00" stop-color="#000" stop-opacity="0.250"/><stop offset="0.05" stop-color="#000" stop-opacity="0.249"/><stop offset="0.10" stop-color="#000" stop-opacity="0.245"/><stop offset="0.15" stop-color="#000" stop-opacity="0.239"/><stop offset="0.20" stop-color="#000" stop-opacity="0.230"/><stop offset="0.25" stop-color="#000" stop-opacity="0.220"/><stop offset="0.30" stop-color="#000" stop-opacity="0.207"/><stop offset="0.35" stop-color="#000" stop-opacity="0.193"/><stop offset="0.40" stop-color="#000" stop-opacity="0.176"/><stop offset="0.45" stop-color="#000" stop-opacity="0.159"/><stop offset="0.50" stop-color="#000" stop-opacity="0.141"/><stop offset="0.55" stop-color="#000" stop-opacity="0.122"/><stop offset="0.60" stop-color="#000" stop-opacity="0.102"/><stop offset="0.65" stop-color="#000" stop-opacity="0.083"/><stop offset="0.70" stop-color="#000" stop-opacity="0.065"/><stop offset="0.75" stop-color="#000" stop-opacity="0.048"/><stop offset="0.80" stop-color="#000" stop-opacity="0.032"/><stop offset="0.85" stop-color="#000" stop-opacity="0.019"/><stop offset="0.90" stop-color="#000" stop-opacity="0.009"/><stop offset="0.95" stop-color="#000" stop-opacity="0.002"/><stop offset="1.00" stop-color="#000" stop-opacity="0.000"/></radialGradient>
<radialGradient id="h17"><stop offset="0.00" stop-color="#000" stop-opacity="0.260"/><stop offset="0.05" stop-color="#000" stop-opacity="0.259"/><stop offset="0.10" stop-color="#000" stop-opacity="0.255"/><stop offset="0.15" stop-color="#000" stop-opacity="0.248"/><stop offset="0.20" stop-color="#000" stop-opacity="0.240"/><stop offset="0.25" stop-color="#000" stop-opacity="0.229"/><stop offset="0.30" stop-color="#000" stop-opacity="0.215"/><stop offset="0.35" stop-color="#000" stop-opacity="0.200"/><stop offset="0.40" stop-color="#000" stop-opacity="0.183"/><stop offset="0.45" stop-color="#000" stop-opacity="0.165"/><stop offset="0.50" stop-color="#000" stop-opacity="0.146"/><stop offset="0.55" stop-color="#000" stop-opacity="0.126"/><stop offset="0.60" stop-color="#000" stop-opacity="0.106"/><stop offset="0.65" stop-color="#000" stop-opacity="0.087"/><stop offset="0.70" stop-color="#000" stop-opacity="0.068"/><stop offset="0.75" stop-color="#000" stop-opacity="0.050"/><stop offset="0.80" stop-color="#000" stop-opacity="0.034"/><stop offset="0.85" stop-color="#000" stop-opacity="0.020"/><stop offset="0.90" stop-color="#000" stop-opacity="0.009"/><stop offset="0.95" stop-color="#000" stop-opacity="0.002"/><stop offset="1.00" stop-color="#000" stop-opacity="0.000"/></radialGradient>
<radialGradient id="h18"><stop offset="0.00" stop-color="#000" stop-opacity="0.280"/><stop offset="0.05" stop-color="#000" stop-opacity="0.279"/><stop offset="0.10" stop-color="#000" stop-opacity="0.274"/><stop offset="0.15" stop-color="#000" stop-opacity="0.268"/><stop offset="0.20" stop-color="#000" stop-opacity="0.258"/><stop offset="0.25" stop-color="#000" stop-opacity="0.246"/><stop offset="0.30" stop-color="#000" stop-opacity="0.232"/><stop offset="0.35" stop-color="#000" stop-opacity="0.216"/><stop offset="0.40" stop-color="#000" stop-opacity="0.198"/><stop offset="0.45" stop-color="#000" stop-opacity="0.178"/><stop offset="0.50" stop-color="#000" stop-opacity="0.158"/><stop offset="0.55" stop-color="#000" stop-opacity="0.136"/><stop offset="0.60" stop-color="#000" stop-opacity="0.115"/><stop offset="0.65" stop-color="#000" stop-opacity="0.093"/><stop offset="0.70" stop-color="#000" stop-opacity="0.073"/><stop offset="0.75" stop-color="#000" stop-opacity="0.054"/><stop offset="0.80" stop-color="#000" stop-opacity="0.036"/><stop offset="0.85" stop-color="#000" stop-opacity="0.022"/><stop offset="0.90" stop-color="#000" stop-opacity="0.010"/><stop offset="0.95" stop-color="#000" stop-opacity="0.003"/><stop offset="1.00" stop-color="#000" stop-opacity="0.000"/></radialGradient>
<radialGradient id="h19"><stop offset="0.00" stop-color="#000" stop-opacity="0.300"/><stop offset="0.05" stop-color="#000" stop-opacity="0.299"/><stop offset="0.10" stop-color="#000" stop-opacity="0.294"/><stop offset="0.15" stop-color="#000" stop-opacity="0.287"/><stop offset="0.20" stop-color="#000" stop-opacity="0.276"/><stop offset="0.25" stop-color="#000" stop-opacity="0.264"/><stop offset="0.30" stop-color="#000" stop-opacity="0.248"/><stop offset="0.35" stop-color="#000" stop-opacity="0.231"/><stop offset="0.40" stop-color="#000" stop-opacity="0.212"/><stop offset="0.45" stop-color="#000" stop-opacity="0.191"/><stop offset="0.50" stop-color="#000" stop-opacity="0.169"/><stop offset="0.55" stop-color="#000" stop-opacity="0.146"/><stop offset="0.60" stop-color="#000" stop-opacity="0.123"/><stop offset="0.65" stop-color="#000" stop-opacity="0.100"/><stop offset="0.70" stop-color="#000" stop-opacity="0.078"/><stop offset="0.75" stop-color="#000" stop-opacity="0.057"/><stop offset="0.80" stop-color="#000" stop-opacity="0.039"/><stop offset="0.85" stop-color="#000" stop-opacity="0.023"/><stop offset="0.90" stop-color="#000" stop-opacity="0.011"/><stop offset="0.95" stop-color="#000" stop-opacity="0.003"/><stop offset="1.00" stop-color="#000" stop-opacity="0.000"/></radialGradient>
<radialGradient id="h20"><stop offset="0.00" stop-color="#000" stop-opacity="0.320"/><stop offset="0.05" stop-color="#000" stop-opacity="0.318"/><stop offset="0.10" stop-color="#000" stop-opacity="0.314"/><stop offset="0.15" stop-color="#000" stop-opacity="0.306"/><stop offset="0.20" stop-color="#000" stop-opacity="0.295"/><stop offset="0.25" stop-color="#000" stop-opacity="0.281"/><stop offset="0.30" stop-color="#000" stop-opacity="0.265"/><stop offset="0.35" stop-color="#000" stop-opacity="0.246"/><stop offset="0.40" stop-color="#000" stop-opacity="0.226"/><stop offset="0.45" stop-color="#000" stop-opacity="0.204"/><stop offset="0.50" stop-color="#000" stop-opacity="0.180"/><stop offset="0.55" stop-color="#000" stop-opacity="0.156"/><stop offset="0.60" stop-color="#000" stop-opacity="0.131"/><stop offset="0.65" stop-color="#000" stop-opacity="0.107"/><stop offset="0.70" stop-color="#000" stop-opacity="0.083"/><stop offset="0.75" stop-color="#000" stop-opacity="0.061"/><stop offset="0.80" stop-color="#000" stop-opacity="0.041"/><stop offset="0.85" stop-color="#000" stop-opacity="0.025"/><stop offset="0.90" stop-color="#000" stop-opacity="0.012"/><stop offset="0.95" stop-color="#000" stop-opacity="0.003"/><stop offset="1.00" stop-color="#000" stop-opacity="0.000"/></radialGradient>
<radialGradient id="h21"><stop offset="0.00" stop-color="#000" stop-opacity="0.330"/><stop offset="0.05" stop-color="#000" stop-opacity="0.328"/><stop offset="0.10" stop-color="#000" stop-opacity="0.323"/><stop offset="0.15" stop-color="#000" stop-opacity="0.315"/><stop offset="0.20" stop-color="#000" stop-opacity="0.304"/><stop offset="0.25" stop-color="#000" stop-opacity="0.290"/><stop offset="0.30" stop-color="#000" stop-opacity="0.273"/><stop offset="0.35" stop-color="#000" stop-opacity="0.254"/><stop offset="0.40" stop-color="#000" stop-opacity="0.233"/><stop offset="0.45" stop-color="#000" stop-opacity="0.210"/><stop offset="0.50" stop-color="#000" stop-opacity="0.186"/><stop offset="0.55" stop-color="#000" stop-opacity="0.161"/><stop offset="0.60" stop-color="#000" stop-opacity="0.135"/><stop offset="0.65" stop-color="#000" stop-opacity="0.110"/><stop offset="0.70" stop-color="#000" stop-opacity="0.086"/><stop offset="0.75" stop-color="#000" stop-opacity="0.063"/><stop offset="0.80" stop-color="#000" stop-opacity="0.043"/><stop offset="0.85" stop-color="#000" stop-opacity="0.025"/><stop offset="0.90" stop-color="#000" stop-opacity="0.012"/><stop offset="0.95" stop-color="#000" stop-opacity="0.003"/><stop offset="1.00" stop-color="#000" stop-opacity="0.000"/></radialGradient>
<radialGradient id="h22"><stop offset="0.00" stop-color="#000" stop-opacity="0.340"/><stop offset="0.05" stop-color="#000" stop-opacity="0.338"/><stop offset="0.10" stop-color="#000" stop-opacity="0.333"/><stop offset="0.15" stop-color="#000" stop-opacity="0.325"/><stop offset="0.20" stop-color="#000" stop-opacity="0.313"/><stop offset="0.25" stop-color="#000" stop-opacity="0.299"/><stop offset="0.30" stop-color="#000" stop-opacity="0.282"/><stop offset="0.35" stop-color="#000" stop-opacity="0.262"/><stop offset="0.40" stop-color="#000" stop-opacity="0.240"/><stop offset="0.45" stop-color="#000" stop-opacity="0.216"/><stop offset="0.50" stop-color="#000" stop-opacity="0.191"/><stop offset="0.55" stop-color="#000" stop-opacity="0.165"/><stop offset="0.60" stop-color="#000" stop-opacity="0.139"/><stop offset="0.65" stop-color="#000" stop-opacity="0.113"/><stop offset="0.70" stop-color="#000" stop-opacity="0.088"/><stop offset="0.75" stop-color="#000" stop-opacity="0.065"/><stop offset="0.80" stop-color="#000" stop-opacity="0.044"/><stop offset="0.85" stop-color="#000" stop-opacity="0.026"/><stop offset="0.90" stop-color="#000" stop-opacity="0.012"/><stop offset="0.95" stop-color="#000" stop-opacity="0.003"/><stop offset="1.00" stop-color="#000" stop-opacity="0.000"/></radialGradient>
<radialGradient id="h23"><stop offset="0.00" stop-color="#000" stop-opacity="0.350"/><stop offset="0.05" stop-color="#000" stop-opacity="0.348"/><stop offset="0.10" stop-color="#000" stop-opacity="0.343"/><stop offset="0.15" stop-color="#000" stop-opacity="0.334"/><stop offset="0.20" stop-color="#000" stop-opacity="0.323"/><stop offset="0.25" stop-color="#000" stop-opacity="0.308"/><stop offset="0.30" stop-color="#000" stop-opacity="0.290"/><stop offset="0.35" stop-color="#000" stop-opacity="0.270"/><stop offset="0.40" stop-color="#000" stop-opacity="0.247"/><stop offset="0.45" stop-color="#000" stop-opacity="0.223"/><stop offset="0.50" stop-color="#000" stop-opacity="0.197"/><stop offset="0.55" stop-color="#000" stop-opacity="0.170"/><stop offset="0.60" stop-color="#000" stop-opacity="0.143"/><stop offset="0.65" stop-color="#000" stop-opacity="0.117"/><stop offset="0.70" stop-color="#000" stop-opacity="0.091"/><stop offset="0.75" stop-color="#000" stop-opacity="0.067"/><stop offset="0.80" stop-color="#000" stop-opacity="0.045"/><stop offset="0.85" stop-color="#000" stop-opacity="0.027"/><stop offset="0.90" stop-color="#000" stop-opacity="0.013"/><stop offset="0.95" stop-color="#000" stop-opacity="0.003"/><stop offset="1.00" stop-color="#000" stop-opacity="0.000"/></radialGradient>
<radialGradient id="h24"><stop offset="0.00" stop-color="#000" stop-opacity="0.360"/><stop offset="0.05" stop-color="#000" stop-opacity="0.358"/><stop offset="0.10" stop-color="#000" stop-opacity="0.353"/><stop offset="0.15" stop-color="#000" stop-opacity="0.344"/><stop offset="0.20" stop-color="#000" stop-opacity="0.332"/><stop offset="0.25" stop-color="#000" stop-opacity="0.316"/><stop offset="0.30" stop-color="#000" stop-opacity="0.298"/><stop offset="0.35" stop-color="#000" stop-opacity="0.277"/><stop offset="0.40" stop-color="#000" stop-opacity="0.254"/><stop offset="0.45" stop-color="#000" stop-opacity="0.229"/><stop offset="0.50" stop-color="#000" stop-opacity="0.202"/><stop offset="0.55" stop-color="#000" stop-opacity="0.175"/><stop offset="0.60" stop-color="#000" stop-opacity="0.147"/><stop offset="0.65" stop-color="#000" stop-opacity="0.120"/><stop offset="0.70" stop-color="#000" stop-opacity="0.094"/><stop offset="0.75" stop-color="#000" stop-opacity="0.069"/><stop offset="0.80" stop-color="#000" stop-opacity="0.047"/><stop offset="0.85" stop-color="#000" stop-opacity="0.028"/><stop offset="0.90" stop-color="#000" stop-opacity="0.013"/><stop offset="0.95" stop-color="#000" stop-opacity="0.003"/><stop offset="1.00" stop-color="#000" stop-opacity="0.000"/></radialGradient>
<radialGradient id="h25"><stop offset="0.00" stop-color="#000" stop-opacity="0.380"/><stop offset="0.05" stop-color="#000" stop-opacity="0.378"/><stop offset="0.10" stop-color="#000" stop-opacity="0.372"/><stop offset="0.15" stop-color="#000" stop-opacity="0.363"/><stop offset="0.20" stop-color="#000" stop-opacity="0.350"/><stop offset="0.25" stop-color="#000" stop-opacity="0.334"/><stop offset="0.30" stop-color="#000" stop-opacity="0.315"/><stop offset="0.35" stop-color="#000" stop-opacity="0.293"/><stop offset="0.40" stop-color="#000" stop-opacity="0.268"/><stop offset="0.45" stop-color="#000" stop-opacity="0.242"/><stop offset="0.50" stop-color="#000" stop-opacity="0.214"/><stop offset="0.55" stop-color="#000" stop-opacity="0.185"/><stop offset="0.60" stop-color="#000" stop-opacity="0.156"/><stop offset="0.65" stop-color="#000" stop-opacity="0.127"/><stop offset="0.70" stop-color="#000" stop-opacity="0.099"/><stop offset="0.75" stop-color="#000" stop-opacity="0.073"/><stop offset="0.80" stop-color="#000" stop-opacity="0.049"/><stop offset="0.85" stop-color="#000" stop-opacity="0.029"/><stop offset="0.90" stop-color="#000" stop-opacity="0.014"/><stop offset="0.95" stop-color="#000" stop-opacity="0.004"/><stop offset="1.00" stop-color="#000" stop-opacity="0.000"/></radialGradient>
<radialGradient id="h26"><stop offset="0.00" stop-color="#000" stop-opacity="0.400"/><stop offset="0.05" stop-color="#000" stop-opacity="0.398"/><stop offset="0.10" stop-color="#000" stop-opacity="0.392"/><stop offset="0.15" stop-color="#000" stop-opacity="0.382"/><stop offset="0.20" stop-color="#000" stop-opacity="0.369"/><stop offset="0.25" stop-color="#000" stop-opacity="0.352"/><stop offset="0.30" stop-color="#000" stop-opacity="0.331"/><stop offset="0.35" stop-color="#000" stop-opacity="0.308"/><stop offset="0.40" stop-color="#000" stop-opacity="0.282"/><stop offset="0.45" stop-color="#000" stop-opacity="0.254"/><stop offset="0.50" stop-color="#000" stop-opacity="0.225"/><stop offset="0.55" stop-color="#000" stop-opacity="0.195"/><stop offset="0.60" stop-color="#000" stop-opacity="0.164"/><stop offset="0.65" stop-color="#000" stop-opacity="0.133"/><stop offset="0.70" stop-color="#000" stop-opacity="0.104"/><stop offset="0.75" stop-color="#000" stop-opacity="0.077"/><stop offset="0.80" stop-color="#000" stop-opacity="0.052"/><stop offset="0.85" stop-color="#000" stop-opacity="0.031"/><stop offset="0.90" stop-color="#000" stop-opacity="0.014"/><stop offset="0.95" stop-color="#000" stop-opacity="0.004"/><stop offset="1.00" stop-color="#000" stop-opacity="0.000"/></radialGradient>
<radialGradient id="h27"><stop offset="0.00" stop-color="#000" stop-opacity="0.420"/><stop offset="0.05" stop-color="#000" stop-opacity="0.418"/><stop offset="0.10" stop-color="#000" stop-opacity="0.412"/><stop offset="0.15" stop-color="#000" stop-opacity="0.401"/><stop offset="0.20" stop-color="#000" stop-opacity="0.387"/><stop offset="0.25" stop-color="#000" stop-opacity="0.369"/><stop offset="0.30" stop-color="#000" stop-opacity="0.348"/><stop offset="0.35" stop-color="#000" stop-opacity="0.323"/><stop offset="0.40" stop-color="#000" stop-opacity="0.296"/><stop offset="0.45" stop-color="#000" stop-opacity="0.267"/><stop offset="0.50" stop-color="#000" stop-opacity="0.236"/><stop offset="0.55" stop-color="#000" stop-opacity="0.204"/><stop offset="0.60" stop-color="#000" stop-opacity="0.172"/><stop offset="0.65" stop-color="#000" stop-opacity="0.140"/><stop offset="0.70" stop-color="#000" stop-opacity="0.109"/><stop offset="0.75" stop-color="#000" stop-opacity="0.080"/><stop offset="0.80" stop-color="#000" stop-opacity="0.054"/><stop offset="0.85" stop-color="#000" stop-opacity="0.032"/><stop offset="0.90" stop-color="#000" stop-opacity="0.015"/><stop offset="0.95" stop-color="#000" stop-opacity="0.004"/><stop offset="1.00" stop-color="#000" stop-opacity="0.000"/></radialGradient>
<radialGradient id="h28"><stop offset="0.00" stop-color="#000" stop-opacity="0.440"/><stop offset="0.05" stop-color="#000" stop-opacity="0.438"/><stop offset="0.10" stop-color="#000" stop-opacity="0.431"/><stop offset="0.15" stop-color="#000" stop-opacity="0.420"/><stop offset="0.20" stop-color="#000" stop-opacity="0.406"/><stop offset="0.25" stop-color="#000" stop-opacity="0.387"/><stop offset="0.30" stop-color="#000" stop-opacity="0.364"/><stop offset="0.35" stop-color="#000" stop-opacity="0.339"/><stop offset="0.40" stop-color="#000" stop-opacity="0.310"/><stop offset="0.45" stop-color="#000" stop-opacity="0.280"/><stop offset="0.50" stop-color="#000" stop-opacity="0.247"/><stop offset="0.55" stop-color="#000" stop-opacity="0.214"/><stop offset="0.60" stop-color="#000" stop-opacity="0.180"/><stop offset="0.65" stop-color="#000" stop-opacity="0.147"/><stop offset="0.70" stop-color="#000" stop-opacity="0.114"/><stop offset="0.75" stop-color="#000" stop-opacity="0.084"/><stop offset="0.80" stop-color="#000" stop-opacity="0.057"/><stop offset="0.85" stop-color="#000" stop-opacity="0.034"/><stop offset="0.90" stop-color="#000" stop-opacity="0.016"/><stop offset="0.95" stop-color="#000" stop-opacity="0.004"/><stop offset="1.00" stop-color="#000" stop-opacity="0.000"/></radialGradient>
<radialGradient id="h29"><stop offset="0.00" stop-color="#000" stop-opacity="0.450"/><stop offset="0.05" stop-color="#000" stop-opacity="0.448"/><stop offset="0.10" stop-color="#000" stop-opacity="0.441"/><stop offset="0.15" stop-color="#000" stop-opacity="0.430"/><stop offset="0.20" stop-color="#000" stop-opacity="0.415"/><stop offset="0.25" stop-color="#000" stop-opacity="0.396"/><stop offset="0.30" stop-color="#000" stop-opacity="0.373"/><stop offset="0.35" stop-color="#000" stop-opacity="0.347"/><stop offset="0.40" stop-color="#000" stop-opacity="0.318"/><stop offset="0.45" stop-color="#000" stop-opacity="0.286"/><stop offset="0.50" stop-color="#000" stop-opacity="0.253"/><stop offset="0.55" stop-color="#000" stop-opacity="0.219"/><stop offset="0.60" stop-color="#000" stop-opacity="0.184"/><stop offset="0.65" stop-color="#000" stop-opacity="0.150"/><stop offset="0.70" stop-color="#000" stop-opacity="0.117"/><stop offset="0.75" stop-color="#000" stop-opacity="0.086"/><stop offset="0.80" stop-color="#000" stop-opacity="0.058"/><stop offset="0.85" stop-color="#000" stop-opacity="0.035"/><stop offset="0.90" stop-color="#000" stop-opacity="0.016"/><stop offset="0.95" stop-color="#000" stop-opacity="0.004"/><stop offset="1.00" stop-color="#000" stop-opacity="0.000"/></radialGradient>
<radialGradient id="h30"><stop offset="0.00" stop-color="#000" stop-opacity="0.460"/><stop offset="0.05" stop-color="#000" stop-opacity="0.458"/><stop offset="0.10" stop-color="#000" stop-opacity="0.451"/><stop offset="0.15" stop-color="#000" stop-opacity="0.440"/><stop offset="0.20" stop-color="#000" stop-opacity="0.424"/><stop offset="0.25" stop-color="#000" stop-opacity="0.404"/><stop offset="0.30" stop-color="#000" stop-opacity="0.381"/><stop offset="0.35" stop-color="#000" stop-opacity="0.354"/><stop offset="0.40" stop-color="#000" stop-opacity="0.325"/><stop offset="0.45" stop-color="#000" stop-opacity="0.293"/><stop offset="0.50" stop-color="#000" stop-opacity="0.259"/><stop offset="0.55" stop-color="#000" stop-opacity="0.224"/><stop offset="0.60" stop-color="#000" stop-opacity="0.188"/><stop offset="0.65" stop-color="#000" stop-opacity="0.153"/><stop offset="0.70" stop-color="#000" stop-opacity="0.120"/><stop offset="0.75" stop-color="#000" stop-opacity="0.088"/><stop offset="0.80" stop-color="#000" stop-opacity="0.060"/><stop offset="0.85" stop-color="#000" stop-opacity="0.035"/><stop offset="0.90" stop-color="#000" stop-opacity="0.017"/><stop offset="0.95" stop-color="#000" stop-opacity="0.004"/><stop offset="1.00" stop-color="#000" stop-opacity="0.000"/></radialGradient>
<radialGradient id="h31"><stop offset="0.00" stop-color="#000" stop-opacity="0.480"/><stop offset="0.05" stop-color="#000" stop-opacity="0.478"/><stop offset="0.10" stop-color="#000" stop-opacity="0.470"/><stop offset="0.15" stop-color="#000" stop-opacity="0.459"/><stop offset="0.20" stop-color="#000" stop-opacity="0.442"/><stop offset="0.25" stop-color="#000" stop-opacity="0.422"/><stop offset="0.30" stop-color="#000" stop-opacity="0.397"/><stop offset="0.35" stop-color="#000" stop-opacity="0.370"/><stop offset="0.40" stop-color="#000" stop-opacity="0.339"/><stop offset="0.45" stop-color="#000" stop-opacity="0.305"/><stop offset="0.50" stop-color="#000" stop-opacity="0.270"/><stop offset="0.55" stop-color="#000" stop-opacity="0.234"/><stop offset="0.60" stop-color="#000" stop-opacity="0.197"/><stop offset="0.65" stop-color="#000" stop-opacity="0.160"/><stop offset="0.70" stop-color="#000" stop-opacity="0.125"/><stop offset="0.75" stop-color="#000" stop-opacity="0.092"/><stop offset="0.80" stop-color="#000" stop-opacity="0.062"/><stop offset="0.85" stop-color="#000" stop-opacity="0.037"/><stop offset="0.90" stop-color="#000" stop-opacity="0.017"/><stop offset="0.95" stop-color="#000" stop-opacity="0.005"/><stop offset="1.00" stop-color="#000" stop-opacity="0.000"/></radialGradient>
<radialGradient id="h32"><stop offset="0.00" stop-color="#000" stop-opacity="0.500"/><stop offset="0.05" stop-color="#000" stop-opacity="0.498"/><stop offset="0.10" stop-color="#000" stop-opacity="0.490"/><stop offset="0.15" stop-color="#000" stop-opacity="0.478"/><stop offset="0.20" stop-color="#000" stop-opacity="0.461"/><stop offset="0.25" stop-color="#000" stop-opacity="0.439"/><stop offset="0.30" stop-color="#000" stop-opacity="0.414"/><stop offset="0.35" stop-color="#000" stop-opacity="0.385"/><stop offset="0.40" stop-color="#000" stop-opacity="0.353"/><stop offset="0.45" stop-color="#000" stop-opacity="0.318"/><stop offset="0.50" stop-color="#000" stop-opacity="0.281"/><stop offset="0.55" stop-color="#000" stop-opacity="0.243"/><stop offset="0.60" stop-color="#000" stop-opacity="0.205"/><stop offset="0.65" stop-color="#000" stop-opacity="0.167"/><stop offset="0.70" stop-color="#000" stop-opacity="0.130"/><stop offset="0.75" stop-color="#000" stop-opacity="0.096"/><stop offset="0.80" stop-color="#000" stop-opacity="0.065"/><stop offset="0.85" stop-color="#000" stop-opacity="0.039"/><stop offset="0.90" stop-color="#000" stop-opacity="0.018"/><stop offset="0.95" stop-color="#000" stop-opacity="0.005"/><stop offset="1.00" stop-color="#000" stop-opacity="0.000"/></radialGradient>
<radialGradient id="h33"><stop offset="0.00" stop-color="#000" stop-opacity="0.520"/><stop offset="0.05" stop-color="#000" stop-opacity="0.517"/><stop offset="0.10" stop-color="#000" stop-opacity="0.510"/><stop offset="0.15" stop-color="#000" stop-opacity="0.497"/><stop offset="0.20" stop-color="#000" stop-opacity="0.479"/><stop offset="0.25" stop-color="#000" stop-opacity="0.457"/><stop offset="0.30" stop-color="#000" stop-opacity="0.431"/><stop offset="0.35" stop-color="#000" stop-opacity="0.400"/><stop offset="0.40" stop-color="#000" stop-opacity="0.367"/><stop offset="0.45" stop-color="#000" stop-opacity="0.331"/><stop offset="0.50" stop-color="#000" stop-opacity="0.292"/><stop offset="0.55" stop-color="#000" stop-opacity="0.253"/><stop offset="0.60" stop-color="#000" stop-opacity="0.213"/><stop offset="0.65" stop-color="#000" stop-opacity="0.173"/><stop offset="0.70" stop-color="#000" stop-opacity="0.135"/><stop offset="0.75" stop-color="#000" stop-opacity="0.100"/><stop offset="0.80" stop-color="#000" stop-opacity="0.067"/><stop offset="0.85" stop-color="#000" stop-opacity="0.040"/><stop offset="0.90" stop-color="#000" stop-opacity="0.019"/><stop offset="0.95" stop-color="#000" stop-opacity="0.005"/><stop offset="1.00" stop-color="#000" stop-opacity="0.000"/></radialGradient>
<radialGradient id="h35"><stop offset="0.00" stop-color="#000" stop-opacity="0.550"/><stop offset="0.05" stop-color="#000" stop-opacity="0.547"/><stop offset="0.10" stop-color="#000" stop-opacity="0.539"/><stop offset="0.15" stop-color="#000" stop-opacity="0.526"/><stop offset="0.20" stop-color="#000" stop-opacity="0.507"/><stop offset="0.25" stop-color="#000" stop-opacity="0.483"/><stop offset="0.30" stop-color="#000" stop-opacity="0.455"/><stop offset="0.35" stop-color="#000" stop-opacity="0.424"/><stop offset="0.40" stop-color="#000" stop-opacity="0.388"/><stop offset="0.45" stop-color="#000" stop-opacity="0.350"/><stop offset="0.50" stop-color="#000" stop-opacity="0.309"/><stop offset="0.55" stop-color="#000" stop-opacity="0.268"/><stop offset="0.60" stop-color="#000" stop-opacity="0.225"/><stop offset="0.65" stop-color="#000" stop-opacity="0.183"/><stop offset="0.70" stop-color="#000" stop-opacity="0.143"/><stop offset="0.75" stop-color="#000" stop-opacity="0.105"/><stop offset="0.80" stop-color="#000" stop-opacity="0.071"/><stop offset="0.85" stop-color="#000" stop-opacity="0.042"/><stop offset="0.90" stop-color="#000" stop-opacity="0.020"/><stop offset="0.95" stop-color="#000" stop-opacity="0.005"/><stop offset="1.00" stop-color="#000" stop-opacity="0.000"/></radialGradient>
<radialGradient id="h36"><stop offset="0.00" stop-color="#000" stop-opacity="0.560"/><stop offset="0.05" stop-color="#000" stop-opacity="0.557"/><stop offset="0.10" stop-color="#000" stop-opacity="0.549"/><stop offset="0.15" stop-color="#000" stop-opacity="0.535"/><stop offset="0.20" stop-color="#000" stop-opacity="0.516"/><stop offset="0.25" stop-color="#000" stop-opacity="0.492"/><stop offset="0.30" stop-color="#000" stop-opacity="0.464"/><stop offset="0.35" stop-color="#000" stop-opacity="0.431"/><stop offset="0.40" stop-color="#000" stop-opacity="0.395"/><stop offset="0.45" stop-color="#000" stop-opacity="0.356"/><stop offset="0.50" stop-color="#000" stop-opacity="0.315"/><stop offset="0.55" stop-color="#000" stop-opacity="0.272"/><stop offset="0.60" stop-color="#000" stop-opacity="0.229"/><stop offset="0.65" stop-color="#000" stop-opacity="0.187"/><stop offset="0.70" stop-color="#000" stop-opacity="0.146"/><stop offset="0.75" stop-color="#000" stop-opacity="0.107"/><stop offset="0.80" stop-color="#000" stop-opacity="0.073"/><stop offset="0.85" stop-color="#000" stop-opacity="0.043"/><stop offset="0.90" stop-color="#000" stop-opacity="0.020"/><stop offset="0.95" stop-color="#000" stop-opacity="0.005"/><stop offset="1.00" stop-color="#000" stop-opacity="0.000"/></radialGradient>
<radialGradient id="h38"><stop offset="0.00" stop-color="#000" stop-opacity="0.600"/><stop offset="0.05" stop-color="#000" stop-opacity="0.597"/><stop offset="0.10" stop-color="#000" stop-opacity="0.588"/><stop offset="0.15" stop-color="#000" stop-opacity="0.573"/><stop offset="0.20" stop-color="#000" stop-opacity="0.553"/><stop offset="0.25" stop-color="#000" stop-opacity="0.527"/><stop offset="0.30" stop-color="#000" stop-opacity="0.497"/><stop offset="0.35" stop-color="#000" stop-opacity="0.462"/><stop offset="0.40" stop-color="#000" stop-opacity="0.423"/><stop offset="0.45" stop-color="#000" stop-opacity="0.382"/><stop offset="0.50" stop-color="#000" stop-opacity="0.337"/><stop offset="0.55" stop-color="#000" stop-opacity="0.292"/><stop offset="0.60" stop-color="#000" stop-opacity="0.246"/><stop offset="0.65" stop-color="#000" stop-opacity="0.200"/><stop offset="0.70" stop-color="#000" stop-opacity="0.156"/><stop offset="0.75" stop-color="#000" stop-opacity="0.115"/><stop offset="0.80" stop-color="#000" stop-opacity="0.078"/><stop offset="0.85" stop-color="#000" stop-opacity="0.046"/><stop offset="0.90" stop-color="#000" stop-opacity="0.022"/><stop offset="0.95" stop-color="#000" stop-opacity="0.006"/><stop offset="1.00" stop-color="#000" stop-opacity="0.000"/></radialGradient>
<radialGradient id="h39"><stop offset="0.00" stop-color="#000" stop-opacity="0.620"/><stop offset="0.05" stop-color="#000" stop-opacity="0.617"/><stop offset="0.10" stop-color="#000" stop-opacity="0.608"/><stop offset="0.15" stop-color="#000" stop-opacity="0.592"/><stop offset="0.20" stop-color="#000" stop-opacity="0.571"/><stop offset="0.25" stop-color="#000" stop-opacity="0.545"/><stop offset="0.30" stop-color="#000" stop-opacity="0.513"/><stop offset="0.35" stop-color="#000" stop-opacity="0.477"/><stop offset="0.40" stop-color="#000" stop-opacity="0.437"/><stop offset="0.45" stop-color="#000" stop-opacity="0.394"/><stop offset="0.50" stop-color="#000" stop-opacity="0.349"/><stop offset="0.55" stop-color="#000" stop-opacity="0.302"/><stop offset="0.60" stop-color="#000" stop-opacity="0.254"/><stop offset="0.65" stop-color="#000" stop-opacity="0.207"/><stop offset="0.70" stop-color="#000" stop-opacity="0.161"/><stop offset="0.75" stop-color="#000" stop-opacity="0.119"/><stop offset="0.80" stop-color="#000" stop-opacity="0.080"/><stop offset="0.85" stop-color="#000" stop-opacity="0.048"/><stop offset="0.90" stop-color="#000" stop-opacity="0.022"/><stop offset="0.95" stop-color="#000" stop-opacity="0.006"/><stop offset="1.00" stop-color="#000" stop-opacity="0.000"/></radialGradient>
<radialGradient id="h41"><stop offset="0.00" stop-color="#000" stop-opacity="0.650"/><stop offset="0.05" stop-color="#000" stop-opacity="0.647"/><stop offset="0.10" stop-color="#000" stop-opacity="0.637"/><stop offset="0.15" stop-color="#000" stop-opacity="0.621"/><stop offset="0.20" stop-color="#000" stop-opacity="0.599"/><stop offset="0.25" stop-color="#000" stop-opacity="0.571"/><stop offset="0.30" stop-color="#000" stop-opacity="0.538"/><stop offset="0.35" stop-color="#000" stop-opacity="0.501"/><stop offset="0.40" stop-color="#000" stop-opacity="0.459"/><stop offset="0.45" stop-color="#000" stop-opacity="0.413"/><stop offset="0.50" stop-color="#000" stop-opacity="0.366"/><stop offset="0.55" stop-color="#000" stop-opacity="0.316"/><stop offset="0.60" stop-color="#000" stop-opacity="0.266"/><stop offset="0.65" stop-color="#000" stop-opacity="0.217"/><stop offset="0.70" stop-color="#000" stop-opacity="0.169"/><stop offset="0.75" stop-color="#000" stop-opacity="0.124"/><stop offset="0.80" stop-color="#000" stop-opacity="0.084"/><stop offset="0.85" stop-color="#000" stop-opacity="0.050"/><stop offset="0.90" stop-color="#000" stop-opacity="0.023"/><stop offset="0.95" stop-color="#000" stop-opacity="0.006"/><stop offset="1.00" stop-color="#000" stop-opacity="0.000"/></radialGradient>
<radialGradient id="h42"><stop offset="0.00" stop-color="#000" stop-opacity="0.660"/><stop offset="0.05" stop-color="#000" stop-opacity="0.657"/><stop offset="0.10" stop-color="#000" stop-opacity="0.647"/><stop offset="0.15" stop-color="#000" stop-opacity="0.631"/><stop offset="0.20" stop-color="#000" stop-opacity="0.608"/><stop offset="0.25" stop-color="#000" stop-opacity="0.580"/><stop offset="0.30" stop-color="#000" stop-opacity="0.547"/><stop offset="0.35" stop-color="#000" stop-opacity="0.508"/><stop offset="0.40" stop-color="#000" stop-opacity="0.466"/><stop offset="0.45" stop-color="#000" stop-opacity="0.420"/><stop offset="0.50" stop-color="#000" stop-opacity="0.371"/><stop offset="0.55" stop-color="#000" stop-opacity="0.321"/><stop offset="0.60" stop-color="#000" stop-opacity="0.270"/><stop offset="0.65" stop-color="#000" stop-opacity="0.220"/><stop offset="0.70" stop-color="#000" stop-opacity="0.172"/><stop offset="0.75" stop-color="#000" stop-opacity="0.126"/><stop offset="0.80" stop-color="#000" stop-opacity="0.086"/><stop offset="0.85" stop-color="#000" stop-opacity="0.051"/><stop offset="0.90" stop-color="#000" stop-opacity="0.024"/><stop offset="0.95" stop-color="#000" stop-opacity="0.006"/><stop offset="1.00" stop-color="#000" stop-opacity="0.000"/></radialGradient>
<radialGradient id="h43"><stop offset="0.00" stop-color="#000" stop-opacity="0.680"/><stop offset="0.05" stop-color="#000" stop-opacity="0.677"/><stop offset="0.10" stop-color="#000" stop-opacity="0.666"/><stop offset="0.15" stop-color="#000" stop-opacity="0.650"/><stop offset="0.20" stop-color="#000" stop-opacity="0.627"/><stop offset="0.25" stop-color="#000" stop-opacity="0.598"/><stop offset="0.30" stop-color="#000" stop-opacity="0.563"/><stop offset="0.35" stop-color="#000" stop-opacity="0.524"/><stop offset="0.40" stop-color="#000" stop-opacity="0.480"/><stop offset="0.45" stop-color="#000" stop-opacity="0.432"/><stop offset="0.50" stop-color="#000" stop-opacity="0.383"/><stop offset="0.55" stop-color="#000" stop-opacity="0.331"/><stop offset="0.60" stop-color="#000" stop-opacity="0.279"/><stop offset="0.65" stop-color="#000" stop-opacity="0.227"/><stop offset="0.70" stop-color="#000" stop-opacity="0.177"/><stop offset="0.75" stop-color="#000" stop-opacity="0.130"/><stop offset="0.80" stop-color="#000" stop-opacity="0.088"/><stop offset="0.85" stop-color="#000" stop-opacity="0.052"/><stop offset="0.90" stop-color="#000" stop-opacity="0.025"/><stop offset="0.95" stop-color="#000" stop-opacity="0.006"/><stop offset="1.00" stop-color="#000" stop-opacity="0.000"/></radialGradient>
<radialGradient id="h44"><stop offset="0.00" stop-color="#000" stop-opacity="0.700"/><stop offset="0.05" stop-color="#000" stop-opacity="0.697"/><stop offset="0.10" stop-color="#000" stop-opacity="0.686"/><stop offset="0.15" stop-color="#000" stop-opacity="0.669"/><stop offset="0.20" stop-color="#000" stop-opacity="0.645"/><stop offset="0.25" stop-color="#000" stop-opacity="0.615"/><stop offset="0.30" stop-color="#000" stop-opacity="0.580"/><stop offset="0.35" stop-color="#000" stop-opacity="0.539"/><stop offset="0.40" stop-color="#000" stop-opacity="0.494"/><stop offset="0.45" stop-color="#000" stop-opacity="0.445"/><stop offset="0.50" stop-color="#000" stop-opacity="0.394"/><stop offset="0.55" stop-color="#000" stop-opacity="0.341"/><stop offset="0.60" stop-color="#000" stop-opacity="0.287"/><stop offset="0.65" stop-color="#000" stop-opacity="0.233"/><stop offset="0.70" stop-color="#000" stop-opacity="0.182"/><stop offset="0.75" stop-color="#000" stop-opacity="0.134"/><stop offset="0.80" stop-color="#000" stop-opacity="0.091"/><stop offset="0.85" stop-color="#000" stop-opacity="0.054"/><stop offset="0.90" stop-color="#000" stop-opacity="0.025"/><stop offset="0.95" stop-color="#000" stop-opacity="0.007"/><stop offset="1.00" stop-color="#000" stop-opacity="0.000"/></radialGradient>
<radialGradient id="h45"><stop offset="0.00" stop-color="#000" stop-opacity="0.720"/><stop offset="0.05" stop-color="#000" stop-opacity="0.716"/><stop offset="0.10" stop-color="#000" stop-opacity="0.706"/><stop offset="0.15" stop-color="#000" stop-opacity="0.688"/><stop offset="0.20" stop-color="#000" stop-opacity="0.664"/><stop offset="0.25" stop-color="#000" stop-opacity="0.633"/><stop offset="0.30" stop-color="#000" stop-opacity="0.596"/><stop offset="0.35" stop-color="#000" stop-opacity="0.554"/><stop offset="0.40" stop-color="#000" stop-opacity="0.508"/><stop offset="0.45" stop-color="#000" stop-opacity="0.458"/><stop offset="0.50" stop-color="#000" stop-opacity="0.405"/><stop offset="0.55" stop-color="#000" stop-opacity="0.350"/><stop offset="0.60" stop-color="#000" stop-opacity="0.295"/><stop offset="0.65" stop-color="#000" stop-opacity="0.240"/><stop offset="0.70" stop-color="#000" stop-opacity="0.187"/><stop offset="0.75" stop-color="#000" stop-opacity="0.138"/><stop offset="0.80" stop-color="#000" stop-opacity="0.093"/><stop offset="0.85" stop-color="#000" stop-opacity="0.055"/><stop offset="0.90" stop-color="#000" stop-opacity="0.026"/><stop offset="0.95" stop-color="#000" stop-opacity="0.007"/><stop offset="1.00" stop-color="#000" stop-opacity="0.000"/></radialGradient>
<radialGradient id="h46"><stop offset="0.00" stop-color="#000" stop-opacity="0.740"/><stop offset="0.05" stop-color="#000" stop-opacity="0.736"/><stop offset="0.10" stop-color="#000" stop-opacity="0.725"/><stop offset="0.15" stop-color="#000" stop-opacity="0.707"/><stop offset="0.20" stop-color="#000" stop-opacity="0.682"/><stop offset="0.25" stop-color="#000" stop-opacity="0.650"/><stop offset="0.30" stop-color="#000" stop-opacity="0.613"/><stop offset="0.35" stop-color="#000" stop-opacity="0.570"/><stop offset="0.40" stop-color="#000" stop-opacity="0.522"/><stop offset="0.45" stop-color="#000" stop-opacity="0.471"/><stop offset="0.50" stop-color="#000" stop-opacity="0.416"/><stop offset="0.55" stop-color="#000" stop-opacity="0.360"/><stop offset="0.60" stop-color="#000" stop-opacity="0.303"/><stop offset="0.65" stop-color="#000" stop-opacity="0.247"/><stop offset="0.70" stop-color="#000" stop-opacity="0.192"/><stop offset="0.75" stop-color="#000" stop-opacity="0.142"/><stop offset="0.80" stop-color="#000" stop-opacity="0.096"/><stop offset="0.85" stop-color="#000" stop-opacity="0.057"/><stop offset="0.90" stop-color="#000" stop-opacity="0.027"/><stop offset="0.95" stop-color="#000" stop-opacity="0.007"/><stop offset="1.00" stop-color="#000" stop-opacity="0.000"/></radialGradient>
<radialGradient id="h49"><stop offset="0.00" stop-color="#000" stop-opacity="0.780"/><stop offset="0.05" stop-color="#000" stop-opacity="0.776"/><stop offset="0.10" stop-color="#000" stop-opacity="0.764"/><stop offset="0.15" stop-color="#000" stop-opacity="0.745"/><stop offset="0.20" stop-color="#000" stop-opacity="0.719"/><stop offset="0.25" stop-color="#000" stop-opacity="0.686"/><stop offset="0.30" stop-color="#000" stop-opacity="0.646"/><stop offset="0.35" stop-color="#000" stop-opacity="0.601"/><stop offset="0.40" stop-color="#000" stop-opacity="0.550"/><stop offset="0.45" stop-color="#000" stop-opacity="0.496"/><stop offset="0.50" stop-color="#000" stop-opacity="0.439"/><stop offset="0.55" stop-color="#000" stop-opacity="0.379"/><stop offset="0.60" stop-color="#000" stop-opacity="0.319"/><stop offset="0.65" stop-color="#000" stop-opacity="0.260"/><stop offset="0.70" stop-color="#000" stop-opacity="0.203"/><stop offset="0.75" stop-color="#000" stop-opacity="0.149"/><stop offset="0.80" stop-color="#000" stop-opacity="0.101"/><stop offset="0.85" stop-color="#000" stop-opacity="0.060"/><stop offset="0.90" stop-color="#000" stop-opacity="0.028"/><stop offset="0.95" stop-color="#000" stop-opacity="0.007"/><stop offset="1.00" stop-color="#000" stop-opacity="0.000"/></radialGradient>
<radialGradient id="h50"><stop offset="0.00" stop-color="#000" stop-opacity="0.800"/><stop offset="0.05" stop-color="#000" stop-opacity="0.796"/><stop offset="0.10" stop-color="#000" stop-opacity="0.784"/><stop offset="0.15" stop-color="#000" stop-opacity="0.764"/><stop offset="0.20" stop-color="#000" stop-opacity="0.737"/><stop offset="0.25" stop-color="#000" stop-opacity="0.703"/><stop offset="0.30" stop-color="#000" stop-opacity="0.662"/><stop offset="0.35" stop-color="#000" stop-opacity="0.616"/><stop offset="0.40" stop-color="#000" stop-opacity="0.564"/><stop offset="0.45" stop-color="#000" stop-opacity="0.509"/><stop offset="0.50" stop-color="#000" stop-opacity="0.450"/><stop offset="0.55" stop-color="#000" stop-opacity="0.389"/><stop offset="0.60" stop-color="#000" stop-opacity="0.328"/><stop offset="0.65" stop-color="#000" stop-opacity="0.267"/><stop offset="0.70" stop-color="#000" stop-opacity="0.208"/><stop offset="0.75" stop-color="#000" stop-opacity="0.153"/><stop offset="0.80" stop-color="#000" stop-opacity="0.104"/><stop offset="0.85" stop-color="#000" stop-opacity="0.062"/><stop offset="0.90" stop-color="#000" stop-opacity="0.029"/><stop offset="0.95" stop-color="#000" stop-opacity="0.008"/><stop offset="1.00" stop-color="#000" stop-opacity="0.000"/></radialGradient>
<radialGradient id="h52"><stop offset="0.00" stop-color="#000" stop-opacity="0.840"/><stop offset="0.05" stop-color="#000" stop-opacity="0.836"/><stop offset="0.10" stop-color="#000" stop-opacity="0.823"/><stop offset="0.15" stop-color="#000" stop-opacity="0.803"/><stop offset="0.20" stop-color="#000" stop-opacity="0.774"/><stop offset="0.25" stop-color="#000" stop-opacity="0.738"/><stop offset="0.30" stop-color="#000" stop-opacity="0.696"/><stop offset="0.35" stop-color="#000" stop-opacity="0.647"/><stop offset="0.40" stop-color="#000" stop-opacity="0.593"/><stop offset="0.45" stop-color="#000" stop-opacity="0.534"/><stop offset="0.50" stop-color="#000" stop-opacity="0.472"/><stop offset="0.55" stop-color="#000" stop-opacity="0.409"/><stop offset="0.60" stop-color="#000" stop-opacity="0.344"/><stop offset="0.65" stop-color="#000" stop-opacity="0.280"/><stop offset="0.70" stop-color="#000" stop-opacity="0.218"/><stop offset="0.75" stop-color="#000" stop-opacity="0.161"/><stop offset="0.80" stop-color="#000" stop-opacity="0.109"/><stop offset="0.85" stop-color="#000" stop-opacity="0.065"/><stop offset="0.90" stop-color="#000" stop-opacity="0.030"/><stop offset="0.95" stop-color="#000" stop-opacity="0.008"/><stop offset="1.00" stop-color="#000" stop-opacity="0.000"/></radialGradient>
<radialGradient id="h55"><stop offset="0.00" stop-color="#000" stop-opacity="0.900"/><stop offset="0.05" stop-color="#000" stop-opacity="0.896"/><stop offset="0.10" stop-color="#000" stop-opacity="0.882"/><stop offset="0.15" stop-color="#000" stop-opacity="0.860"/><stop offset="0.20" stop-color="#000" stop-opacity="0.829"/><stop offset="0.25" stop-color="#000" stop-opacity="0.791"/><stop offset="0.30" stop-color="#000" stop-opacity="0.745"/><stop offset="0.35" stop-color="#000" stop-opacity="0.693"/><stop offset="0.40" stop-color="#000" stop-opacity="0.635"/><stop offset="0.45" stop-color="#000" stop-opacity="0.572"/><stop offset="0.50" stop-color="#000" stop-opacity="0.506"/><stop offset="0.55" stop-color="#000" stop-opacity="0.438"/><stop offset="0.60" stop-color="#000" stop-opacity="0.369"/><stop offset="0.65" stop-color="#000" stop-opacity="0.300"/><stop offset="0.70" stop-color="#000" stop-opacity="0.234"/><stop offset="0.75" stop-color="#000" stop-opacity="0.172"/><stop offset="0.80" stop-color="#000" stop-opacity="0.117"/><stop offset="0.85" stop-color="#000" stop-opacity="0.069"/><stop offset="0.90" stop-color="#000" stop-opacity="0.032"/><stop offset="0.95" stop-color="#000" stop-opacity="0.009"/><stop offset="1.00" stop-color="#000" stop-opacity="0.000"/></radialGradient>
<radialGradient id="h56"><stop offset="0.00" stop-color="#000" stop-opacity="0.920"/><stop offset="0.05" stop-color="#000" stop-opacity="0.915"/><stop offset="0.10" stop-color="#000" stop-opacity="0.902"/><stop offset="0.15" stop-color="#000" stop-opacity="0.879"/><stop offset="0.20" stop-color="#000" stop-opacity="0.848"/><stop offset="0.25" stop-color="#000" stop-opacity="0.809"/><stop offset="0.30" stop-color="#000" stop-opacity="0.762"/><stop offset="0.35" stop-color="#000" stop-opacity="0.708"/><stop offset="0.40" stop-color="#000" stop-opacity="0.649"/><stop offset="0.45" stop-color="#000" stop-opacity="0.585"/><stop offset="0.50" stop-color="#000" stop-opacity="0.518"/><stop offset="0.55" stop-color="#000" stop-opacity="0.448"/><stop offset="0.60" stop-color="#000" stop-opacity="0.377"/><stop offset="0.65" stop-color="#000" stop-opacity="0.307"/><stop offset="0.70" stop-color="#000" stop-opacity="0.239"/><stop offset="0.75" stop-color="#000" stop-opacity="0.176"/><stop offset="0.80" stop-color="#000" stop-opacity="0.119"/><stop offset="0.85" stop-color="#000" stop-opacity="0.071"/><stop offset="0.90" stop-color="#000" stop-opacity="0.033"/><stop offset="0.95" stop-color="#000" stop-opacity="0.009"/><stop offset="1.00" stop-color="#000" stop-opacity="0.000"/></radialGradient>
<radialGradient id="h57"><stop offset="0.00" stop-color="#000" stop-opacity="0.930"/><stop offset="0.05" stop-color="#000" stop-opacity="0.925"/><stop offset="0.10" stop-color="#000" stop-opacity="0.911"/><stop offset="0.15" stop-color="#000" stop-opacity="0.889"/><stop offset="0.20" stop-color="#000" stop-opacity="0.857"/><stop offset="0.25" stop-color="#000" stop-opacity="0.817"/><stop offset="0.30" stop-color="#000" stop-opacity="0.770"/><stop offset="0.35" stop-color="#000" stop-opacity="0.716"/><stop offset="0.40" stop-color="#000" stop-opacity="0.656"/><stop offset="0.45" stop-color="#000" stop-opacity="0.591"/><stop offset="0.50" stop-color="#000" stop-opacity="0.523"/><stop offset="0.55" stop-color="#000" stop-opacity="0.452"/><stop offset="0.60" stop-color="#000" stop-opacity="0.381"/><stop offset="0.65" stop-color="#000" stop-opacity="0.310"/><stop offset="0.70" stop-color="#000" stop-opacity="0.242"/><stop offset="0.75" stop-color="#000" stop-opacity="0.178"/><stop offset="0.80" stop-color="#000" stop-opacity="0.121"/><stop offset="0.85" stop-color="#000" stop-opacity="0.072"/><stop offset="0.90" stop-color="#000" stop-opacity="0.034"/><stop offset="0.95" stop-color="#000" stop-opacity="0.009"/><stop offset="1.00" stop-color="#000" stop-opacity="0.000"/></radialGradient>
<radialGradient id="h59"><stop offset="0.00" stop-color="#000" stop-opacity="0.950"/><stop offset="0.05" stop-color="#000" stop-opacity="0.945"/><stop offset="0.10" stop-color="#000" stop-opacity="0.931"/><stop offset="0.15" stop-color="#000" stop-opacity="0.908"/><stop offset="0.20" stop-color="#000" stop-opacity="0.876"/><stop offset="0.25" stop-color="#000" stop-opacity="0.835"/><stop offset="0.30" stop-color="#000" stop-opacity="0.787"/><stop offset="0.35" stop-color="#000" stop-opacity="0.732"/><stop offset="0.40" stop-color="#000" stop-opacity="0.670"/><stop offset="0.45" stop-color="#000" stop-opacity="0.604"/><stop offset="0.50" stop-color="#000" stop-opacity="0.534"/><stop offset="0.55" stop-color="#000" stop-opacity="0.462"/><stop offset="0.60" stop-color="#000" stop-opacity="0.389"/><stop offset="0.65" stop-color="#000" stop-opacity="0.317"/><stop offset="0.70" stop-color="#000" stop-opacity="0.247"/><stop offset="0.75" stop-color="#000" stop-opacity="0.182"/><stop offset="0.80" stop-color="#000" stop-opacity="0.123"/><stop offset="0.85" stop-color="#000" stop-opacity="0.073"/><stop offset="0.90" stop-color="#000" stop-opacity="0.034"/><stop offset="0.95" stop-color="#000" stop-opacity="0.009"/><stop offset="1.00" stop-color="#000" stop-opacity="0.000"/></radialGradient>
<radialGradient id="h62"><stop offset="0.00" stop-color="#000" stop-opacity="1.000"/><stop offset="0.05" stop-color="#000" stop-opacity="0.995"/><stop offset="0.10" stop-color="#000" stop-opacity="0.980"/><stop offset="0.15" stop-color="#000" stop-opacity="0.956"/><stop offset="0.20" stop-color="#000" stop-opacity="0.922"/><stop offset="0.25" stop-color="#000" stop-opacity="0.879"/><stop offset="0.30" stop-color="#000" stop-opacity="0.828"/><stop offset="0.35" stop-color="#000" stop-opacity="0.770"/><stop offset="0.40" stop-color="#000" stop-opacity="0.706"/><stop offset="0.45" stop-color="#000" stop-opacity="0.636"/><stop offset="0.50" stop-color="#000" stop-opacity="0.562"/><stop offset="0.55" stop-color="#000" stop-opacity="0.487"/><stop offset="0.60" stop-color="#000" stop-opacity="0.410"/><stop offset="0.65" stop-color="#000" stop-opacity="0.334"/><stop offset="0.70" stop-color="#000" stop-opacity="0.260"/><stop offset="0.75" stop-color="#000" stop-opacity="0.191"/><stop offset="0.80" stop-color="#000" stop-opacity="0.130"/><stop offset="0.85" stop-color="#000" stop-opacity="0.077"/><stop offset="0.90" stop-color="#000" stop-opacity="0.036"/><stop offset="0.95" stop-color="#000" stop-opacity="0.010"/><stop offset="1.00" stop-color="#000" stop-opacity="0.000"/></radialGradient>
<radialGradient id="h63"><stop offset="0.00" stop-color="#000" stop-opacity="1.000"/><stop offset="0.05" stop-color="#000" stop-opacity="1.000"/><stop offset="0.10" stop-color="#000" stop-opacity="1.000"/><stop offset="0.15" stop-color="#000" stop-opacity="0.975"/><stop offset="0.20" stop-color="#000" stop-opacity="0.940"/><stop offset="0.25" stop-color="#000" stop-opacity="0.896"/><stop offset="0.30" stop-color="#000" stop-opacity="0.845"/><stop offset="0.35" stop-color="#000" stop-opacity="0.785"/><stop offset="0.40" stop-color="#000" stop-opacity="0.720"/><stop offset="0.45" stop-color="#000" stop-opacity="0.649"/><stop offset="0.50" stop-color="#000" stop-opacity="0.574"/><stop offset="0.55" stop-color="#000" stop-opacity="0.496"/><stop offset="0.60" stop-color="#000" stop-opacity="0.418"/><stop offset="0.65" stop-color="#000" stop-opacity="0.340"/><stop offset="0.70" stop-color="#000" stop-opacity="0.265"/><stop offset="0.75" stop-color="#000" stop-opacity="0.195"/><stop offset="0.80" stop-color="#000" stop-opacity="0.132"/><stop offset="0.85" stop-color="#000" stop-opacity="0.079"/><stop offset="0.90" stop-color="#000" stop-opacity="0.037"/><stop offset="0.95" stop-color="#000" stop-opacity="0.010"/><stop offset="1.00" stop-color="#000" stop-opacity="0.000"/></radialGradient>
<radialGradient id="h65"><stop offset="0.00" stop-color="#000" stop-opacity="1.000"/><stop offset="0.05" stop-color="#000" stop-opacity="1.000"/><stop offset="0.10" stop-color="#000" stop-opacity="1.000"/><stop offset="0.15" stop-color="#000" stop-opacity="1.000"/><stop offset="0.20" stop-color="#000" stop-opacity="0.968"/><stop offset="0.25" stop-color="#000" stop-opacity="0.923"/><stop offset="0.30" stop-color="#000" stop-opacity="0.870"/><stop offset="0.35" stop-color="#000" stop-opacity="0.809"/><stop offset="0.40" stop-color="#000" stop-opacity="0.741"/><stop offset="0.45" stop-color="#000" stop-opacity="0.668"/><stop offset="0.50" stop-color="#000" stop-opacity="0.591"/><stop offset="0.55" stop-color="#000" stop-opacity="0.511"/><stop offset="0.60" stop-color="#000" stop-opacity="0.430"/><stop offset="0.65" stop-color="#000" stop-opacity="0.350"/><stop offset="0.70" stop-color="#000" stop-opacity="0.273"/><stop offset="0.75" stop-color="#000" stop-opacity="0.201"/><stop offset="0.80" stop-color="#000" stop-opacity="0.136"/><stop offset="0.85" stop-color="#000" stop-opacity="0.081"/><stop offset="0.90" stop-color="#000" stop-opacity="0.038"/><stop offset="0.95" stop-color="#000" stop-opacity="0.010"/><stop offset="1.00" stop-color="#000" stop-opacity="0.000"/></radialGradient>
<radialGradient id="h67"><stop offset="0.00" stop-color="#000" stop-opacity="1.000"/><stop offset="0.05" stop-color="#000" stop-opacity="1.000"/><stop offset="0.10" stop-color="#000" stop-opacity="1.000"/><stop offset="0.15" stop-color="#000" stop-opacity="1.000"/><stop offset="0.20" stop-color="#000" stop-opacity="0.995"/><stop offset="0.25" stop-color="#000" stop-opacity="0.949"/><stop offset="0.30" stop-color="#000" stop-opacity="0.894"/><stop offset="0.35" stop-color="#000" stop-opacity="0.832"/><stop offset="0.40" stop-color="#000" stop-opacity="0.762"/><stop offset="0.45" stop-color="#000" stop-opacity="0.687"/><stop offset="0.50" stop-color="#000" stop-opacity="0.608"/><stop offset="0.55" stop-color="#000" stop-opacity="0.525"/><stop offset="0.60" stop-color="#000" stop-opacity="0.442"/><stop offset="0.65" stop-color="#000" stop-opacity="0.360"/><stop offset="0.70" stop-color="#000" stop-opacity="0.281"/><stop offset="0.75" stop-color="#000" stop-opacity="0.207"/><stop offset="0.80" stop-color="#000" stop-opacity="0.140"/><stop offset="0.85" stop-color="#000" stop-opacity="0.083"/><stop offset="0.90" stop-color="#000" stop-opacity="0.039"/><stop offset="0.95" stop-color="#000" stop-opacity="0.010"/><stop offset="1.00" stop-color="#000" stop-opacity="0.000"/></radialGradient>
<radialGradient id="h68"><stop offset="0.00" stop-color="#000" stop-opacity="1.000"/><stop offset="0.05" stop-color="#000" stop-opacity="1.000"/><stop offset="0.10" stop-color="#000" stop-opacity="1.000"/><stop offset="0.15" stop-color="#000" stop-opacity="1.000"/><stop offset="0.20" stop-color="#000" stop-opacity="1.000"/><stop offset="0.25" stop-color="#000" stop-opacity="0.967"/><stop offset="0.30" stop-color="#000" stop-opacity="0.911"/><stop offset="0.35" stop-color="#000" stop-opacity="0.847"/><stop offset="0.40" stop-color="#000" stop-opacity="0.776"/><stop offset="0.45" stop-color="#000" stop-opacity="0.700"/><stop offset="0.50" stop-color="#000" stop-opacity="0.619"/><stop offset="0.55" stop-color="#000" stop-opacity="0.535"/><stop offset="0.60" stop-color="#000" stop-opacity="0.451"/><stop offset="0.65" stop-color="#000" stop-opacity="0.367"/><stop offset="0.70" stop-color="#000" stop-opacity="0.286"/><stop offset="0.75" stop-color="#000" stop-opacity="0.211"/><stop offset="0.80" stop-color="#000" stop-opacity="0.143"/><stop offset="0.85" stop-color="#000" stop-opacity="0.085"/><stop offset="0.90" stop-color="#000" stop-opacity="0.040"/><stop offset="0.95" stop-color="#000" stop-opacity="0.010"/><stop offset="1.00" stop-color="#000" stop-opacity="0.000"/></radialGradient>
<radialGradient id="h71"><stop offset="0.00" stop-color="#000" stop-opacity="1.000"/><stop offset="0.05" stop-color="#000" stop-opacity="1.000"/><stop offset="0.10" stop-color="#000" stop-opacity="1.000"/><stop offset="0.15" stop-color="#000" stop-opacity="1.000"/><stop offset="0.20" stop-color="#000" stop-opacity="1.000"/><stop offset="0.25" stop-color="#000" stop-opacity="1.000"/><stop offset="0.30" stop-color="#000" stop-opacity="0.952"/><stop offset="0.35" stop-color="#000" stop-opacity="0.886"/><stop offset="0.40" stop-color="#000" stop-opacity="0.811"/><stop offset="0.45" stop-color="#000" stop-opacity="0.731"/><stop offset="0.50" stop-color="#000" stop-opacity="0.647"/><stop offset="0.55" stop-color="#000" stop-opacity="0.559"/><stop offset="0.60" stop-color="#000" stop-opacity="0.471"/><stop offset="0.65" stop-color="#000" stop-opacity="0.384"/><stop offset="0.70" stop-color="#000" stop-opacity="0.299"/><stop offset="0.75" stop-color="#000" stop-opacity="0.220"/><stop offset="0.80" stop-color="#000" stop-opacity="0.149"/><stop offset="0.85" stop-color="#000" stop-opacity="0.089"/><stop offset="0.90" stop-color="#000" stop-opacity="0.042"/><stop offset="0.95" stop-color="#000" stop-opacity="0.011"/><stop offset="1.00" stop-color="#000" stop-opacity="0.000"/></radialGradient>
<radialGradient id="h74"><stop offset="0.00" stop-color="#000" stop-opacity="1.000"/><stop offset="0.05" stop-color="#000" stop-opacity="1.000"/><stop offset="0.10" stop-color="#000" stop-opacity="1.000"/><stop offset="0.15" stop-color="#000" stop-opacity="1.000"/><stop offset="0.20" stop-color="#000" stop-opacity="1.000"/><stop offset="0.25" stop-color="#000" stop-opacity="1.000"/><stop offset="0.30" stop-color="#000" stop-opacity="0.994"/><stop offset="0.35" stop-color="#000" stop-opacity="0.924"/><stop offset="0.40" stop-color="#000" stop-opacity="0.847"/><stop offset="0.45" stop-color="#000" stop-opacity="0.763"/><stop offset="0.50" stop-color="#000" stop-opacity="0.675"/><stop offset="0.55" stop-color="#000" stop-opacity="0.584"/><stop offset="0.60" stop-color="#000" stop-opacity="0.492"/><stop offset="0.65" stop-color="#000" stop-opacity="0.400"/><stop offset="0.70" stop-color="#000" stop-opacity="0.312"/><stop offset="0.75" stop-color="#000" stop-opacity="0.230"/><stop offset="0.80" stop-color="#000" stop-opacity="0.156"/><stop offset="0.85" stop-color="#000" stop-opacity="0.092"/><stop offset="0.90" stop-color="#000" stop-opacity="0.043"/><stop offset="0.95" stop-color="#000" stop-opacity="0.011"/><stop offset="1.00" stop-color="#000" stop-opacity="0.000"/></radialGradient>
<radialGradient id="h75"><stop offset="0.00" stop-color="#000" stop-opacity="1.000"/><stop offset="0.05" stop-color="#000" stop-opacity="1.000"/><stop offset="0.10" stop-color="#000" stop-opacity="1.000"/><stop offset="0.15" stop-color="#000" stop-opacity="1.000"/><stop offset="0.20" stop-color="#000" stop-opacity="1.000"/><stop offset="0.25" stop-color="#000" stop-opacity="1.000"/><stop offset="0.30" stop-color="#000" stop-opacity="1.000"/><stop offset="0.35" stop-color="#000" stop-opacity="0.963"/><stop offset="0.40" stop-color="#000" stop-opacity="0.882"/><stop offset="0.45" stop-color="#000" stop-opacity="0.795"/><stop offset="0.50" stop-color="#000" stop-opacity="0.703"/><stop offset="0.55" stop-color="#000" stop-opacity="0.608"/><stop offset="0.60" stop-color="#000" stop-opacity="0.512"/><stop offset="0.65" stop-color="#000" stop-opacity="0.417"/><stop offset="0.70" stop-color="#000" stop-opacity="0.325"/><stop offset="0.75" stop-color="#000" stop-opacity="0.239"/><stop offset="0.80" stop-color="#000" stop-opacity="0.162"/><stop offset="0.85" stop-color="#000" stop-opacity="0.096"/><stop offset="0.90" stop-color="#000" stop-opacity="0.045"/><stop offset="0.95" stop-color="#000" stop-opacity="0.012"/><stop offset="1.00" stop-color="#000" stop-opacity="0.000"/></radialGradient>
<radialGradient id="h76"><stop offset="0.00" stop-color="#000" stop-opacity="1.000"/><stop offset="0.05" stop-color="#000" stop-opacity="1.000"/><stop offset="0.10" stop-color="#000" stop-opacity="1.000"/><stop offset="0.15" stop-color="#000" stop-opacity="1.000"/><stop offset="0.20" stop-color="#000" stop-opacity="1.000"/><stop offset="0.25" stop-color="#000" stop-opacity="1.000"/><stop offset="0.30" stop-color="#000" stop-opacity="1.000"/><stop offset="0.35" stop-color="#000" stop-opacity="1.000"/><stop offset="0.40" stop-color="#000" stop-opacity="0.917"/><stop offset="0.45" stop-color="#000" stop-opacity="0.827"/><stop offset="0.50" stop-color="#000" stop-opacity="0.731"/><stop offset="0.55" stop-color="#000" stop-opacity="0.632"/><stop offset="0.60" stop-color="#000" stop-opacity="0.532"/><stop offset="0.65" stop-color="#000" stop-opacity="0.434"/><stop offset="0.70" stop-color="#000" stop-opacity="0.338"/><stop offset="0.75" stop-color="#000" stop-opacity="0.249"/><stop offset="0.80" stop-color="#000" stop-opacity="0.168"/><stop offset="0.85" stop-color="#000" stop-opacity="0.100"/><stop offset="0.90" stop-color="#000" stop-opacity="0.047"/><stop offset="0.95" stop-color="#000" stop-opacity="0.012"/><stop offset="1.00" stop-color="#000" stop-opacity="0.000"/></radialGradient>
<radialGradient id="h81"><stop offset="0.00" stop-color="#000" stop-opacity="1.000"/><stop offset="0.05" stop-color="#000" stop-opacity="1.000"/><stop offset="0.10" stop-color="#000" stop-opacity="1.000"/><stop offset="0.15" stop-color="#000" stop-opacity="1.000"/><stop offset="0.20" stop-color="#000" stop-opacity="1.000"/><stop offset="0.25" stop-color="#000" stop-opacity="1.000"/><stop offset="0.30" stop-color="#000" stop-opacity="1.000"/><stop offset="0.35" stop-color="#000" stop-opacity="1.000"/><stop offset="0.40" stop-color="#000" stop-opacity="1.000"/><stop offset="0.45" stop-color="#000" stop-opacity="1.000"/><stop offset="0.50" stop-color="#000" stop-opacity="1.000"/><stop offset="0.55" stop-color="#000" stop-opacity="1.000"/><stop offset="0.60" stop-color="#000" stop-opacity="0.901"/><stop offset="0.65" stop-color="#000" stop-opacity="0.734"/><stop offset="0.70" stop-color="#000" stop-opacity="0.572"/><stop offset="0.75" stop-color="#000" stop-opacity="0.421"/><stop offset="0.80" stop-color="#000" stop-opacity="0.285"/><stop offset="0.85" stop-color="#000" stop-opacity="0.169"/><stop offset="0.90" stop-color="#000" stop-opacity="0.079"/><stop offset="0.95" stop-color="#000" stop-opacity="0.021"/><stop offset="1.00" stop-color="#000" stop-opacity="0.000"/></radialGradient>
<radialGradient id="h82"><stop offset="0.00" stop-color="#000" stop-opacity="1.000"/><stop offset="0.05" stop-color="#000" stop-opacity="1.000"/><stop offset="0.10" stop-color="#000" stop-opacity="1.000"/><stop offset="0.15" stop-color="#000" stop-opacity="1.000"/><stop offset="0.20" stop-color="#000" stop-opacity="1.000"/><stop offset="0.25" stop-color="#000" stop-opacity="1.000"/><stop offset="0.30" stop-color="#000" stop-opacity="1.000"/><stop offset="0.35" stop-color="#000" stop-opacity="1.000"/><stop offset="0.40" stop-color="#000" stop-opacity="1.000"/><stop offset="0.45" stop-color="#000" stop-opacity="1.000"/><stop offset="0.50" stop-color="#000" stop-opacity="1.000"/><stop offset="0.55" stop-color="#000" stop-opacity="1.000"/><stop offset="0.60" stop-color="#000" stop-opacity="1.000"/><stop offset="0.65" stop-color="#000" stop-opacity="0.834"/><stop offset="0.70" stop-color="#000" stop-opacity="0.650"/><stop offset="0.75" stop-color="#000" stop-opacity="0.479"/><stop offset="0.80" stop-color="#000" stop-opacity="0.324"/><stop offset="0.85" stop-color="#000" stop-opacity="0.193"/><stop offset="0.90" stop-color="#000" stop-opacity="0.090"/><stop offset="0.95" stop-color="#000" stop-opacity="0.024"/><stop offset="1.00" stop-color="#000" stop-opacity="0.000"/></radialGradient>
<radialGradient id="h83"><stop offset="0.00" stop-color="#000" stop-opacity="1.000"/><stop offset="0.05" stop-color="#000" stop-opacity="1.000"/><stop offset="0.10" stop-color="#000" stop-opacity="1.000"/><stop offset="0.15" stop-color="#000" stop-opacity="1.000"/><stop offset="0.20" stop-color="#000" stop-opacity="1.000"/><stop offset="0.25" stop-color="#000" stop-opacity="1.000"/><stop offset="0.30" stop-color="#000" stop-opacity="1.000"/><stop offset="0.35" stop-color="#000" stop-opacity="1.000"/><stop offset="0.40" stop-color="#000" stop-opacity="1.000"/><stop offset="0.45" stop-color="#000" stop-opacity="1.000"/><stop offset="0.50" stop-color="#000" stop-opacity="1.000"/><stop offset="0.55" stop-color="#000" stop-opacity="1.000"/><stop offset="0.60" stop-color="#000" stop-opacity="1.000"/><stop offset="0.65" stop-color="#000" stop-opacity="1.000"/><stop offset="0.70" stop-color="#000" stop-opacity="0.780"/><stop offset="0.75" stop-color="#000" stop-opacity="0.574"/><stop offset="0.80" stop-color="#000" stop-opacity="0.389"/><stop offset="0.85" stop-color="#000" stop-opacity="0.231"/><stop offset="0.90" stop-color="#000" stop-opacity="0.108"/><stop offset="0.95" stop-color="#000" stop-opacity="0.029"/><stop offset="1.00" stop-color="#000" stop-opacity="0.000"/></radialGradient>
<filter id="heatf" x="0" y="0" width="100%" height="100%" color-interpolation-filters="sRGB"><feColorMatrix type="matrix" values="0 0 0 1 0  0 0 0 1 0  0 0 0 1 0  0 0 0 1 0"/><feComponentTransfer><feFuncR type="table" tableValues="0.941 0.933 0.910 0.871 0.816 0.745 0.647 0.529 0.392 0.275 0.204 0.157 0.125 0.110 0.110 0.118 0.133 0.149 0.165 0.173 0.173"/><feFuncG type="table" tableValues="0.973 0.969 0.961 0.945 0.925 0.902 0.871 0.831 0.792 0.753 0.706 0.647 0.580 0.502 0.424 0.345 0.275 0.220 0.180 0.165 0.157"/><feFuncB type="table" tableValues="0.804 0.784 0.745 0.690 0.620 0.549 0.463 0.384 0.329 0.306 0.329 0.392 0.463 0.518 0.541 0.525 0.486 0.447 0.408 0.392 0.384"/><feFuncA type="table" tableValues="0.000 0.280 0.480 0.600 0.700 0.780 0.850 0.900 0.940 0.970 0.990 1.000 1.000 1.000 1.000 1.000 1.000 1.000 1.000 1.000 1.000"/></feComponentTransfer></filter>
</defs>
<g filter="url(#heatf)">
<circle cx="164.1" cy="144.8" r="14.3" fill="url(#h59)"/>
<circle cx="156.9" cy="150.3" r="13.0" fill="url(#h42)"/>
<circle cx="152.6" cy="153.4" r="15.6" fill="url(#h59)"/>
<circle cx="148.0" cy="157.3" r="14.3" fill="url(#h59)"/>
<circle cx="142.4" cy="160.6" r="14.3" fill="url(#h59)"/>
<circle cx="140.7" cy="162.6" r="14.3" fill="url(#h59)"/>
<circle cx="142.8" cy="144.3" r="11.7" fill="url(#h31)"/>
<circle cx="138.5" cy="140.6" r="11.7" fill="url(#h20)"/>
<circle cx="154.3" cy="127.7" r="14.3" fill="url(#h59)"/>
<circle cx="145.9" cy="128.2" r="13.0" fill="url(#h46)"/>
<circle cx="131.5" cy="137.9" r="12.5" fill="url(#h71)"/>
<circle cx="127.2" cy="139.0" r="11.7" fill="url(#h28)"/>
<circle cx="124.2" cy="141.5" r="11.7" fill="url(#h25)"/>
<circle cx="163.5" cy="120.4" r="11.7" fill="url(#h20)"/>
<circle cx="193.4" cy="132.4" r="13.0" fill="url(#h14)"/>
<circle cx="181.3" cy="125.2" r="11.7" fill="url(#h12)"/>
<circle cx="235.9" cy="116.0" r="9.1" fill="url(#h16)"/>
<circle cx="115.8" cy="145.1" r="12.0" fill="url(#h52)"/>
<circle cx="99.3" cy="147.3" r="12.5" fill="url(#h68)"/>
<circle cx="92.3" cy="141.0" r="11.7" fill="url(#h23)"/>
<circle cx="98.2" cy="141.2" r="10.4" fill="url(#h19)"/>
<circle cx="105.0" cy="158.2" r="13.0" fill="url(#h20)"/>
<circle cx="117.4" cy="157.2" r="12.0" fill="url(#h35)"/>
<circle cx="122.5" cy="149.3" r="12.0" fill="url(#h39)"/>
<circle cx="129.1" cy="154.8" r="12.0" fill="url(#h44)"/>
<circle cx="111.5" cy="161.6" r="11.7" fill="url(#h20)"/>
<circle cx="77.2" cy="130.6" r="13.0" fill="url(#h28)"/>
<circle cx="80.4" cy="135.9" r="10.4" fill="url(#h25)"/>
<circle cx="89.2" cy="164.0" r="12.3" fill="url(#h18)"/>
<circle cx="72.1" cy="161.6" r="11.7" fill="url(#h14)"/>
<circle cx="84.1" cy="148.5" r="10.4" fill="url(#h20)"/>
<circle cx="63.8" cy="152.9" r="10.4" fill="url(#h12)"/>
<circle cx="62.1" cy="102.1" r="11.7" fill="url(#h11)"/>
<circle cx="24.8" cy="88.3" r="11.7" fill="url(#h12)"/>
<circle cx="102.6" cy="176.1" r="11.7" fill="url(#h19)"/>
<circle cx="111.9" cy="187.6" r="14.3" fill="url(#h31)"/>
<circle cx="133.4" cy="177.4" r="13.0" fill="url(#h25)"/>
<circle cx="125.8" cy="180.6" r="11.7" fill="url(#h25)"/>
<circle cx="129.3" cy="192.2" r="10.4" fill="url(#h20)"/>
<circle cx="102.5" cy="188.7" r="11.7" fill="url(#h24)"/>
<circle cx="120.1" cy="206.5" r="10.4" fill="url(#h24)"/>
<circle cx="123.6" cy="211.6" r="10.4" fill="url(#h24)"/>
<circle cx="119.5" cy="214.1" r="10.4" fill="url(#h24)"/>
<circle cx="128.3" cy="223.7" r="11.1" fill="url(#h25)"/>
<circle cx="112.3" cy="202.9" r="10.4" fill="url(#h14)"/>
<circle cx="89.7" cy="205.1" r="11.7" fill="url(#h24)"/>
<circle cx="69.0" cy="206.0" r="11.5" fill="url(#h67)"/>
<circle cx="63.4" cy="192.2" r="12.0" fill="url(#h46)"/>
<circle cx="59.7" cy="203.7" r="11.0" fill="url(#h38)"/>
<circle cx="56.8" cy="207.5" r="10.0" fill="url(#h23)"/>
<circle cx="60.7" cy="179.5" r="10.4" fill="url(#h14)"/>
<circle cx="81.0" cy="182.9" r="10.4" fill="url(#h14)"/>
<circle cx="89.8" cy="181.0" r="10.4" fill="url(#h24)"/>
<circle cx="31.4" cy="158.4" r="12.5" fill="url(#h55)"/>
<circle cx="30.3" cy="157.0" r="10.0" fill="url(#h10)"/>
<circle cx="4.3" cy="153.1" r="11.7" fill="url(#h25)"/>
<circle cx="24.9" cy="181.3" r="11.7" fill="url(#h24)"/>
<circle cx="3.7" cy="189.0" r="13.0" fill="url(#h25)"/>
<circle cx="8.0" cy="194.8" r="11.7" fill="url(#h24)"/>
<circle cx="25.9" cy="196.9" r="10.4" fill="url(#h12)"/>
<circle cx="43.7" cy="188.4" r="10.4" fill="url(#h9)"/>
<circle cx="119.7" cy="235.0" r="9.1" fill="url(#h26)"/>
<circle cx="54.3" cy="250.5" r="11.0" fill="url(#h75)"/>
<circle cx="37.8" cy="245.3" r="10.4" fill="url(#h16)"/>
<circle cx="49.7" cy="224.1" r="10.4" fill="url(#h14)"/>
<circle cx="57.9" cy="252.1" r="10.4" fill="url(#h18)"/>
<circle cx="66.0" cy="251.6" r="10.4" fill="url(#h11)"/>
<circle cx="91.6" cy="244.1" r="10.4" fill="url(#h9)"/>
<circle cx="46.2" cy="243.5" r="10.4" fill="url(#h12)"/>
<circle cx="183.5" cy="254.8" r="9.1" fill="url(#h12)"/>
<circle cx="136.9" cy="152.9" r="11.7" fill="url(#h17)"/>
<circle cx="133.0" cy="141.4" r="10.4" fill="url(#h19)"/>
<circle cx="155.7" cy="133.4" r="10.4" fill="url(#h24)"/>
<circle cx="159.2" cy="137.6" r="10.4" fill="url(#h25)"/>
<circle cx="167.2" cy="137.9" r="10.4" fill="url(#h16)"/>
<circle cx="173.3" cy="131.0" r="10.4" fill="url(#h11)"/>
<circle cx="106.8" cy="141.6" r="10.4" fill="url(#h17)"/>
<circle cx="111.3" cy="142.8" r="10.4" fill="url(#h19)"/>
<circle cx="96.9" cy="156.5" r="10.4" fill="url(#h18)"/>
<circle cx="102.1" cy="154.9" r="10.4" fill="url(#h17)"/>
<circle cx="106.6" cy="165.9" r="10.4" fill="url(#h13)"/>
<circle cx="111.5" cy="166.9" r="10.4" fill="url(#h17)"/>
<circle cx="113.9" cy="177.1" r="10.4" fill="url(#h17)"/>
<circle cx="125.2" cy="186.5" r="10.4" fill="url(#h18)"/>
<circle cx="139.1" cy="169.4" r="10.4" fill="url(#h25)"/>
<circle cx="135.0" cy="167.0" r="10.4" fill="url(#h19)"/>
<circle cx="127.5" cy="170.9" r="10.4" fill="url(#h13)"/>
<circle cx="143.6" cy="172.8" r="10.4" fill="url(#h16)"/>
<circle cx="152.2" cy="309.6" r="13.0" fill="url(#h65)"/>
<circle cx="146.4" cy="303.5" r="10.4" fill="url(#h24)"/>
<circle cx="142.7" cy="314.5" r="10.4" fill="url(#h16)"/>
<circle cx="149.4" cy="284.8" r="10.4" fill="url(#h14)"/>
<circle cx="135.0" cy="328.8" r="11.7" fill="url(#h25)"/>
<circle cx="129.5" cy="336.5" r="10.4" fill="url(#h20)"/>
<circle cx="140.7" cy="375.5" r="9.1" fill="url(#h74)"/>
<circle cx="113.1" cy="289.0" r="10.4" fill="url(#h20)"/>
<circle cx="131.0" cy="292.7" r="10.4" fill="url(#h12)"/>
<circle cx="207.3" cy="340.1" r="11.7" fill="url(#h9)"/>
<circle cx="222.6" cy="389.8" r="11.7" fill="url(#h8)"/>
<circle cx="291.3" cy="342.6" r="12.0" fill="url(#h32)"/>
<circle cx="304.3" cy="350.7" r="11.0" fill="url(#h29)"/>
<circle cx="305.5" cy="359.6" r="10.4" fill="url(#h18)"/>
<circle cx="291.4" cy="379.2" r="9.1" fill="url(#h18)"/>
<circle cx="254.7" cy="390.6" r="12.0" fill="url(#h45)"/>
<circle cx="270.1" cy="407.5" r="12.0" fill="url(#h41)"/>
<circle cx="249.4" cy="394.2" r="10.4" fill="url(#h12)"/>
<circle cx="252.3" cy="333.7" r="11.7" fill="url(#h12)"/>
<circle cx="180.3" cy="286.7" r="10.4" fill="url(#h11)"/>
<circle cx="268.7" cy="337.9" r="10.4" fill="url(#h7)"/>
<circle cx="284.4" cy="409.1" r="10.4" fill="url(#h14)"/>
<circle cx="253.1" cy="403.3" r="10.4" fill="url(#h14)"/>
<circle cx="228.5" cy="409.7" r="10.4" fill="url(#h9)"/>
<circle cx="441.6" cy="92.2" r="15.6" fill="url(#h74)"/>
<circle cx="437.1" cy="90.7" r="13.0" fill="url(#h46)"/>
<circle cx="442.5" cy="87.8" r="13.0" fill="url(#h46)"/>
<circle cx="434.6" cy="85.9" r="13.0" fill="url(#h46)"/>
<circle cx="433.2" cy="79.5" r="13.0" fill="url(#h59)"/>
<circle cx="436.1" cy="78.1" r="13.0" fill="url(#h46)"/>
<circle cx="435.7" cy="69.6" r="11.7" fill="url(#h38)"/>
<circle cx="429.5" cy="62.8" r="11.7" fill="url(#h46)"/>
<circle cx="425.4" cy="63.4" r="11.7" fill="url(#h46)"/>
<circle cx="433.8" cy="54.3" r="10.4" fill="url(#h25)"/>
<circle cx="430.3" cy="59.2" r="10.4" fill="url(#h29)"/>
<circle cx="431.8" cy="92.6" r="11.7" fill="url(#h38)"/>
<circle cx="429.5" cy="92.2" r="11.7" fill="url(#h33)"/>
<circle cx="436.5" cy="96.0" r="11.7" fill="url(#h33)"/>
<circle cx="428.3" cy="97.2" r="10.4" fill="url(#h27)"/>
<circle cx="426.0" cy="99.1" r="10.4" fill="url(#h24)"/>
<circle cx="418.8" cy="72.1" r="10.4" fill="url(#h20)"/>
<circle cx="417.5" cy="80.4" r="11.7" fill="url(#h26)"/>
<circle cx="408.9" cy="89.7" r="5.5" fill="url(#h62)"/>
<circle cx="406.6" cy="80.9" r="10.4" fill="url(#h18)"/>
<circle cx="408.2" cy="84.9" r="10.4" fill="url(#h17)"/>
<circle cx="447.1" cy="85.1" r="10.4" fill="url(#h29)"/>
<circle cx="437.6" cy="83.0" r="11.7" fill="url(#h38)"/>
<circle cx="430.4" cy="80.0" r="11.7" fill="url(#h38)"/>
<circle cx="426.1" cy="86.5" r="9.1" fill="url(#h18)"/>
<circle cx="424.6" cy="111.2" r="5.0" fill="url(#h62)"/>
<circle cx="451.2" cy="108.4" r="15.6" fill="url(#h74)"/>
<circle cx="454.0" cy="97.7" r="11.7" fill="url(#h38)"/>
<circle cx="435.4" cy="112.9" r="11.7" fill="url(#h17)"/>
<circle cx="435.9" cy="118.1" r="11.7" fill="url(#h18)"/>
<circle cx="439.7" cy="131.4" r="13.0" fill="url(#h42)"/>
<circle cx="447.6" cy="138.1" r="13.0" fill="url(#h46)"/>
<circle cx="457.2" cy="138.1" r="13.0" fill="url(#h46)"/>
<circle cx="463.1" cy="139.8" r="13.0" fill="url(#h46)"/>
<circle cx="470.4" cy="137.6" r="11.7" fill="url(#h38)"/>
<circle cx="461.0" cy="126.3" r="13.0" fill="url(#h59)"/>
<circle cx="464.4" cy="129.4" r="13.0" fill="url(#h46)"/>
<circle cx="454.0" cy="126.1" r="11.7" fill="url(#h33)"/>
<circle cx="472.3" cy="110.0" r="13.0" fill="url(#h46)"/>
<circle cx="466.2" cy="109.4" r="11.7" fill="url(#h33)"/>
<circle cx="461.7" cy="117.4" r="11.7" fill="url(#h29)"/>
<circle cx="444.7" cy="117.0" r="11.7" fill="url(#h16)"/>
<circle cx="443.3" cy="121.6" r="10.4" fill="url(#h15)"/>
<circle cx="446.9" cy="125.9" r="10.4" fill="url(#h25)"/>
<circle cx="440.6" cy="106.5" r="10.4" fill="url(#h16)"/>
<circle cx="446.3" cy="104.9" r="10.4" fill="url(#h16)"/>
<circle cx="457.8" cy="106.0" r="10.4" fill="url(#h27)"/>
<circle cx="465.5" cy="117.9" r="10.4" fill="url(#h27)"/>
<circle cx="439.8" cy="116.5" r="10.4" fill="url(#h16)"/>
<circle cx="451.0" cy="102.1" r="10.4" fill="url(#h26)"/>
<circle cx="435.9" cy="138.8" r="10.4" fill="url(#h25)"/>
<circle cx="453.3" cy="143.0" r="10.4" fill="url(#h27)"/>
<circle cx="459.0" cy="96.3" r="14.3" fill="url(#h74)"/>
<circle cx="456.5" cy="95.1" r="11.7" fill="url(#h46)"/>
<circle cx="459.2" cy="94.1" r="11.7" fill="url(#h46)"/>
<circle cx="461.2" cy="86.7" r="14.3" fill="url(#h74)"/>
<circle cx="462.0" cy="88.5" r="13.0" fill="url(#h59)"/>
<circle cx="459.5" cy="89.6" r="13.0" fill="url(#h59)"/>
<circle cx="464.9" cy="90.0" r="13.0" fill="url(#h46)"/>
<circle cx="467.7" cy="81.2" r="11.7" fill="url(#h38)"/>
<circle cx="464.3" cy="96.3" r="13.0" fill="url(#h46)"/>
<circle cx="466.0" cy="103.9" r="11.7" fill="url(#h38)"/>
<circle cx="469.0" cy="95.4" r="14.3" fill="url(#h74)"/>
<circle cx="471.7" cy="89.3" r="13.0" fill="url(#h46)"/>
<circle cx="475.2" cy="101.2" r="14.3" fill="url(#h74)"/>
<circle cx="475.6" cy="104.8" r="14.3" fill="url(#h74)"/>
<circle cx="477.6" cy="109.3" r="14.3" fill="url(#h74)"/>
<circle cx="472.7" cy="113.4" r="13.0" fill="url(#h46)"/>
<circle cx="487.3" cy="112.6" r="14.3" fill="url(#h74)"/>
<circle cx="485.0" cy="104.2" r="13.0" fill="url(#h46)"/>
<circle cx="480.9" cy="102.7" r="13.0" fill="url(#h46)"/>
<circle cx="480.8" cy="92.1" r="13.0" fill="url(#h46)"/>
<circle cx="480.1" cy="86.7" r="13.0" fill="url(#h46)"/>
<circle cx="481.1" cy="79.1" r="13.0" fill="url(#h46)"/>
<circle cx="481.6" cy="73.9" r="11.7" fill="url(#h38)"/>
<circle cx="476.4" cy="82.1" r="11.7" fill="url(#h38)"/>
<circle cx="494.4" cy="85.8" r="14.3" fill="url(#h74)"/>
<circle cx="489.7" cy="92.9" r="13.0" fill="url(#h46)"/>
<circle cx="495.7" cy="95.1" r="13.0" fill="url(#h46)"/>
<circle cx="487.4" cy="95.8" r="13.0" fill="url(#h46)"/>
<circle cx="489.3" cy="75.5" r="10.4" fill="url(#h28)"/>
<circle cx="494.3" cy="75.5" r="10.4" fill="url(#h26)"/>
<circle cx="471.7" cy="116.0" r="13.0" fill="url(#h74)"/>
<circle cx="475.4" cy="117.0" r="14.3" fill="url(#h74)"/>
<circle cx="471.1" cy="119.5" r="13.0" fill="url(#h59)"/>
<circle cx="467.0" cy="122.7" r="14.3" fill="url(#h74)"/>
<circle cx="477.0" cy="124.9" r="11.7" fill="url(#h46)"/>
<circle cx="486.6" cy="117.7" r="13.0" fill="url(#h46)"/>
<circle cx="506.0" cy="112.3" r="13.0" fill="url(#h45)"/>
<circle cx="502.4" cy="118.8" r="11.7" fill="url(#h29)"/>
<circle cx="493.0" cy="114.6" r="11.7" fill="url(#h38)"/>
<circle cx="497.9" cy="111.7" r="11.7" fill="url(#h33)"/>
<circle cx="474.9" cy="107.5" r="13.0" fill="url(#h59)"/>
<circle cx="481.1" cy="111.1" r="11.7" fill="url(#h46)"/>
<circle cx="489.3" cy="107.5" r="11.7" fill="url(#h38)"/>
<circle cx="469.4" cy="106.1" r="11.7" fill="url(#h38)"/>
<circle cx="473.5" cy="87.4" r="11.7" fill="url(#h38)"/>
<circle cx="475.4" cy="88.9" r="11.7" fill="url(#h38)"/>
<circle cx="471.2" cy="92.2" r="13.0" fill="url(#h59)"/>
<circle cx="485.1" cy="95.5" r="11.7" fill="url(#h38)"/>
<circle cx="487.5" cy="88.3" r="11.7" fill="url(#h38)"/>
<circle cx="483.1" cy="87.4" r="11.7" fill="url(#h38)"/>
<circle cx="465.8" cy="96.7" r="11.7" fill="url(#h46)"/>
<circle cx="472.0" cy="130.1" r="13.0" fill="url(#h59)"/>
<circle cx="477.9" cy="127.9" r="14.3" fill="url(#h74)"/>
<circle cx="476.9" cy="133.7" r="12.3" fill="url(#h46)"/>
<circle cx="488.5" cy="128.3" r="13.0" fill="url(#h59)"/>
<circle cx="485.0" cy="128.0" r="13.0" fill="url(#h46)"/>
<circle cx="486.4" cy="133.3" r="13.0" fill="url(#h59)"/>
<circle cx="484.6" cy="132.4" r="11.7" fill="url(#h38)"/>
<circle cx="482.4" cy="131.6" r="11.7" fill="url(#h38)"/>
<circle cx="486.0" cy="137.2" r="13.0" fill="url(#h32)"/>
<circle cx="482.7" cy="137.5" r="12.3" fill="url(#h32)"/>
<circle cx="490.9" cy="147.2" r="12.0" fill="url(#h62)"/>
<circle cx="497.8" cy="152.7" r="13.0" fill="url(#h30)"/>
<circle cx="508.0" cy="151.3" r="11.7" fill="url(#h17)"/>
<circle cx="501.0" cy="169.6" r="11.7" fill="url(#h16)"/>
<circle cx="494.3" cy="166.5" r="11.7" fill="url(#h16)"/>
<circle cx="495.9" cy="126.9" r="11.7" fill="url(#h33)"/>
<circle cx="490.5" cy="140.8" r="11.7" fill="url(#h21)"/>
<circle cx="494.9" cy="138.1" r="10.4" fill="url(#h18)"/>
<circle cx="477.7" cy="161.0" r="10.4" fill="url(#h20)"/>
<circle cx="475.5" cy="153.3" r="10.4" fill="url(#h18)"/>
<circle cx="505.6" cy="160.6" r="10.4" fill="url(#h13)"/>
<circle cx="502.8" cy="166.2" r="10.4" fill="url(#h13)"/>
<circle cx="513.1" cy="155.2" r="10.4" fill="url(#h13)"/>
<circle cx="497.5" cy="144.8" r="10.4" fill="url(#h17)"/>
<circle cx="486.3" cy="139.7" r="10.4" fill="url(#h21)"/>
<circle cx="427.5" cy="154.9" r="14.3" fill="url(#h74)"/>
<circle cx="450.5" cy="149.9" r="14.3" fill="url(#h74)"/>
<circle cx="440.5" cy="159.7" r="13.0" fill="url(#h46)"/>
<circle cx="418.6" cy="170.1" r="12.3" fill="url(#h33)"/>
<circle cx="427.9" cy="171.2" r="12.3" fill="url(#h33)"/>
<circle cx="424.7" cy="173.4" r="11.7" fill="url(#h29)"/>
<circle cx="430.5" cy="140.0" r="11.7" fill="url(#h33)"/>
<circle cx="438.5" cy="148.5" r="11.7" fill="url(#h31)"/>
<circle cx="408.6" cy="142.0" r="11.7" fill="url(#h33)"/>
<circle cx="419.1" cy="139.4" r="11.7" fill="url(#h29)"/>
<circle cx="419.9" cy="152.1" r="11.7" fill="url(#h29)"/>
<circle cx="423.5" cy="148.5" r="11.7" fill="url(#h27)"/>
<circle cx="406.3" cy="163.5" r="13.0" fill="url(#h59)"/>
<circle cx="409.1" cy="156.0" r="11.7" fill="url(#h38)"/>
<circle cx="408.3" cy="151.1" r="13.0" fill="url(#h46)"/>
<circle cx="409.1" cy="149.0" r="10.4" fill="url(#h38)"/>
<circle cx="452.4" cy="159.2" r="11.7" fill="url(#h18)"/>
<circle cx="437.6" cy="167.2" r="11.7" fill="url(#h29)"/>
<circle cx="440.1" cy="165.4" r="11.7" fill="url(#h29)"/>
<circle cx="435.6" cy="142.3" r="11.7" fill="url(#h29)"/>
<circle cx="427.1" cy="138.9" r="10.4" fill="url(#h27)"/>
<circle cx="423.3" cy="167.7" r="10.4" fill="url(#h27)"/>
<circle cx="414.7" cy="162.7" r="10.4" fill="url(#h24)"/>
<circle cx="411.1" cy="171.9" r="10.4" fill="url(#h24)"/>
<circle cx="417.4" cy="174.3" r="10.4" fill="url(#h25)"/>
<circle cx="444.4" cy="148.7" r="10.4" fill="url(#h27)"/>
<circle cx="453.0" cy="146.8" r="10.4" fill="url(#h29)"/>
<circle cx="446.9" cy="151.3" r="10.4" fill="url(#h29)"/>
<circle cx="378.2" cy="212.1" r="11.1" fill="url(#h24)"/>
<circle cx="381.6" cy="213.4" r="10.4" fill="url(#h18)"/>
<circle cx="375.9" cy="192.8" r="10.4" fill="url(#h9)"/>
<circle cx="341.6" cy="168.4" r="11.7" fill="url(#h9)"/>
<circle cx="335.6" cy="163.9" r="10.4" fill="url(#h4)"/>
<circle cx="491.2" cy="64.7" r="13.0" fill="url(#h59)"/>
<circle cx="493.6" cy="64.5" r="11.7" fill="url(#h46)"/>
<circle cx="481.9" cy="61.4" r="12.3" fill="url(#h38)"/>
<circle cx="482.6" cy="66.6" r="11.7" fill="url(#h33)"/>
<circle cx="480.8" cy="55.0" r="10.4" fill="url(#h27)"/>
<circle cx="488.8" cy="50.3" r="11.1" fill="url(#h39)"/>
<circle cx="484.0" cy="33.6" r="12.5" fill="url(#h71)"/>
<circle cx="462.8" cy="29.8" r="13.0" fill="url(#h24)"/>
<circle cx="482.7" cy="4.5" r="11.7" fill="url(#h24)"/>
<circle cx="464.4" cy="40.8" r="11.7" fill="url(#h20)"/>
<circle cx="473.3" cy="47.0" r="10.4" fill="url(#h14)"/>
<circle cx="512.6" cy="38.1" r="12.5" fill="url(#h74)"/>
<circle cx="511.0" cy="34.0" r="12.3" fill="url(#h42)"/>
<circle cx="503.1" cy="45.0" r="11.7" fill="url(#h27)"/>
<circle cx="521.2" cy="1.0" r="11.7" fill="url(#h20)"/>
<circle cx="494.8" cy="37.7" r="10.4" fill="url(#h18)"/>
<circle cx="501.4" cy="38.5" r="10.4" fill="url(#h24)"/>
<circle cx="539.5" cy="31.5" r="12.5" fill="url(#h74)"/>
<circle cx="529.1" cy="29.3" r="11.7" fill="url(#h27)"/>
<circle cx="534.9" cy="20.9" r="11.7" fill="url(#h27)"/>
<circle cx="542.7" cy="14.7" r="11.7" fill="url(#h20)"/>
<circle cx="550.3" cy="9.2" r="10.4" fill="url(#h16)"/>
<circle cx="558.4" cy="11.7" r="10.4" fill="url(#h14)"/>
<circle cx="541.6" cy="-9.7" r="10.4" fill="url(#h14)"/>
<circle cx="546.5" cy="45.3" r="11.7" fill="url(#h27)"/>
<circle cx="538.8" cy="37.2" r="11.7" fill="url(#h27)"/>
<circle cx="536.3" cy="55.7" r="11.7" fill="url(#h24)"/>
<circle cx="540.9" cy="71.5" r="11.7" fill="url(#h17)"/>
<circle cx="535.5" cy="70.0" r="11.7" fill="url(#h17)"/>
<circle cx="524.1" cy="87.6" r="13.0" fill="url(#h26)"/>
<circle cx="520.0" cy="101.2" r="13.0" fill="url(#h29)"/>
<circle cx="508.2" cy="86.5" r="11.7" fill="url(#h22)"/>
<circle cx="508.6" cy="94.7" r="11.7" fill="url(#h24)"/>
<circle cx="514.9" cy="73.7" r="11.1" fill="url(#h24)"/>
<circle cx="518.1" cy="90.6" r="11.7" fill="url(#h20)"/>
<circle cx="514.7" cy="82.5" r="10.4" fill="url(#h18)"/>
<circle cx="530.3" cy="93.8" r="10.4" fill="url(#h18)"/>
<circle cx="516.4" cy="99.9" r="11.7" fill="url(#h22)"/>
<circle cx="498.9" cy="79.9" r="10.4" fill="url(#h18)"/>
<circle cx="532.6" cy="81.8" r="10.4" fill="url(#h14)"/>
<circle cx="498.4" cy="101.0" r="13.0" fill="url(#h59)"/>
<circle cx="506.9" cy="106.3" r="12.3" fill="url(#h29)"/>
<circle cx="509.5" cy="103.9" r="11.7" fill="url(#h26)"/>
<circle cx="513.5" cy="102.5" r="11.7" fill="url(#h22)"/>
<circle cx="503.9" cy="100.2" r="10.4" fill="url(#h22)"/>
<circle cx="494.3" cy="103.0" r="10.4" fill="url(#h29)"/>
<circle cx="498.6" cy="107.7" r="10.4" fill="url(#h29)"/>
<circle cx="508.9" cy="112.6" r="12.3" fill="url(#h29)"/>
<circle cx="525.2" cy="109.2" r="11.7" fill="url(#h20)"/>
<circle cx="516.5" cy="116.3" r="13.0" fill="url(#h35)"/>
<circle cx="520.8" cy="123.5" r="11.7" fill="url(#h22)"/>
<circle cx="526.6" cy="116.2" r="11.7" fill="url(#h22)"/>
<circle cx="513.3" cy="124.5" r="11.7" fill="url(#h20)"/>
<circle cx="498.7" cy="124.6" r="12.3" fill="url(#h29)"/>
<circle cx="503.2" cy="121.8" r="10.4" fill="url(#h22)"/>
<circle cx="504.5" cy="126.0" r="12.3" fill="url(#h29)"/>
<circle cx="506.3" cy="138.6" r="11.7" fill="url(#h14)"/>
<circle cx="498.5" cy="128.7" r="10.4" fill="url(#h27)"/>
<circle cx="514.0" cy="136.7" r="11.7" fill="url(#h13)"/>
<circle cx="522.0" cy="131.6" r="12.3" fill="url(#h26)"/>
<circle cx="519.6" cy="129.1" r="11.7" fill="url(#h22)"/>
<circle cx="527.7" cy="139.7" r="10.4" fill="url(#h18)"/>
<circle cx="525.8" cy="146.7" r="10.4" fill="url(#h18)"/>
<circle cx="519.5" cy="150.2" r="10.4" fill="url(#h18)"/>
<circle cx="517.3" cy="144.3" r="10.4" fill="url(#h11)"/>
<circle cx="533.2" cy="143.0" r="12.3" fill="url(#h24)"/>
<circle cx="538.8" cy="145.9" r="10.4" fill="url(#h18)"/>
<circle cx="551.2" cy="140.2" r="10.4" fill="url(#h17)"/>
<circle cx="544.1" cy="133.6" r="13.0" fill="url(#h26)"/>
<circle cx="534.3" cy="120.5" r="11.7" fill="url(#h22)"/>
<circle cx="549.9" cy="118.3" r="11.7" fill="url(#h19)"/>
<circle cx="525.0" cy="126.3" r="11.7" fill="url(#h20)"/>
<circle cx="554.9" cy="119.2" r="10.4" fill="url(#h12)"/>
<circle cx="542.1" cy="126.9" r="10.4" fill="url(#h17)"/>
<circle cx="534.8" cy="167.2" r="13.0" fill="url(#h59)"/>
<circle cx="531.7" cy="153.8" r="12.3" fill="url(#h33)"/>
<circle cx="527.0" cy="165.9" r="11.7" fill="url(#h28)"/>
<circle cx="540.3" cy="180.1" r="11.7" fill="url(#h25)"/>
<circle cx="523.5" cy="158.7" r="10.4" fill="url(#h26)"/>
<circle cx="529.7" cy="158.9" r="10.4" fill="url(#h26)"/>
<circle cx="543.2" cy="152.7" r="10.4" fill="url(#h18)"/>
<circle cx="545.8" cy="161.6" r="10.4" fill="url(#h14)"/>
<circle cx="555.3" cy="151.8" r="13.1" fill="url(#h82)"/>
<circle cx="570.5" cy="157.4" r="10.6" fill="url(#h81)"/>
<circle cx="548.1" cy="165.0" r="11.7" fill="url(#h29)"/>
<circle cx="562.1" cy="172.5" r="10.4" fill="url(#h24)"/>
<circle cx="580.1" cy="172.0" r="10.4" fill="url(#h24)"/>
<circle cx="569.1" cy="167.8" r="10.4" fill="url(#h24)"/>
<circle cx="580.8" cy="163.5" r="10.4" fill="url(#h24)"/>
<circle cx="597.3" cy="151.9" r="10.4" fill="url(#h14)"/>
<circle cx="603.4" cy="157.5" r="10.4" fill="url(#h14)"/>
<circle cx="555.7" cy="156.1" r="10.4" fill="url(#h27)"/>
<circle cx="561.4" cy="158.2" r="10.4" fill="url(#h27)"/>
<circle cx="584.1" cy="150.4" r="10.4" fill="url(#h18)"/>
<circle cx="588.2" cy="171.7" r="10.4" fill="url(#h18)"/>
<circle cx="599.3" cy="167.6" r="10.4" fill="url(#h14)"/>
<circle cx="572.5" cy="180.9" r="10.4" fill="url(#h27)"/>
<circle cx="561.4" cy="98.8" r="11.1" fill="url(#h25)"/>
<circle cx="536.0" cy="102.5" r="10.4" fill="url(#h12)"/>
<circle cx="583.7" cy="101.6" r="11.7" fill="url(#h11)"/>
<circle cx="562.1" cy="122.2" r="10.4" fill="url(#h12)"/>
<circle cx="579.1" cy="110.7" r="10.4" fill="url(#h8)"/>
<circle cx="549.8" cy="76.7" r="11.7" fill="url(#h11)"/>
<circle cx="589.1" cy="64.2" r="13.1" fill="url(#h83)"/>
<circle cx="560.5" cy="33.3" r="12.3" fill="url(#h25)"/>
<circle cx="614.1" cy="60.1" r="12.0" fill="url(#h35)"/>
<circle cx="634.0" cy="63.8" r="11.7" fill="url(#h14)"/>
<circle cx="636.3" cy="43.6" r="11.7" fill="url(#h9)"/>
<circle cx="679.0" cy="56.5" r="13.0" fill="url(#h11)"/>
<circle cx="622.0" cy="92.1" r="11.7" fill="url(#h9)"/>
<circle cx="657.5" cy="90.5" r="11.7" fill="url(#h9)"/>
<circle cx="597.3" cy="117.9" r="11.7" fill="url(#h9)"/>
<circle cx="595.3" cy="91.2" r="10.4" fill="url(#h9)"/>
<circle cx="662.0" cy="48.1" r="10.4" fill="url(#h7)"/>
<circle cx="682.1" cy="68.3" r="10.4" fill="url(#h7)"/>
<circle cx="729.0" cy="69.4" r="10.4" fill="url(#h4)"/>
<circle cx="766.3" cy="69.1" r="11.0" fill="url(#h57)"/>
<circle cx="774.2" cy="58.9" r="11.7" fill="url(#h12)"/>
<circle cx="769.7" cy="80.4" r="11.7" fill="url(#h11)"/>
<circle cx="805.2" cy="62.4" r="12.3" fill="url(#h16)"/>
<circle cx="721.4" cy="94.3" r="11.7" fill="url(#h14)"/>
<circle cx="742.8" cy="140.0" r="11.7" fill="url(#h16)"/>
<circle cx="733.8" cy="142.1" r="10.4" fill="url(#h16)"/>
<circle cx="784.6" cy="137.1" r="11.7" fill="url(#h11)"/>
<circle cx="860.1" cy="114.0" r="11.7" fill="url(#h9)"/>
<circle cx="937.3" cy="126.3" r="12.0" fill="url(#h43)"/>
<circle cx="712.8" cy="150.3" r="11.1" fill="url(#h20)"/>
<circle cx="703.9" cy="158.8" r="10.4" fill="url(#h9)"/>
<circle cx="711.0" cy="164.3" r="10.4" fill="url(#h9)"/>
<circle cx="932.1" cy="136.6" r="11.0" fill="url(#h21)"/>
<circle cx="957.9" cy="140.8" r="10.4" fill="url(#h9)"/>
<circle cx="727.9" cy="102.7" r="10.4" fill="url(#h4)"/>
<circle cx="564.2" cy="204.7" r="11.9" fill="url(#h82)"/>
<circle cx="559.0" cy="199.5" r="11.7" fill="url(#h27)"/>
<circle cx="564.7" cy="200.2" r="10.4" fill="url(#h27)"/>
<circle cx="570.7" cy="230.9" r="10.4" fill="url(#h7)"/>
<circle cx="563.9" cy="217.5" r="10.4" fill="url(#h14)"/>
<circle cx="578.0" cy="195.4" r="11.7" fill="url(#h38)"/>
<circle cx="579.7" cy="196.8" r="11.7" fill="url(#h38)"/>
<circle cx="578.8" cy="192.1" r="10.4" fill="url(#h29)"/>
<circle cx="578.1" cy="199.2" r="10.4" fill="url(#h25)"/>
<circle cx="580.8" cy="187.0" r="11.7" fill="url(#h27)"/>
<circle cx="584.0" cy="188.8" r="10.4" fill="url(#h16)"/>
<circle cx="582.5" cy="196.0" r="11.7" fill="url(#h25)"/>
<circle cx="587.3" cy="175.9" r="10.4" fill="url(#h9)"/>
<circle cx="615.7" cy="189.6" r="11.7" fill="url(#h17)"/>
<circle cx="614.1" cy="176.0" r="10.4" fill="url(#h12)"/>
<circle cx="629.0" cy="202.6" r="10.4" fill="url(#h12)"/>
<circle cx="610.7" cy="175.3" r="10.4" fill="url(#h12)"/>
<circle cx="619.7" cy="179.0" r="10.4" fill="url(#h12)"/>
<circle cx="629.7" cy="207.7" r="10.4" fill="url(#h18)"/>
<circle cx="643.0" cy="178.3" r="12.5" fill="url(#h63)"/>
<circle cx="644.1" cy="192.8" r="12.3" fill="url(#h20)"/>
<circle cx="647.5" cy="206.7" r="12.3" fill="url(#h19)"/>
<circle cx="623.0" cy="166.7" r="12.3" fill="url(#h19)"/>
<circle cx="675.1" cy="175.4" r="12.0" fill="url(#h15)"/>
<circle cx="632.4" cy="198.9" r="11.7" fill="url(#h15)"/>
<circle cx="665.2" cy="203.6" r="11.7" fill="url(#h12)"/>
<circle cx="635.9" cy="170.7" r="11.0" fill="url(#h15)"/>
<circle cx="654.6" cy="196.2" r="11.7" fill="url(#h15)"/>
<circle cx="626.1" cy="185.0" r="11.7" fill="url(#h17)"/>
<circle cx="631.8" cy="182.7" r="11.7" fill="url(#h15)"/>
<circle cx="641.0" cy="183.4" r="11.7" fill="url(#h19)"/>
<circle cx="649.5" cy="174.1" r="11.7" fill="url(#h17)"/>
<circle cx="636.4" cy="186.0" r="10.4" fill="url(#h15)"/>
<circle cx="662.1" cy="217.4" r="10.4" fill="url(#h8)"/>
<circle cx="680.0" cy="207.2" r="10.4" fill="url(#h4)"/>
<circle cx="618.3" cy="169.3" r="10.4" fill="url(#h12)"/>
<circle cx="631.7" cy="173.6" r="10.4" fill="url(#h15)"/>
<circle cx="654.9" cy="172.8" r="10.4" fill="url(#h12)"/>
<circle cx="624.7" cy="228.3" r="12.3" fill="url(#h24)"/>
<circle cx="595.2" cy="241.9" r="11.7" fill="url(#h24)"/>
<circle cx="597.8" cy="242.2" r="10.4" fill="url(#h18)"/>
<circle cx="637.9" cy="220.9" r="11.7" fill="url(#h18)"/>
<circle cx="596.9" cy="229.2" r="10.4" fill="url(#h12)"/>
<circle cx="608.2" cy="255.5" r="11.7" fill="url(#h9)"/>
<circle cx="643.5" cy="225.7" r="11.1" fill="url(#h19)"/>
<circle cx="639.8" cy="221.7" r="10.4" fill="url(#h15)"/>
<circle cx="654.6" cy="229.2" r="11.7" fill="url(#h26)"/>
<circle cx="658.3" cy="225.9" r="11.7" fill="url(#h20)"/>
<circle cx="660.0" cy="230.4" r="10.4" fill="url(#h18)"/>
<circle cx="670.4" cy="233.0" r="11.7" fill="url(#h16)"/>
<circle cx="614.9" cy="267.2" r="11.7" fill="url(#h8)"/>
<circle cx="637.0" cy="155.0" r="10.0" fill="url(#h16)"/>
<circle cx="617.2" cy="148.2" r="11.1" fill="url(#h20)"/>
<circle cx="616.0" cy="156.1" r="11.1" fill="url(#h20)"/>
<circle cx="585.0" cy="212.2" r="10.4" fill="url(#h7)"/>
<circle cx="614.0" cy="221.2" r="10.4" fill="url(#h7)"/>
<circle cx="605.1" cy="216.0" r="10.4" fill="url(#h4)"/>
<circle cx="743.9" cy="211.2" r="13.0" fill="url(#h76)"/>
<circle cx="743.2" cy="205.4" r="11.0" fill="url(#h16)"/>
<circle cx="742.3" cy="201.6" r="11.0" fill="url(#h39)"/>
<circle cx="734.8" cy="197.5" r="11.0" fill="url(#h16)"/>
<circle cx="732.8" cy="198.0" r="11.5" fill="url(#h44)"/>
<circle cx="727.7" cy="188.0" r="11.5" fill="url(#h38)"/>
<circle cx="721.8" cy="186.5" r="11.7" fill="url(#h17)"/>
<circle cx="704.0" cy="227.6" r="11.7" fill="url(#h25)"/>
<circle cx="727.8" cy="198.4" r="11.7" fill="url(#h17)"/>
<circle cx="721.5" cy="204.0" r="11.7" fill="url(#h15)"/>
<circle cx="709.4" cy="225.2" r="10.4" fill="url(#h9)"/>
<circle cx="704.0" cy="204.0" r="10.4" fill="url(#h9)"/>
<circle cx="712.6" cy="183.9" r="10.4" fill="url(#h4)"/>
<circle cx="725.9" cy="235.4" r="9.0" fill="url(#h59)"/>
<circle cx="727.0" cy="252.0" r="12.0" fill="url(#h50)"/>
<circle cx="730.8" cy="254.3" r="11.0" fill="url(#h32)"/>
<circle cx="745.5" cy="276.8" r="12.0" fill="url(#h74)"/>
<circle cx="755.9" cy="276.4" r="12.0" fill="url(#h32)"/>
<circle cx="748.9" cy="259.0" r="12.0" fill="url(#h29)"/>
<circle cx="743.0" cy="284.7" r="11.7" fill="url(#h17)"/>
<circle cx="747.5" cy="289.0" r="11.7" fill="url(#h15)"/>
<circle cx="740.3" cy="288.8" r="11.7" fill="url(#h15)"/>
<circle cx="743.0" cy="294.6" r="11.7" fill="url(#h15)"/>
<circle cx="751.5" cy="277.0" r="11.0" fill="url(#h18)"/>
<circle cx="749.8" cy="285.5" r="11.7" fill="url(#h17)"/>
<circle cx="734.7" cy="277.2" r="11.1" fill="url(#h15)"/>
<circle cx="734.5" cy="275.3" r="10.4" fill="url(#h17)"/>
<circle cx="730.8" cy="266.6" r="10.4" fill="url(#h12)"/>
<circle cx="738.4" cy="218.6" r="11.7" fill="url(#h17)"/>
<circle cx="758.6" cy="218.9" r="11.0" fill="url(#h15)"/>
<circle cx="766.5" cy="225.6" r="11.0" fill="url(#h16)"/>
<circle cx="775.0" cy="224.4" r="11.7" fill="url(#h14)"/>
<circle cx="756.2" cy="220.7" r="11.0" fill="url(#h15)"/>
<circle cx="747.1" cy="217.5" r="10.0" fill="url(#h16)"/>
<circle cx="747.2" cy="203.5" r="11.0" fill="url(#h16)"/>
<circle cx="746.7" cy="205.5" r="10.0" fill="url(#h16)"/>
<circle cx="738.7" cy="236.7" r="11.7" fill="url(#h14)"/>
<circle cx="744.8" cy="234.4" r="11.7" fill="url(#h14)"/>
<circle cx="751.3" cy="243.3" r="11.7" fill="url(#h13)"/>
<circle cx="761.3" cy="242.9" r="11.7" fill="url(#h11)"/>
<circle cx="767.5" cy="257.7" r="11.7" fill="url(#h12)"/>
<circle cx="777.7" cy="246.9" r="11.7" fill="url(#h14)"/>
<circle cx="779.1" cy="236.4" r="10.4" fill="url(#h13)"/>
<circle cx="775.7" cy="234.0" r="10.4" fill="url(#h12)"/>
<circle cx="787.6" cy="237.4" r="12.5" fill="url(#h50)"/>
<circle cx="783.5" cy="238.4" r="10.4" fill="url(#h17)"/>
<circle cx="800.8" cy="222.0" r="11.7" fill="url(#h14)"/>
<circle cx="801.4" cy="224.5" r="10.4" fill="url(#h12)"/>
<circle cx="813.2" cy="216.2" r="10.4" fill="url(#h14)"/>
<circle cx="805.5" cy="227.7" r="10.4" fill="url(#h9)"/>
<circle cx="795.6" cy="232.1" r="11.7" fill="url(#h16)"/>
<circle cx="801.2" cy="238.2" r="10.4" fill="url(#h11)"/>
<circle cx="775.7" cy="215.2" r="11.7" fill="url(#h14)"/>
<circle cx="754.3" cy="300.8" r="11.7" fill="url(#h16)"/>
<circle cx="757.2" cy="299.4" r="10.4" fill="url(#h9)"/>
<circle cx="734.6" cy="186.1" r="11.1" fill="url(#h14)"/>
<circle cx="740.4" cy="194.9" r="10.4" fill="url(#h15)"/>
<circle cx="743.8" cy="199.9" r="10.4" fill="url(#h15)"/>
<circle cx="727.5" cy="221.4" r="10.4" fill="url(#h11)"/>
<circle cx="718.9" cy="238.5" r="10.4" fill="url(#h9)"/>
<circle cx="726.8" cy="243.3" r="10.4" fill="url(#h15)"/>
<circle cx="728.2" cy="238.5" r="10.4" fill="url(#h16)"/>
<circle cx="741.7" cy="279.5" r="10.4" fill="url(#h17)"/>
<circle cx="735.8" cy="267.2" r="10.4" fill="url(#h12)"/>
<circle cx="757.4" cy="262.6" r="10.4" fill="url(#h12)"/>
<circle cx="753.1" cy="256.4" r="10.4" fill="url(#h14)"/>
<circle cx="897.3" cy="157.5" r="16.2" fill="url(#h74)"/>
<circle cx="900.4" cy="161.6" r="12.3" fill="url(#h38)"/>
<circle cx="924.7" cy="147.7" r="12.0" fill="url(#h49)"/>
<circle cx="917.6" cy="162.6" r="11.7" fill="url(#h31)"/>
<circle cx="899.6" cy="173.7" r="12.3" fill="url(#h33)"/>
<circle cx="912.8" cy="176.6" r="11.7" fill="url(#h31)"/>
<circle cx="886.5" cy="182.9" r="12.0" fill="url(#h62)"/>
<circle cx="868.1" cy="185.2" r="12.0" fill="url(#h75)"/>
<circle cx="848.1" cy="176.6" r="11.7" fill="url(#h18)"/>
<circle cx="882.2" cy="167.8" r="11.7" fill="url(#h24)"/>
<circle cx="889.8" cy="166.9" r="11.7" fill="url(#h25)"/>
<circle cx="857.5" cy="164.7" r="11.7" fill="url(#h9)"/>
<circle cx="878.9" cy="152.8" r="11.7" fill="url(#h9)"/>
<circle cx="840.1" cy="173.9" r="10.4" fill="url(#h7)"/>
<circle cx="917.1" cy="199.3" r="15.6" fill="url(#h74)"/>
<circle cx="906.6" cy="195.5" r="14.3" fill="url(#h74)"/>
<circle cx="911.9" cy="203.7" r="14.3" fill="url(#h74)"/>
<circle cx="913.7" cy="199.0" r="13.0" fill="url(#h59)"/>
<circle cx="900.7" cy="196.4" r="13.0" fill="url(#h42)"/>
<circle cx="911.2" cy="196.7" r="13.0" fill="url(#h46)"/>
<circle cx="917.4" cy="205.5" r="11.7" fill="url(#h38)"/>
<circle cx="914.1" cy="213.9" r="11.7" fill="url(#h29)"/>
<circle cx="908.6" cy="222.3" r="11.7" fill="url(#h31)"/>
<circle cx="903.9" cy="229.2" r="12.3" fill="url(#h33)"/>
<circle cx="895.1" cy="210.8" r="12.3" fill="url(#h29)"/>
<circle cx="889.0" cy="202.2" r="14.3" fill="url(#h74)"/>
<circle cx="883.7" cy="212.8" r="12.3" fill="url(#h46)"/>
<circle cx="849.0" cy="201.9" r="11.5" fill="url(#h62)"/>
<circle cx="858.7" cy="206.9" r="10.5" fill="url(#h59)"/>
<circle cx="885.0" cy="235.0" r="14.3" fill="url(#h74)"/>
<circle cx="888.1" cy="237.5" r="13.7" fill="url(#h74)"/>
<circle cx="888.5" cy="238.5" r="13.0" fill="url(#h59)"/>
<circle cx="886.1" cy="238.9" r="11.7" fill="url(#h38)"/>
<circle cx="865.7" cy="236.3" r="11.7" fill="url(#h24)"/>
<circle cx="873.4" cy="225.8" r="11.7" fill="url(#h18)"/>
<circle cx="859.3" cy="220.0" r="11.7" fill="url(#h24)"/>
<circle cx="843.7" cy="226.8" r="11.7" fill="url(#h25)"/>
<circle cx="873.6" cy="248.1" r="10.4" fill="url(#h16)"/>
<circle cx="870.3" cy="255.4" r="10.4" fill="url(#h12)"/>
<circle cx="898.4" cy="234.0" r="11.7" fill="url(#h29)"/>
<circle cx="884.0" cy="223.5" r="10.4" fill="url(#h14)"/>
<circle cx="877.3" cy="201.7" r="10.4" fill="url(#h18)"/>
<circle cx="880.6" cy="195.8" r="10.4" fill="url(#h18)"/>
<circle cx="906.6" cy="185.0" r="11.7" fill="url(#h25)"/>
<circle cx="900.3" cy="185.2" r="11.7" fill="url(#h29)"/>
<circle cx="909.1" cy="193.9" r="11.7" fill="url(#h38)"/>
<circle cx="914.9" cy="195.8" r="11.7" fill="url(#h38)"/>
<circle cx="870.3" cy="174.0" r="10.4" fill="url(#h9)"/>
<circle cx="917.3" cy="226.7" r="13.0" fill="url(#h59)"/>
<circle cx="914.0" cy="230.6" r="11.7" fill="url(#h38)"/>
<circle cx="912.5" cy="237.1" r="11.7" fill="url(#h38)"/>
<circle cx="915.1" cy="227.8" r="11.7" fill="url(#h46)"/>
<circle cx="912.1" cy="235.5" r="11.7" fill="url(#h38)"/>
<circle cx="938.6" cy="169.2" r="14.3" fill="url(#h59)"/>
<circle cx="940.2" cy="175.2" r="12.0" fill="url(#h32)"/>
<circle cx="945.0" cy="177.5" r="11.0" fill="url(#h26)"/>
<circle cx="946.8" cy="180.8" r="11.0" fill="url(#h32)"/>
<circle cx="938.1" cy="180.9" r="11.0" fill="url(#h26)"/>
<circle cx="948.0" cy="176.8" r="10.0" fill="url(#h19)"/>
<circle cx="939.3" cy="177.8" r="10.0" fill="url(#h23)"/>
<circle cx="946.1" cy="168.3" r="10.4" fill="url(#h14)"/>
<circle cx="936.9" cy="188.8" r="10.4" fill="url(#h12)"/>
<circle cx="941.6" cy="167.7" r="10.4" fill="url(#h24)"/>
<circle cx="952.0" cy="188.3" r="11.7" fill="url(#h11)"/>
<circle cx="953.2" cy="192.1" r="11.7" fill="url(#h9)"/>
<circle cx="956.7" cy="190.0" r="11.7" fill="url(#h7)"/>
<circle cx="952.6" cy="197.6" r="11.7" fill="url(#h7)"/>
<circle cx="949.9" cy="192.3" r="11.7" fill="url(#h9)"/>
<circle cx="960.0" cy="184.6" r="11.7" fill="url(#h10)"/>
<circle cx="956.2" cy="185.6" r="11.7" fill="url(#h9)"/>
<circle cx="941.4" cy="221.7" r="13.0" fill="url(#h11)"/>
<circle cx="933.8" cy="162.0" r="10.4" fill="url(#h4)"/>
<circle cx="856.0" cy="243.8" r="12.0" fill="url(#h56)"/>
<circle cx="859.3" cy="244.5" r="10.4" fill="url(#h24)"/>
<circle cx="862.8" cy="262.7" r="11.7" fill="url(#h14)"/>
<circle cx="865.3" cy="264.3" r="11.7" fill="url(#h16)"/>
<circle cx="859.2" cy="285.6" r="11.0" fill="url(#h59)"/>
<circle cx="855.7" cy="288.6" r="10.4" fill="url(#h14)"/>
<circle cx="869.1" cy="279.7" r="10.4" fill="url(#h9)"/>
<circle cx="835.1" cy="273.7" r="12.3" fill="url(#h31)"/>
<circle cx="829.1" cy="253.2" r="11.7" fill="url(#h24)"/>
<circle cx="844.2" cy="262.8" r="11.7" fill="url(#h18)"/>
<circle cx="834.9" cy="300.6" r="11.7" fill="url(#h18)"/>
<circle cx="833.5" cy="272.7" r="10.4" fill="url(#h24)"/>
<circle cx="843.3" cy="256.5" r="10.4" fill="url(#h9)"/>
<circle cx="852.4" cy="282.5" r="11.7" fill="url(#h16)"/>
<circle cx="818.1" cy="261.3" r="11.7" fill="url(#h14)"/>
<circle cx="817.8" cy="239.9" r="11.7" fill="url(#h9)"/>
<circle cx="839.7" cy="315.7" r="12.3" fill="url(#h46)"/>
<circle cx="834.4" cy="306.8" r="11.7" fill="url(#h25)"/>
<circle cx="847.8" cy="322.1" r="11.1" fill="url(#h26)"/>
<circle cx="848.1" cy="322.7" r="10.4" fill="url(#h38)"/>
<circle cx="838.6" cy="316.5" r="11.7" fill="url(#h38)"/>
<circle cx="845.2" cy="307.2" r="10.4" fill="url(#h18)"/>
<circle cx="841.9" cy="319.4" r="10.4" fill="url(#h25)"/>
<circle cx="837.4" cy="310.0" r="10.4" fill="url(#h24)"/>
<circle cx="873.6" cy="321.9" r="11.7" fill="url(#h16)"/>
<circle cx="896.0" cy="304.6" r="11.7" fill="url(#h14)"/>
<circle cx="891.5" cy="308.8" r="10.4" fill="url(#h14)"/>
<circle cx="884.1" cy="315.6" r="10.4" fill="url(#h9)"/>
<circle cx="859.9" cy="352.3" r="12.3" fill="url(#h36)"/>
<circle cx="862.8" cy="355.1" r="11.7" fill="url(#h31)"/>
<circle cx="859.7" cy="353.9" r="11.7" fill="url(#h33)"/>
<circle cx="873.8" cy="358.6" r="12.3" fill="url(#h31)"/>
<circle cx="873.9" cy="355.4" r="11.7" fill="url(#h27)"/>
<circle cx="883.0" cy="356.4" r="12.3" fill="url(#h27)"/>
<circle cx="882.5" cy="359.3" r="11.7" fill="url(#h26)"/>
<circle cx="892.6" cy="362.0" r="10.4" fill="url(#h14)"/>
<circle cx="827.9" cy="313.9" r="11.7" fill="url(#h14)"/>
<circle cx="834.5" cy="331.7" r="11.7" fill="url(#h11)"/>
<circle cx="851.7" cy="339.7" r="11.7" fill="url(#h11)"/>
<circle cx="814.8" cy="306.3" r="10.4" fill="url(#h9)"/>
<circle cx="838.8" cy="326.0" r="10.4" fill="url(#h9)"/>
<circle cx="853.7" cy="349.3" r="10.4" fill="url(#h16)"/>
<circle cx="890.2" cy="341.0" r="11.7" fill="url(#h14)"/>
<circle cx="909.1" cy="348.1" r="11.7" fill="url(#h14)"/>
<circle cx="900.2" cy="330.0" r="10.4" fill="url(#h8)"/>
<circle cx="930.3" cy="322.2" r="10.4" fill="url(#h4)"/>
<circle cx="915.2" cy="270.3" r="11.7" fill="url(#h24)"/>
<circle cx="916.2" cy="272.0" r="10.4" fill="url(#h20)"/>
<circle cx="926.6" cy="287.5" r="11.7" fill="url(#h18)"/>
<circle cx="921.3" cy="285.9" r="11.7" fill="url(#h16)"/>
<circle cx="933.2" cy="300.3" r="11.7" fill="url(#h14)"/>
<circle cx="929.5" cy="294.7" r="10.4" fill="url(#h12)"/>
<circle cx="913.7" cy="263.0" r="10.4" fill="url(#h12)"/>
<circle cx="953.8" cy="377.1" r="11.7" fill="url(#h14)"/>
<circle cx="658.9" cy="346.1" r="10.4" fill="url(#h14)"/>
<circle cx="454.0" cy="173.3" r="11.7" fill="url(#h26)"/>
<circle cx="439.5" cy="178.3" r="11.7" fill="url(#h16)"/>
<circle cx="467.9" cy="175.2" r="11.7" fill="url(#h16)"/>
<circle cx="472.3" cy="172.5" r="10.4" fill="url(#h14)"/>
<circle cx="461.8" cy="173.3" r="10.4" fill="url(#h14)"/>
<circle cx="436.8" cy="182.3" r="10.4" fill="url(#h14)"/>
<circle cx="481.8" cy="173.0" r="11.7" fill="url(#h16)"/>
<circle cx="484.1" cy="182.9" r="11.7" fill="url(#h20)"/>
<circle cx="483.5" cy="177.7" r="10.4" fill="url(#h24)"/>
<circle cx="493.6" cy="191.7" r="11.7" fill="url(#h9)"/>
<circle cx="520.5" cy="195.2" r="10.4" fill="url(#h4)"/>
<circle cx="415.2" cy="186.4" r="11.7" fill="url(#h24)"/>
<circle cx="412.3" cy="188.5" r="11.7" fill="url(#h20)"/>
<circle cx="410.7" cy="197.5" r="11.7" fill="url(#h16)"/>
<circle cx="422.4" cy="186.3" r="11.7" fill="url(#h18)"/>
<circle cx="419.3" cy="178.0" r="10.4" fill="url(#h18)"/>
<circle cx="404.5" cy="203.0" r="10.4" fill="url(#h12)"/>
<circle cx="434.6" cy="183.2" r="10.4" fill="url(#h12)"/>
<circle cx="373.8" cy="269.9" r="11.7" fill="url(#h14)"/>
<circle cx="388.4" cy="290.7" r="10.4" fill="url(#h7)"/>
<circle cx="390.3" cy="294.8" r="10.4" fill="url(#h9)"/>
<circle cx="399.8" cy="303.3" r="10.4" fill="url(#h4)"/>
<circle cx="410.7" cy="278.2" r="10.4" fill="url(#h4)"/>
<circle cx="436.1" cy="279.2" r="11.7" fill="url(#h9)"/>
<circle cx="450.3" cy="274.7" r="10.4" fill="url(#h4)"/>
<circle cx="426.3" cy="307.0" r="11.7" fill="url(#h20)"/>
<circle cx="421.3" cy="301.3" r="10.4" fill="url(#h14)"/>
<circle cx="441.2" cy="306.1" r="11.7" fill="url(#h24)"/>
<circle cx="435.7" cy="301.8" r="11.7" fill="url(#h24)"/>
<circle cx="437.1" cy="308.0" r="10.4" fill="url(#h16)"/>
<circle cx="446.8" cy="304.0" r="10.4" fill="url(#h14)"/>
<circle cx="451.5" cy="303.0" r="11.1" fill="url(#h20)"/>
<circle cx="455.3" cy="302.4" r="11.7" fill="url(#h20)"/>
<circle cx="457.3" cy="299.1" r="11.7" fill="url(#h18)"/>
<circle cx="459.8" cy="294.6" r="10.4" fill="url(#h16)"/>
<circle cx="471.3" cy="292.4" r="11.7" fill="url(#h16)"/>
<circle cx="471.1" cy="286.6" r="11.7" fill="url(#h14)"/>
<circle cx="475.3" cy="280.7" r="11.7" fill="url(#h12)"/>
<circle cx="471.3" cy="302.7" r="11.7" fill="url(#h18)"/>
<circle cx="469.4" cy="309.2" r="11.7" fill="url(#h18)"/>
<circle cx="464.0" cy="303.2" r="10.4" fill="url(#h16)"/>
<circle cx="468.6" cy="303.7" r="10.4" fill="url(#h14)"/>
<circle cx="474.6" cy="308.6" r="10.4" fill="url(#h14)"/>
<circle cx="493.4" cy="281.3" r="10.4" fill="url(#h4)"/>
<circle cx="487.0" cy="312.9" r="11.7" fill="url(#h16)"/>
<circle cx="479.9" cy="312.1" r="11.1" fill="url(#h18)"/>
<circle cx="482.8" cy="306.6" r="10.4" fill="url(#h12)"/>
<circle cx="478.4" cy="311.8" r="10.4" fill="url(#h14)"/>
<circle cx="479.0" cy="326.4" r="10.4" fill="url(#h7)"/>
<circle cx="569.3" cy="266.4" r="11.7" fill="url(#h14)"/>
<circle cx="573.0" cy="271.1" r="10.4" fill="url(#h7)"/>
<circle cx="593.6" cy="292.6" r="12.3" fill="url(#h24)"/>
<circle cx="588.5" cy="278.3" r="11.7" fill="url(#h16)"/>
<circle cx="586.0" cy="297.9" r="11.7" fill="url(#h16)"/>
<circle cx="596.4" cy="274.7" r="11.7" fill="url(#h16)"/>
<circle cx="588.2" cy="282.3" r="10.4" fill="url(#h14)"/>
<circle cx="592.5" cy="300.4" r="10.4" fill="url(#h14)"/>
<circle cx="606.3" cy="291.5" r="10.4" fill="url(#h9)"/>
<circle cx="619.3" cy="320.0" r="11.7" fill="url(#h14)"/>
<circle cx="610.8" cy="282.4" r="10.4" fill="url(#h4)"/>
<circle cx="586.0" cy="333.0" r="12.3" fill="url(#h31)"/>
<circle cx="579.9" cy="326.0" r="11.7" fill="url(#h24)"/>
<circle cx="577.9" cy="328.4" r="11.7" fill="url(#h24)"/>
<circle cx="597.2" cy="343.9" r="11.1" fill="url(#h16)"/>
<circle cx="583.1" cy="329.2" r="10.4" fill="url(#h24)"/>
<circle cx="569.4" cy="326.7" r="12.3" fill="url(#h25)"/>
<circle cx="561.9" cy="330.3" r="11.1" fill="url(#h16)"/>
<circle cx="568.3" cy="317.2" r="10.4" fill="url(#h12)"/>
<circle cx="559.6" cy="335.6" r="11.7" fill="url(#h20)"/>
<circle cx="558.3" cy="338.2" r="10.4" fill="url(#h14)"/>
<circle cx="556.8" cy="341.2" r="10.4" fill="url(#h12)"/>
<circle cx="595.6" cy="354.7" r="11.7" fill="url(#h24)"/>
<circle cx="585.5" cy="341.2" r="11.7" fill="url(#h20)"/>
<circle cx="588.0" cy="341.1" r="10.4" fill="url(#h18)"/>
<circle cx="570.7" cy="337.9" r="11.1" fill="url(#h14)"/>
<circle cx="589.3" cy="354.7" r="10.4" fill="url(#h14)"/>
<circle cx="581.8" cy="352.2" r="10.4" fill="url(#h12)"/>
<circle cx="572.9" cy="362.9" r="10.4" fill="url(#h9)"/>
<circle cx="595.3" cy="352.1" r="10.4" fill="url(#h14)"/>
<circle cx="552.6" cy="389.1" r="11.7" fill="url(#h25)"/>
<circle cx="554.0" cy="379.2" r="10.4" fill="url(#h12)"/>
<circle cx="549.5" cy="373.9" r="11.7" fill="url(#h9)"/>
<circle cx="574.1" cy="383.2" r="11.7" fill="url(#h14)"/>
<circle cx="578.9" cy="390.6" r="11.7" fill="url(#h14)"/>
<circle cx="580.1" cy="388.9" r="10.4" fill="url(#h12)"/>
<circle cx="563.4" cy="398.9" r="11.7" fill="url(#h16)"/>
<circle cx="553.8" cy="408.5" r="10.4" fill="url(#h9)"/>
<circle cx="578.3" cy="407.2" r="10.4" fill="url(#h7)"/>
<circle cx="543.1" cy="399.0" r="10.4" fill="url(#h7)"/>
<circle cx="410.7" cy="159.6" r="19.0" fill="url(#h6)"/>
<circle cx="410.7" cy="146.7" r="19.0" fill="url(#h6)"/>
<circle cx="422.4" cy="167.1" r="19.0" fill="url(#h6)"/>
<circle cx="422.4" cy="151.9" r="19.0" fill="url(#h6)"/>
<circle cx="430.3" cy="141.4" r="19.0" fill="url(#h6)"/>
<circle cx="434.2" cy="164.6" r="19.0" fill="url(#h6)"/>
<circle cx="438.1" cy="151.9" r="19.0" fill="url(#h6)"/>
<circle cx="445.9" cy="149.3" r="19.0" fill="url(#h6)"/>
<circle cx="418.5" cy="141.4" r="19.0" fill="url(#h6)"/>
<circle cx="438.1" cy="136.0" r="19.0" fill="url(#h6)"/>
<circle cx="445.9" cy="130.5" r="19.0" fill="url(#h6)"/>
<circle cx="453.7" cy="136.0" r="19.0" fill="url(#h6)"/>
<circle cx="461.6" cy="133.2" r="19.0" fill="url(#h6)"/>
<circle cx="449.8" cy="119.2" r="19.0" fill="url(#h6)"/>
<circle cx="442.0" cy="113.4" r="19.0" fill="url(#h1)"/>
<circle cx="434.2" cy="113.4" r="19.0" fill="url(#h1)"/>
<circle cx="457.6" cy="113.4" r="19.0" fill="url(#h6)"/>
<circle cx="465.5" cy="116.3" r="19.0" fill="url(#h6)"/>
<circle cx="449.8" cy="101.5" r="19.0" fill="url(#h6)"/>
<circle cx="438.1" cy="122.1" r="19.0" fill="url(#h1)"/>
<circle cx="465.5" cy="136.0" r="19.0" fill="url(#h6)"/>
<circle cx="434.2" cy="89.1" r="19.0" fill="url(#h6)"/>
<circle cx="438.1" cy="79.4" r="19.0" fill="url(#h6)"/>
<circle cx="430.3" cy="72.7" r="19.0" fill="url(#h6)"/>
<circle cx="426.4" cy="58.9" r="19.0" fill="url(#h6)"/>
<circle cx="430.3" cy="95.4" r="19.0" fill="url(#h6)"/>
<circle cx="444.0" cy="89.1" r="19.0" fill="url(#h6)"/>
<circle cx="414.6" cy="82.7" r="19.0" fill="url(#h2)"/>
<circle cx="410.7" cy="85.9" r="19.0" fill="url(#h2)"/>
<circle cx="416.6" cy="72.7" r="19.0" fill="url(#h2)"/>
<circle cx="461.6" cy="89.1" r="19.0" fill="url(#h6)"/>
<circle cx="469.4" cy="85.9" r="19.0" fill="url(#h6)"/>
<circle cx="477.2" cy="82.7" r="19.0" fill="url(#h6)"/>
<circle cx="485.0" cy="82.7" r="19.0" fill="url(#h6)"/>
<circle cx="492.8" cy="82.7" r="19.0" fill="url(#h6)"/>
<circle cx="469.4" cy="98.5" r="19.0" fill="url(#h6)"/>
<circle cx="477.2" cy="98.5" r="19.0" fill="url(#h6)"/>
<circle cx="485.0" cy="95.4" r="19.0" fill="url(#h6)"/>
<circle cx="492.8" cy="95.4" r="19.0" fill="url(#h6)"/>
<circle cx="477.2" cy="110.5" r="19.0" fill="url(#h6)"/>
<circle cx="485.0" cy="110.5" r="19.0" fill="url(#h6)"/>
<circle cx="492.8" cy="110.5" r="19.0" fill="url(#h6)"/>
<circle cx="500.7" cy="113.4" r="19.0" fill="url(#h2)"/>
<circle cx="473.3" cy="122.1" r="19.0" fill="url(#h6)"/>
<circle cx="481.1" cy="122.1" r="19.0" fill="url(#h6)"/>
<circle cx="477.2" cy="130.5" r="19.0" fill="url(#h6)"/>
<circle cx="485.0" cy="133.2" r="19.0" fill="url(#h6)"/>
<circle cx="488.9" cy="141.4" r="19.0" fill="url(#h2)"/>
<circle cx="492.8" cy="146.7" r="19.0" fill="url(#h2)"/>
<circle cx="498.7" cy="151.9" r="19.0" fill="url(#h2)"/>
<circle cx="504.6" cy="154.5" r="19.0" fill="url(#h2)"/>
<circle cx="490.9" cy="127.7" r="19.0" fill="url(#h6)"/>
<circle cx="473.3" cy="133.2" r="19.0" fill="url(#h6)"/>
<circle cx="504.6" cy="164.6" r="19.0" fill="url(#h2)"/>
<circle cx="496.8" cy="169.6" r="19.0" fill="url(#h2)"/>
<circle cx="500.7" cy="101.5" r="19.0" fill="url(#h2)"/>
<circle cx="508.5" cy="101.5" r="19.0" fill="url(#h2)"/>
<circle cx="516.3" cy="101.5" r="19.0" fill="url(#h2)"/>
<circle cx="508.5" cy="89.1" r="19.0" fill="url(#h2)"/>
<circle cx="516.3" cy="89.1" r="19.0" fill="url(#h2)"/>
<circle cx="524.1" cy="92.2" r="19.0" fill="url(#h2)"/>
<circle cx="512.4" cy="76.1" r="19.0" fill="url(#h2)"/>
<circle cx="508.5" cy="113.4" r="19.0" fill="url(#h2)"/>
<circle cx="516.3" cy="116.3" r="19.0" fill="url(#h2)"/>
<circle cx="524.1" cy="119.2" r="19.0" fill="url(#h2)"/>
<circle cx="500.7" cy="124.9" r="19.0" fill="url(#h2)"/>
<circle cx="508.5" cy="127.7" r="19.0" fill="url(#h2)"/>
<circle cx="516.3" cy="130.5" r="19.0" fill="url(#h2)"/>
<circle cx="524.1" cy="133.2" r="19.0" fill="url(#h2)"/>
<circle cx="532.0" cy="136.0" r="19.0" fill="url(#h2)"/>
<circle cx="539.8" cy="133.2" r="19.0" fill="url(#h2)"/>
<circle cx="547.6" cy="130.5" r="19.0" fill="url(#h2)"/>
<circle cx="532.0" cy="122.1" r="19.0" fill="url(#h2)"/>
<circle cx="539.8" cy="122.1" r="19.0" fill="url(#h2)"/>
<circle cx="524.1" cy="146.7" r="19.0" fill="url(#h2)"/>
<circle cx="532.0" cy="149.3" r="19.0" fill="url(#h6)"/>
<circle cx="528.0" cy="159.6" r="19.0" fill="url(#h6)"/>
<circle cx="530.0" cy="167.1" r="19.0" fill="url(#h6)"/>
<circle cx="535.9" cy="167.1" r="19.0" fill="url(#h6)"/>
<circle cx="543.7" cy="149.3" r="19.0" fill="url(#h6)"/>
<circle cx="543.7" cy="162.1" r="19.0" fill="url(#h6)"/>
<circle cx="481.1" cy="62.4" r="19.0" fill="url(#h6)"/>
<circle cx="488.9" cy="62.4" r="19.0" fill="url(#h6)"/>
<circle cx="488.9" cy="48.1" r="19.0" fill="url(#h6)"/>
<circle cx="492.8" cy="65.9" r="19.0" fill="url(#h6)"/>
<circle cx="483.1" cy="36.8" r="19.0" fill="url(#h6)"/>
<circle cx="500.7" cy="44.4" r="19.0" fill="url(#h6)"/>
<circle cx="508.5" cy="40.6" r="19.0" fill="url(#h6)"/>
<circle cx="512.4" cy="32.9" r="19.0" fill="url(#h6)"/>
<circle cx="465.5" cy="40.6" r="19.0" fill="url(#h6)"/>
<circle cx="465.5" cy="24.9" r="19.0" fill="url(#h6)"/>
<circle cx="473.3" cy="12.5" r="19.0" fill="url(#h6)"/>
<circle cx="483.1" cy="8.3" r="19.0" fill="url(#h6)"/>
<circle cx="532.0" cy="28.9" r="19.0" fill="url(#h6)"/>
<circle cx="539.8" cy="24.9" r="19.0" fill="url(#h6)"/>
<circle cx="539.8" cy="40.6" r="19.0" fill="url(#h6)"/>
<circle cx="535.9" cy="55.4" r="19.0" fill="url(#h6)"/>
<circle cx="535.9" cy="69.3" r="19.0" fill="url(#h2)"/>
<circle cx="524.1" cy="69.3" r="19.0" fill="url(#h2)"/>
<circle cx="551.5" cy="154.5" r="19.0" fill="url(#h6)"/>
<circle cx="559.3" cy="157.0" r="19.0" fill="url(#h6)"/>
<circle cx="567.2" cy="157.0" r="19.0" fill="url(#h6)"/>
<circle cx="555.4" cy="167.1" r="19.0" fill="url(#h6)"/>
<circle cx="563.2" cy="169.6" r="19.0" fill="url(#h6)"/>
<circle cx="575.0" cy="169.6" r="19.0" fill="url(#h6)"/>
<circle cx="575.0" cy="159.6" r="19.0" fill="url(#h6)"/>
<circle cx="582.8" cy="172.0" r="19.0" fill="url(#h6)"/>
<circle cx="578.9" cy="193.5" r="19.0" fill="url(#h6)"/>
<circle cx="580.8" cy="186.5" r="19.0" fill="url(#h6)"/>
<circle cx="160.4" cy="146.7" r="18.0" fill="url(#h5)"/>
<circle cx="152.6" cy="151.9" r="18.0" fill="url(#h5)"/>
<circle cx="144.8" cy="157.0" r="18.0" fill="url(#h5)"/>
<circle cx="140.8" cy="162.1" r="18.0" fill="url(#h5)"/>
<circle cx="136.9" cy="169.6" r="18.0" fill="url(#h2)"/>
<circle cx="133.0" cy="176.9" r="18.0" fill="url(#h2)"/>
<circle cx="125.2" cy="181.7" r="18.0" fill="url(#h5)"/>
<circle cx="117.4" cy="186.5" r="18.0" fill="url(#h5)"/>
<circle cx="113.5" cy="191.1" r="18.0" fill="url(#h5)"/>
<circle cx="121.3" cy="202.6" r="18.0" fill="url(#h5)"/>
<circle cx="123.2" cy="211.6" r="18.0" fill="url(#h5)"/>
<circle cx="127.2" cy="220.4" r="18.0" fill="url(#h5)"/>
<circle cx="148.7" cy="138.7" r="18.0" fill="url(#h5)"/>
<circle cx="140.8" cy="141.4" r="18.0" fill="url(#h5)"/>
<circle cx="133.0" cy="141.4" r="18.0" fill="url(#h2)"/>
<circle cx="129.1" cy="151.9" r="18.0" fill="url(#h2)"/>
<circle cx="121.3" cy="154.5" r="18.0" fill="url(#h2)"/>
<circle cx="113.5" cy="157.0" r="18.0" fill="url(#h2)"/>
<circle cx="105.6" cy="157.0" r="18.0" fill="url(#h2)"/>
<circle cx="97.8" cy="149.3" r="18.0" fill="url(#h2)"/>
<circle cx="113.5" cy="144.0" r="18.0" fill="url(#h2)"/>
<circle cx="105.6" cy="144.0" r="18.0" fill="url(#h2)"/>
<circle cx="97.8" cy="138.7" r="18.0" fill="url(#h2)"/>
<circle cx="90.0" cy="162.1" r="18.0" fill="url(#h2)"/>
<circle cx="101.7" cy="172.0" r="18.0" fill="url(#h2)"/>
<circle cx="109.6" cy="176.9" r="18.0" fill="url(#h2)"/>
<circle cx="93.9" cy="176.9" r="18.0" fill="url(#h2)"/>
<circle cx="82.2" cy="164.6" r="18.0" fill="url(#h5)"/>
<circle cx="74.4" cy="162.1" r="18.0" fill="url(#h5)"/>
<circle cx="86.1" cy="146.7" r="18.0" fill="url(#h2)"/>
<circle cx="78.3" cy="130.5" r="18.0" fill="url(#h5)"/>
<circle cx="66.5" cy="191.1" r="18.0" fill="url(#h5)"/>
<circle cx="62.6" cy="200.4" r="18.0" fill="url(#h5)"/>
<circle cx="70.4" cy="204.9" r="18.0" fill="url(#h5)"/>
<circle cx="58.7" cy="204.9" r="18.0" fill="url(#h5)"/>
<circle cx="86.1" cy="202.6" r="18.0" fill="url(#h5)"/>
<circle cx="101.7" cy="188.8" r="18.0" fill="url(#h5)"/>
<circle cx="97.8" cy="200.4" r="18.0" fill="url(#h5)"/>
<circle cx="156.5" cy="127.7" r="18.0" fill="url(#h5)"/>
<circle cx="164.3" cy="136.0" r="18.0" fill="url(#h5)"/>
<circle cx="895.7" cy="157.0" r="18.0" fill="url(#h5)"/>
<circle cx="899.6" cy="167.1" r="18.0" fill="url(#h5)"/>
<circle cx="903.5" cy="176.9" r="18.0" fill="url(#h5)"/>
<circle cx="907.4" cy="186.5" r="18.0" fill="url(#h5)"/>
<circle cx="911.3" cy="195.8" r="18.0" fill="url(#h5)"/>
<circle cx="915.2" cy="204.9" r="18.0" fill="url(#h5)"/>
<circle cx="903.5" cy="195.8" r="18.0" fill="url(#h5)"/>
<circle cx="895.7" cy="186.5" r="18.0" fill="url(#h5)"/>
<circle cx="887.9" cy="184.1" r="18.0" fill="url(#h5)"/>
<circle cx="880.0" cy="186.5" r="18.0" fill="url(#h5)"/>
<circle cx="872.2" cy="186.5" r="18.0" fill="url(#h5)"/>
<circle cx="887.9" cy="200.4" r="18.0" fill="url(#h5)"/>
<circle cx="880.0" cy="209.4" r="18.0" fill="url(#h5)"/>
<circle cx="887.9" cy="213.9" r="18.0" fill="url(#h5)"/>
<circle cx="895.7" cy="209.4" r="18.0" fill="url(#h5)"/>
<circle cx="903.5" cy="209.4" r="18.0" fill="url(#h5)"/>
<circle cx="907.4" cy="218.3" r="18.0" fill="url(#h5)"/>
<circle cx="903.5" cy="227.0" r="18.0" fill="url(#h5)"/>
<circle cx="895.7" cy="231.3" r="18.0" fill="url(#h5)"/>
<circle cx="887.9" cy="233.4" r="18.0" fill="url(#h5)"/>
<circle cx="880.0" cy="235.5" r="18.0" fill="url(#h5)"/>
<circle cx="872.2" cy="235.5" r="18.0" fill="url(#h5)"/>
<circle cx="884.0" cy="218.3" r="18.0" fill="url(#h5)"/>
<circle cx="856.6" cy="204.9" r="18.0" fill="url(#h5)"/>
<circle cx="848.8" cy="200.4" r="18.0" fill="url(#h5)"/>
<circle cx="860.5" cy="218.3" r="18.0" fill="url(#h5)"/>
<circle cx="848.8" cy="222.6" r="18.0" fill="url(#h5)"/>
<circle cx="844.8" cy="204.9" r="18.0" fill="url(#h5)"/>
<circle cx="872.2" cy="200.4" r="18.0" fill="url(#h5)"/>
<circle cx="911.3" cy="172.0" r="18.0" fill="url(#h5)"/>
<circle cx="919.2" cy="157.0" r="18.0" fill="url(#h5)"/>
<circle cx="899.6" cy="154.5" r="18.0" fill="url(#h5)"/>
<circle cx="891.8" cy="167.1" r="18.0" fill="url(#h5)"/>
<circle cx="884.0" cy="174.5" r="18.0" fill="url(#h5)"/>
<circle cx="743.2" cy="209.4" r="16.0" fill="url(#h6)"/>
<circle cx="739.2" cy="200.4" r="16.0" fill="url(#h6)"/>
<circle cx="733.4" cy="195.8" r="16.0" fill="url(#h6)"/>
<circle cx="727.5" cy="188.8" r="16.0" fill="url(#h6)"/>
<circle cx="747.1" cy="218.3" r="16.0" fill="url(#h6)"/>
<circle cx="754.9" cy="218.3" r="16.0" fill="url(#h6)"/>
<circle cx="762.7" cy="222.6" r="16.0" fill="url(#h6)"/>
<circle cx="770.5" cy="224.8" r="16.0" fill="url(#h6)"/>
<circle cx="778.4" cy="231.3" r="16.0" fill="url(#h6)"/>
<circle cx="786.2" cy="235.5" r="16.0" fill="url(#h6)"/>
<circle cx="778.4" cy="244.0" r="16.0" fill="url(#h6)"/>
<circle cx="770.5" cy="250.2" r="16.0" fill="url(#h6)"/>
<circle cx="762.7" cy="258.5" r="16.0" fill="url(#h6)"/>
<circle cx="754.9" cy="266.6" r="16.0" fill="url(#h6)"/>
<circle cx="751.0" cy="274.7" r="16.0" fill="url(#h6)"/>
<circle cx="747.1" cy="282.7" r="16.0" fill="url(#h6)"/>
<circle cx="743.2" cy="290.7" r="16.0" fill="url(#h6)"/>
<circle cx="739.2" cy="284.7" r="16.0" fill="url(#h6)"/>
<circle cx="735.3" cy="274.7" r="16.0" fill="url(#h6)"/>
<circle cx="731.4" cy="264.6" r="16.0" fill="url(#h6)"/>
<circle cx="729.5" cy="254.4" r="16.0" fill="url(#h6)"/>
<circle cx="727.5" cy="244.0" r="16.0" fill="url(#h6)"/>
<circle cx="725.6" cy="235.5" r="16.0" fill="url(#h6)"/>
<circle cx="735.3" cy="235.5" r="16.0" fill="url(#h6)"/>
<circle cx="743.2" cy="235.5" r="16.0" fill="url(#h6)"/>
<circle cx="751.0" cy="241.9" r="16.0" fill="url(#h6)"/>
<circle cx="747.1" cy="256.4" r="16.0" fill="url(#h6)"/>
<circle cx="739.2" cy="252.3" r="16.0" fill="url(#h6)"/>
<circle cx="743.2" cy="272.7" r="16.0" fill="url(#h6)"/>
<circle cx="794.0" cy="231.3" r="16.0" fill="url(#h6)"/>
<circle cx="797.9" cy="222.6" r="16.0" fill="url(#h6)"/>
<circle cx="938.7" cy="169.6" r="15.0" fill="url(#h7)"/>
<circle cx="940.7" cy="176.9" r="15.0" fill="url(#h7)"/>
<circle cx="944.6" cy="179.3" r="15.0" fill="url(#h7)"/>
<circle cx="937.9" cy="180.3" r="15.0" fill="url(#h7)"/>
<circle cx="952.4" cy="189.7" r="15.0" fill="url(#h0)"/>
<circle cx="954.4" cy="195.8" r="15.0" fill="url(#h0)"/>
<circle cx="958.3" cy="186.5" r="15.0" fill="url(#h0)"/>
<circle cx="641.5" cy="179.3" r="17.0" fill="url(#h2)"/>
<circle cx="637.6" cy="186.5" r="17.0" fill="url(#h2)"/>
<circle cx="645.4" cy="191.1" r="17.0" fill="url(#h2)"/>
<circle cx="649.3" cy="200.4" r="17.0" fill="url(#h2)"/>
<circle cx="645.4" cy="204.9" r="17.0" fill="url(#h2)"/>
<circle cx="629.7" cy="172.0" r="17.0" fill="url(#h2)"/>
<circle cx="621.9" cy="167.1" r="17.0" fill="url(#h2)"/>
<circle cx="633.6" cy="195.8" r="17.0" fill="url(#h2)"/>
<circle cx="657.1" cy="191.1" r="17.0" fill="url(#h2)"/>
<circle cx="664.9" cy="181.7" r="17.0" fill="url(#h2)"/>
<circle cx="672.8" cy="176.9" r="17.0" fill="url(#h2)"/>
<circle cx="649.3" cy="174.5" r="17.0" fill="url(#h2)"/>
<circle cx="625.8" cy="184.1" r="17.0" fill="url(#h2)"/>
<circle cx="121.3" cy="167.1" r="18.0" fill="url(#h8)"/>
<circle cx="125.2" cy="172.0" r="18.0" fill="url(#h8)"/>
<circle cx="117.4" cy="174.5" r="18.0" fill="url(#h8)"/>
<circle cx="119.3" cy="161.1" r="18.0" fill="url(#h8)"/>
<circle cx="127.2" cy="164.6" r="18.0" fill="url(#h8)"/>
<circle cx="72.0" cy="161.6" r="15.0" fill="url(#h9)"/>
<circle cx="61.4" cy="168.6" r="15.0" fill="url(#h9)"/>
<circle cx="66.5" cy="150.3" r="15.0" fill="url(#h9)"/>
<circle cx="60.7" cy="179.3" r="15.0" fill="url(#h9)"/>
<circle cx="50.9" cy="167.1" r="15.0" fill="url(#h9)"/>
<circle cx="75.9" cy="148.8" r="15.0" fill="url(#h9)"/>
<circle cx="81.0" cy="183.1" r="15.0" fill="url(#h9)"/>
<circle cx="43.5" cy="180.7" r="15.0" fill="url(#h9)"/>
<circle cx="58.7" cy="188.8" r="15.0" fill="url(#h9)"/>
<circle cx="43.1" cy="195.8" r="15.0" fill="url(#h9)"/>
</g>
<g font-family="Liberation Sans, sans-serif" text-anchor="middle" fill="#0d4560" stroke="#0d4560" stroke-width="0.25" style="opacity:0.999">
<ellipse cx="59.0" cy="90.1" rx="11.32" ry="12.09" fill="none" stroke="#fff" stroke-opacity="0.4" stroke-width="1"/>
<ellipse cx="59.0" cy="90.1" rx="10.12" ry="10.89" fill="#fff" stroke="#0d4560" stroke-width="1.6"/>
<text x="59.0" y="94.3" font-size="11.6" textLength="11.8" lengthAdjust="spacingAndGlyphs">66</text>
<ellipse cx="62.5" cy="168.5" rx="13.06" ry="13.84" fill="none" stroke="#fff" stroke-opacity="0.4" stroke-width="1"/>
<ellipse cx="62.5" cy="168.5" rx="11.86" ry="12.64" fill="#fff" stroke="#0d4560" stroke-width="1.6"/>
<text x="62.5" y="173.0" font-size="12.6" textLength="18.4" lengthAdjust="spacingAndGlyphs">574</text>
<ellipse cx="190.5" cy="196.1" rx="8.10" ry="8.10" fill="none" stroke="#fff" stroke-opacity="0.4" stroke-width="1"/>
<ellipse cx="190.5" cy="196.1" rx="6.90" ry="6.90" fill="#fff" stroke="#0d4560" stroke-width="1.6"/>
<text x="190.5" y="200.1" font-size="11.2">1</text>
<ellipse cx="44.2" cy="237.0" rx="11.32" ry="12.09" fill="none" stroke="#fff" stroke-opacity="0.4" stroke-width="1"/>
<ellipse cx="44.2" cy="237.0" rx="10.12" ry="10.89" fill="#fff" stroke="#0d4560" stroke-width="1.6"/>
<text x="44.2" y="241.2" font-size="11.6" textLength="11.8" lengthAdjust="spacingAndGlyphs">29</text>
<ellipse cx="130.1" cy="244.3" rx="8.10" ry="8.10" fill="none" stroke="#fff" stroke-opacity="0.4" stroke-width="1"/>
<ellipse cx="130.1" cy="244.3" rx="6.90" ry="6.90" fill="#fff" stroke="#0d4560" stroke-width="1.6"/>
<text x="130.1" y="248.3" font-size="11.2">4</text>
<ellipse cx="140.0" cy="257.6" rx="8.10" ry="8.10" fill="none" stroke="#fff" stroke-opacity="0.4" stroke-width="1"/>
<ellipse cx="140.0" cy="257.6" rx="6.90" ry="6.90" fill="#fff" stroke="#0d4560" stroke-width="1.6"/>
<text x="140.0" y="261.6" font-size="11.2">1</text>
<ellipse cx="183.2" cy="257.4" rx="8.10" ry="8.10" fill="none" stroke="#fff" stroke-opacity="0.4" stroke-width="1"/>
<ellipse cx="183.2" cy="257.4" rx="6.90" ry="6.90" fill="#fff" stroke="#0d4560" stroke-width="1.6"/>
<text x="183.2" y="261.4" font-size="11.2">2</text>
<ellipse cx="90.5" cy="269.0" rx="8.10" ry="8.10" fill="none" stroke="#fff" stroke-opacity="0.4" stroke-width="1"/>
<ellipse cx="90.5" cy="269.0" rx="6.90" ry="6.90" fill="#fff" stroke="#0d4560" stroke-width="1.6"/>
<text x="90.5" y="273.0" font-size="11.2">1</text>
<ellipse cx="210.5" cy="278.5" rx="8.10" ry="8.10" fill="none" stroke="#fff" stroke-opacity="0.4" stroke-width="1"/>
<ellipse cx="210.5" cy="278.5" rx="6.90" ry="6.90" fill="#fff" stroke="#0d4560" stroke-width="1.6"/>
<text x="210.5" y="282.5" font-size="11.2">1</text>
<ellipse cx="174.3" cy="282.0" rx="8.10" ry="8.10" fill="none" stroke="#fff" stroke-opacity="0.4" stroke-width="1"/>
<ellipse cx="174.3" cy="282.0" rx="6.90" ry="6.90" fill="#fff" stroke="#0d4560" stroke-width="1.6"/>
<text x="174.3" y="286.0" font-size="11.2">1</text>
<ellipse cx="114.3" cy="290.9" rx="8.10" ry="8.10" fill="none" stroke="#fff" stroke-opacity="0.4" stroke-width="1"/>
<ellipse cx="114.3" cy="290.9" rx="6.90" ry="6.90" fill="#fff" stroke="#0d4560" stroke-width="1.6"/>
<text x="114.3" y="294.9" font-size="11.2">5</text>
<ellipse cx="185.3" cy="298.9" rx="8.10" ry="8.10" fill="none" stroke="#fff" stroke-opacity="0.4" stroke-width="1"/>
<ellipse cx="185.3" cy="298.9" rx="6.90" ry="6.90" fill="#fff" stroke="#0d4560" stroke-width="1.6"/>
<text x="185.3" y="302.9" font-size="11.2">2</text>
<ellipse cx="161.5" cy="314.7" rx="11.06" ry="11.81" fill="none" stroke="#fff" stroke-opacity="0.4" stroke-width="1"/>
<ellipse cx="161.5" cy="314.7" rx="9.86" ry="10.61" fill="#fff" stroke="#0d4560" stroke-width="1.6"/>
<text x="161.5" y="318.9" font-size="11.6" textLength="11.5" lengthAdjust="spacingAndGlyphs">21</text>
<ellipse cx="224.2" cy="314.7" rx="8.38" ry="8.38" fill="none" stroke="#fff" stroke-opacity="0.4" stroke-width="1"/>
<ellipse cx="224.2" cy="314.7" rx="7.18" ry="7.18" fill="#fff" stroke="#0d4560" stroke-width="1.6"/>
<text x="224.2" y="318.7" font-size="11.2">1</text>
<ellipse cx="140.0" cy="337.9" rx="8.10" ry="8.10" fill="none" stroke="#fff" stroke-opacity="0.4" stroke-width="1"/>
<ellipse cx="140.0" cy="337.9" rx="6.90" ry="6.90" fill="#fff" stroke="#0d4560" stroke-width="1.6"/>
<text x="140.0" y="341.9" font-size="11.2">9</text>
<ellipse cx="145.7" cy="369.7" rx="8.10" ry="8.10" fill="none" stroke="#fff" stroke-opacity="0.4" stroke-width="1"/>
<ellipse cx="145.7" cy="369.7" rx="6.90" ry="6.90" fill="#fff" stroke="#0d4560" stroke-width="1.6"/>
<text x="145.7" y="373.7" font-size="11.2">9</text>
<ellipse cx="228.0" cy="369.7" rx="11.32" ry="12.09" fill="none" stroke="#fff" stroke-opacity="0.4" stroke-width="1"/>
<ellipse cx="228.0" cy="369.7" rx="10.12" ry="10.89" fill="#fff" stroke="#0d4560" stroke-width="1.6"/>
<text x="228.0" y="373.9" font-size="11.6" textLength="11.8" lengthAdjust="spacingAndGlyphs">70</text>
<ellipse cx="389.0" cy="276.0" rx="8.10" ry="8.10" fill="none" stroke="#fff" stroke-opacity="0.4" stroke-width="1"/>
<ellipse cx="389.0" cy="276.0" rx="6.90" ry="6.90" fill="#fff" stroke="#0d4560" stroke-width="1.6"/>
<text x="389.0" y="280.0" font-size="11.2">1</text>
<ellipse cx="349.5" cy="267.1" rx="8.10" ry="8.10" fill="none" stroke="#fff" stroke-opacity="0.4" stroke-width="1"/>
<ellipse cx="349.5" cy="267.1" rx="6.90" ry="6.90" fill="#fff" stroke="#0d4560" stroke-width="1.6"/>
<text x="349.5" y="271.1" font-size="11.2">1</text>
<ellipse cx="399.0" cy="296.6" rx="8.10" ry="8.10" fill="none" stroke="#fff" stroke-opacity="0.4" stroke-width="1"/>
<ellipse cx="399.0" cy="296.6" rx="6.90" ry="6.90" fill="#fff" stroke="#0d4560" stroke-width="1.6"/>
<text x="399.0" y="300.6" font-size="11.2">1</text>
<ellipse cx="424.2" cy="298.9" rx="7.94" ry="7.94" fill="none" stroke="#fff" stroke-opacity="0.4" stroke-width="1"/>
<ellipse cx="424.2" cy="298.9" rx="6.74" ry="6.74" fill="#fff" stroke="#0d4560" stroke-width="1.6"/>
<text x="424.2" y="302.9" font-size="11.2">2</text>
<ellipse cx="449.1" cy="298.9" rx="7.94" ry="7.94" fill="none" stroke="#fff" stroke-opacity="0.4" stroke-width="1"/>
<ellipse cx="449.1" cy="298.9" rx="6.74" ry="6.74" fill="#fff" stroke="#0d4560" stroke-width="1.6"/>
<text x="449.1" y="302.9" font-size="11.2">1</text>
<ellipse cx="436.2" cy="298.9" rx="7.94" ry="7.94" fill="none" stroke="#fff" stroke-opacity="0.4" stroke-width="1"/>
<ellipse cx="436.2" cy="298.9" rx="6.74" ry="6.74" fill="#fff" stroke="#0d4560" stroke-width="1.6"/>
<text x="436.2" y="302.9" font-size="11.2">7</text>
<ellipse cx="476.2" cy="290.9" rx="11.32" ry="12.09" fill="none" stroke="#fff" stroke-opacity="0.4" stroke-width="1"/>
<ellipse cx="476.2" cy="290.9" rx="10.12" ry="10.89" fill="#fff" stroke="#0d4560" stroke-width="1.6"/>
<text x="476.2" y="295.1" font-size="11.6" textLength="11.8" lengthAdjust="spacingAndGlyphs">13</text>
<ellipse cx="491.0" cy="306.9" rx="8.10" ry="8.10" fill="none" stroke="#fff" stroke-opacity="0.4" stroke-width="1"/>
<ellipse cx="491.0" cy="306.9" rx="6.90" ry="6.90" fill="#fff" stroke="#0d4560" stroke-width="1.6"/>
<text x="491.0" y="310.9" font-size="11.2">3</text>
<ellipse cx="424.8" cy="198.0" rx="11.06" ry="11.81" fill="none" stroke="#fff" stroke-opacity="0.4" stroke-width="1"/>
<ellipse cx="424.8" cy="198.0" rx="9.86" ry="10.61" fill="#fff" stroke="#0d4560" stroke-width="1.6"/>
<text x="424.8" y="202.2" font-size="11.6" textLength="11.5" lengthAdjust="spacingAndGlyphs">14</text>
<ellipse cx="455.8" cy="215.7" rx="11.06" ry="11.81" fill="none" stroke="#fff" stroke-opacity="0.4" stroke-width="1"/>
<ellipse cx="455.8" cy="215.7" rx="9.86" ry="10.61" fill="#fff" stroke="#0d4560" stroke-width="1.6"/>
<text x="455.8" y="219.9" font-size="11.6" textLength="11.5" lengthAdjust="spacingAndGlyphs">12</text>
<ellipse cx="478.6" cy="187.5" rx="8.10" ry="8.10" fill="none" stroke="#fff" stroke-opacity="0.4" stroke-width="1"/>
<ellipse cx="478.6" cy="187.5" rx="6.90" ry="6.90" fill="#fff" stroke="#0d4560" stroke-width="1.6"/>
<text x="478.6" y="191.5" font-size="11.2">4</text>
<ellipse cx="501.2" cy="179.4" rx="7.83" ry="7.83" fill="none" stroke="#fff" stroke-opacity="0.4" stroke-width="1"/>
<ellipse cx="501.2" cy="179.4" rx="6.63" ry="6.63" fill="#fff" stroke="#0d4560" stroke-width="1.6"/>
<text x="501.2" y="183.4" font-size="11.2">3</text>
<ellipse cx="412.1" cy="84.2" rx="10.80" ry="11.53" fill="none" stroke="#fff" stroke-opacity="0.4" stroke-width="1"/>
<ellipse cx="412.1" cy="84.2" rx="9.60" ry="10.33" fill="#fff" stroke="#0d4560" stroke-width="1.6"/>
<text x="412.1" y="88.4" font-size="11.6" textLength="11.2" lengthAdjust="spacingAndGlyphs">20</text>
<ellipse cx="435.7" cy="76.9" rx="12.37" ry="13.11" fill="none" stroke="#fff" stroke-opacity="0.4" stroke-width="1"/>
<ellipse cx="435.7" cy="76.9" rx="11.17" ry="11.91" fill="#fff" stroke="#0d4560" stroke-width="1.6"/>
<text x="435.7" y="81.4" font-size="12.6" textLength="17.4" lengthAdjust="spacingAndGlyphs">233</text>
<circle cx="458.7" cy="73.3" r="6.8" fill="#000" stroke="none"/>
<path transform="translate(458.7 73.3)" d="M0 -4 L3.6 -1.9 V-1.2 H-3.6 V-1.9 Z M-2.9 -0.6 H-1.4 V2.2 H-2.9 Z M-0.75 -0.6 H0.75 V2.2 H-0.75 Z M1.4 -0.6 H2.9 V2.2 H1.4 Z M-3.7 2.7 H3.7 V3.9 H-3.7 Z" fill="#fff" stroke="none"/>
<ellipse cx="468.5" cy="108.3" rx="6.45" ry="6.45" fill="none" stroke="#fff" stroke-opacity="0.4" stroke-width="1"/>
<ellipse cx="468.5" cy="108.3" rx="5.25" ry="5.25" fill="#fff" stroke="#0d4560" stroke-width="1.6"/>
<ellipse cx="459.2" cy="99.1" rx="10.18" ry="10.86" fill="none" stroke="#fff" stroke-opacity="0.4" stroke-width="1"/>
<ellipse cx="459.2" cy="99.1" rx="8.98" ry="9.66" fill="#fff" stroke="#0d4560" stroke-width="1.6"/>
<text x="459.2" y="103.3" font-size="11.6" textLength="10.6" lengthAdjust="spacingAndGlyphs">39</text>
<ellipse cx="465.3" cy="87.3" rx="12.00" ry="12.72" fill="none" stroke="#fff" stroke-opacity="0.4" stroke-width="1"/>
<ellipse cx="465.3" cy="87.3" rx="10.80" ry="11.52" fill="#fff" stroke="#0d4560" stroke-width="1.6"/>
<text x="465.3" y="91.8" font-size="12.6" textLength="16.8" lengthAdjust="spacingAndGlyphs">169</text>
<ellipse cx="478.5" cy="96.6" rx="12.64" ry="13.39" fill="none" stroke="#fff" stroke-opacity="0.4" stroke-width="1"/>
<ellipse cx="478.5" cy="96.6" rx="11.44" ry="12.19" fill="#fff" stroke="#0d4560" stroke-width="1.6"/>
<text x="478.5" y="101.1" font-size="12.6" textLength="17.7" lengthAdjust="spacingAndGlyphs">317</text>
<circle cx="450.8" cy="108.2" r="4.3" fill="#ee6c10" stroke="#fff" stroke-width="0.9"/>
<ellipse cx="483.2" cy="64.6" rx="10.80" ry="11.53" fill="none" stroke="#fff" stroke-opacity="0.4" stroke-width="1"/>
<ellipse cx="483.2" cy="64.6" rx="9.60" ry="10.33" fill="#fff" stroke="#0d4560" stroke-width="1.6"/>
<text x="483.2" y="68.8" font-size="11.6" textLength="11.2" lengthAdjust="spacingAndGlyphs">26</text>
<ellipse cx="484.2" cy="17.5" rx="10.02" ry="10.70" fill="none" stroke="#fff" stroke-opacity="0.4" stroke-width="1"/>
<ellipse cx="484.2" cy="17.5" rx="8.82" ry="9.50" fill="#fff" stroke="#0d4560" stroke-width="1.6"/>
<text x="484.2" y="21.7" font-size="11.6" textLength="10.4" lengthAdjust="spacingAndGlyphs">35</text>
<ellipse cx="502.9" cy="17.5" rx="10.80" ry="11.53" fill="none" stroke="#fff" stroke-opacity="0.4" stroke-width="1"/>
<ellipse cx="502.9" cy="17.5" rx="9.60" ry="10.33" fill="#fff" stroke="#0d4560" stroke-width="1.6"/>
<text x="502.9" y="21.7" font-size="11.6" textLength="11.2" lengthAdjust="spacingAndGlyphs">48</text>
<ellipse cx="545.7" cy="1.0" rx="10.80" ry="11.53" fill="none" stroke="#fff" stroke-opacity="0.4" stroke-width="1"/>
<ellipse cx="545.7" cy="1.0" rx="9.60" ry="10.33" fill="#fff" stroke="#0d4560" stroke-width="1.6"/>
<text x="545.7" y="5.2" font-size="11.6" textLength="11.2" lengthAdjust="spacingAndGlyphs">20</text>
<ellipse cx="545.7" cy="41.9" rx="7.94" ry="7.94" fill="none" stroke="#fff" stroke-opacity="0.4" stroke-width="1"/>
<ellipse cx="545.7" cy="41.9" rx="6.74" ry="6.74" fill="#fff" stroke="#0d4560" stroke-width="1.6"/>
<text x="545.7" y="45.9" font-size="11.2">9</text>
<ellipse cx="542.6" cy="55.8" rx="7.55" ry="7.55" fill="none" stroke="#fff" stroke-opacity="0.4" stroke-width="1"/>
<ellipse cx="542.6" cy="55.8" rx="6.35" ry="6.35" fill="#fff" stroke="#0d4560" stroke-width="1.6"/>
<text x="542.6" y="59.8" font-size="11.2">4</text>
<ellipse cx="538.7" cy="64.2" rx="7.94" ry="7.94" fill="none" stroke="#fff" stroke-opacity="0.4" stroke-width="1"/>
<ellipse cx="538.7" cy="64.2" rx="6.74" ry="6.74" fill="#fff" stroke="#0d4560" stroke-width="1.6"/>
<text x="538.7" y="68.2" font-size="11.2">5</text>
<ellipse cx="601.4" cy="56.6" rx="11.06" ry="11.81" fill="none" stroke="#fff" stroke-opacity="0.4" stroke-width="1"/>
<ellipse cx="601.4" cy="56.6" rx="9.86" ry="10.61" fill="#fff" stroke="#0d4560" stroke-width="1.6"/>
<text x="601.4" y="60.8" font-size="11.6" textLength="11.5" lengthAdjust="spacingAndGlyphs">50</text>
<ellipse cx="553.7" cy="84.3" rx="7.94" ry="7.94" fill="none" stroke="#fff" stroke-opacity="0.4" stroke-width="1"/>
<ellipse cx="553.7" cy="84.3" rx="6.74" ry="6.74" fill="#fff" stroke="#0d4560" stroke-width="1.6"/>
<text x="553.7" y="88.3" font-size="11.2">1</text>
<ellipse cx="520.9" cy="109.6" rx="8.10" ry="8.10" fill="none" stroke="#fff" stroke-opacity="0.4" stroke-width="1"/>
<ellipse cx="520.9" cy="109.6" rx="6.90" ry="6.90" fill="#fff" stroke="#0d4560" stroke-width="1.6"/>
<text x="520.9" y="113.6" font-size="11.2">8</text>
<ellipse cx="522.7" cy="90.2" rx="10.80" ry="11.53" fill="none" stroke="#fff" stroke-opacity="0.4" stroke-width="1"/>
<ellipse cx="522.7" cy="90.2" rx="9.60" ry="10.33" fill="#fff" stroke="#0d4560" stroke-width="1.6"/>
<text x="522.7" y="94.4" font-size="11.6" textLength="11.2" lengthAdjust="spacingAndGlyphs">65</text>
<ellipse cx="504.8" cy="105.0" rx="10.59" ry="11.31" fill="none" stroke="#fff" stroke-opacity="0.4" stroke-width="1"/>
<ellipse cx="504.8" cy="105.0" rx="9.39" ry="10.11" fill="#fff" stroke="#0d4560" stroke-width="1.6"/>
<text x="504.8" y="109.2" font-size="11.6" textLength="11.0" lengthAdjust="spacingAndGlyphs">19</text>
<ellipse cx="568.6" cy="109.6" rx="10.70" ry="11.42" fill="none" stroke="#fff" stroke-opacity="0.4" stroke-width="1"/>
<ellipse cx="568.6" cy="109.6" rx="9.50" ry="10.22" fill="#fff" stroke="#0d4560" stroke-width="1.6"/>
<text x="568.6" y="113.8" font-size="11.6" textLength="11.1" lengthAdjust="spacingAndGlyphs">12</text>
<ellipse cx="504.6" cy="130.8" rx="7.88" ry="7.88" fill="none" stroke="#fff" stroke-opacity="0.4" stroke-width="1"/>
<ellipse cx="504.6" cy="130.8" rx="6.68" ry="6.68" fill="#fff" stroke="#0d4560" stroke-width="1.6"/>
<text x="504.6" y="134.8" font-size="11.2">9</text>
<ellipse cx="450.9" cy="126.1" rx="12.37" ry="13.11" fill="none" stroke="#fff" stroke-opacity="0.4" stroke-width="1"/>
<ellipse cx="450.9" cy="126.1" rx="11.17" ry="11.91" fill="#fff" stroke="#0d4560" stroke-width="1.6"/>
<text x="450.9" y="130.6" font-size="12.6" textLength="17.4" lengthAdjust="spacingAndGlyphs">248</text>
<ellipse cx="475.6" cy="120.4" rx="10.59" ry="11.31" fill="none" stroke="#fff" stroke-opacity="0.4" stroke-width="1"/>
<ellipse cx="475.6" cy="120.4" rx="9.39" ry="10.11" fill="#fff" stroke="#0d4560" stroke-width="1.6"/>
<text x="475.6" y="124.6" font-size="11.6" textLength="11.0" lengthAdjust="spacingAndGlyphs">59</text>
<ellipse cx="496.4" cy="119.2" rx="10.59" ry="11.31" fill="none" stroke="#fff" stroke-opacity="0.4" stroke-width="1"/>
<ellipse cx="496.4" cy="119.2" rx="9.39" ry="10.11" fill="#fff" stroke="#0d4560" stroke-width="1.6"/>
<text x="496.4" y="123.4" font-size="11.6" textLength="11.0" lengthAdjust="spacingAndGlyphs">50</text>
<ellipse cx="522.4" cy="120.4" rx="10.80" ry="11.53" fill="none" stroke="#fff" stroke-opacity="0.4" stroke-width="1"/>
<ellipse cx="522.4" cy="120.4" rx="9.60" ry="10.33" fill="#fff" stroke="#0d4560" stroke-width="1.6"/>
<text x="522.4" y="124.6" font-size="11.6" textLength="11.2" lengthAdjust="spacingAndGlyphs">22</text>
<ellipse cx="542.0" cy="127.1" rx="10.59" ry="11.31" fill="none" stroke="#fff" stroke-opacity="0.4" stroke-width="1"/>
<ellipse cx="542.0" cy="127.1" rx="9.39" ry="10.11" fill="#fff" stroke="#0d4560" stroke-width="1.6"/>
<text x="542.0" y="131.3" font-size="11.6" textLength="11.0" lengthAdjust="spacingAndGlyphs">21</text>
<ellipse cx="514.2" cy="138.0" rx="7.55" ry="7.55" fill="none" stroke="#fff" stroke-opacity="0.4" stroke-width="1"/>
<ellipse cx="514.2" cy="138.0" rx="6.35" ry="6.35" fill="#fff" stroke="#0d4560" stroke-width="1.6"/>
<text x="514.2" y="142.0" font-size="11.2">4</text>
<ellipse cx="526.0" cy="138.0" rx="7.55" ry="7.55" fill="none" stroke="#fff" stroke-opacity="0.4" stroke-width="1"/>
<ellipse cx="526.0" cy="138.0" rx="6.35" ry="6.35" fill="#fff" stroke="#0d4560" stroke-width="1.6"/>
<text x="526.0" y="142.0" font-size="11.2">8</text>
<ellipse cx="493.9" cy="143.6" rx="12.37" ry="13.11" fill="none" stroke="#fff" stroke-opacity="0.4" stroke-width="1"/>
<ellipse cx="493.9" cy="143.6" rx="11.17" ry="11.91" fill="#fff" stroke="#0d4560" stroke-width="1.6"/>
<text x="493.9" y="148.1" font-size="12.6" textLength="17.4" lengthAdjust="spacingAndGlyphs">159</text>
<ellipse cx="542.3" cy="143.5" rx="7.55" ry="7.55" fill="none" stroke="#fff" stroke-opacity="0.4" stroke-width="1"/>
<ellipse cx="542.3" cy="143.5" rx="6.35" ry="6.35" fill="#fff" stroke="#0d4560" stroke-width="1.6"/>
<text x="542.3" y="147.5" font-size="11.2">9</text>
<ellipse cx="530.9" cy="148.5" rx="7.55" ry="7.55" fill="none" stroke="#fff" stroke-opacity="0.4" stroke-width="1"/>
<ellipse cx="530.9" cy="148.5" rx="6.35" ry="6.35" fill="#fff" stroke="#0d4560" stroke-width="1.6"/>
<text x="530.9" y="152.5" font-size="11.2">2</text>
<ellipse cx="522.0" cy="153.4" rx="7.55" ry="7.55" fill="none" stroke="#fff" stroke-opacity="0.4" stroke-width="1"/>
<ellipse cx="522.0" cy="153.4" rx="6.35" ry="6.35" fill="#fff" stroke="#0d4560" stroke-width="1.6"/>
<text x="522.0" y="157.4" font-size="11.2">2</text>
<ellipse cx="530.2" cy="164.0" rx="10.70" ry="11.42" fill="none" stroke="#fff" stroke-opacity="0.4" stroke-width="1"/>
<ellipse cx="530.2" cy="164.0" rx="9.50" ry="10.22" fill="#fff" stroke="#0d4560" stroke-width="1.6"/>
<text x="530.2" y="168.2" font-size="11.6" textLength="11.1" lengthAdjust="spacingAndGlyphs">38</text>
<ellipse cx="411.8" cy="161.4" rx="10.02" ry="10.70" fill="none" stroke="#fff" stroke-opacity="0.4" stroke-width="1"/>
<ellipse cx="411.8" cy="161.4" rx="8.82" ry="9.50" fill="#fff" stroke="#0d4560" stroke-width="1.6"/>
<text x="411.8" y="165.6" font-size="11.6" textLength="10.4" lengthAdjust="spacingAndGlyphs">42</text>
<ellipse cx="427.5" cy="158.0" rx="12.00" ry="12.72" fill="none" stroke="#fff" stroke-opacity="0.4" stroke-width="1"/>
<ellipse cx="427.5" cy="158.0" rx="10.80" ry="11.52" fill="#fff" stroke="#0d4560" stroke-width="1.6"/>
<text x="427.5" y="162.5" font-size="12.6" textLength="16.8" lengthAdjust="spacingAndGlyphs">192</text>
<ellipse cx="581.3" cy="164.1" rx="11.06" ry="11.81" fill="none" stroke="#fff" stroke-opacity="0.4" stroke-width="1"/>
<ellipse cx="581.3" cy="164.1" rx="9.86" ry="10.61" fill="#fff" stroke="#0d4560" stroke-width="1.6"/>
<text x="581.3" y="168.3" font-size="11.6" textLength="11.5" lengthAdjust="spacingAndGlyphs">64</text>
<ellipse cx="614.7" cy="147.9" rx="8.10" ry="8.10" fill="none" stroke="#fff" stroke-opacity="0.4" stroke-width="1"/>
<ellipse cx="614.7" cy="147.9" rx="6.90" ry="6.90" fill="#fff" stroke="#0d4560" stroke-width="1.6"/>
<text x="614.7" y="151.9" font-size="11.2">1</text>
<ellipse cx="620.4" cy="158.6" rx="8.10" ry="8.10" fill="none" stroke="#fff" stroke-opacity="0.4" stroke-width="1"/>
<ellipse cx="620.4" cy="158.6" rx="6.90" ry="6.90" fill="#fff" stroke="#0d4560" stroke-width="1.6"/>
<text x="620.4" y="162.6" font-size="11.2">2</text>
<ellipse cx="573.3" cy="183.3" rx="7.94" ry="7.94" fill="none" stroke="#fff" stroke-opacity="0.4" stroke-width="1"/>
<ellipse cx="573.3" cy="183.3" rx="6.74" ry="6.74" fill="#fff" stroke="#0d4560" stroke-width="1.6"/>
<text x="573.3" y="187.3" font-size="11.2">8</text>
<ellipse cx="593.3" cy="183.3" rx="7.94" ry="7.94" fill="none" stroke="#fff" stroke-opacity="0.4" stroke-width="1"/>
<ellipse cx="593.3" cy="183.3" rx="6.74" ry="6.74" fill="#fff" stroke="#0d4560" stroke-width="1.6"/>
<text x="593.3" y="187.3" font-size="11.2">1</text>
<ellipse cx="585.1" cy="188.5" rx="7.94" ry="7.94" fill="none" stroke="#fff" stroke-opacity="0.4" stroke-width="1"/>
<ellipse cx="585.1" cy="188.5" rx="6.74" ry="6.74" fill="#fff" stroke="#0d4560" stroke-width="1.6"/>
<text x="585.1" y="192.5" font-size="11.2">5</text>
<ellipse cx="587.6" cy="202.8" rx="7.00" ry="7.00" fill="none" stroke="#fff" stroke-opacity="0.4" stroke-width="1"/>
<ellipse cx="587.6" cy="202.8" rx="5.80" ry="5.80" fill="#fff" stroke="#0d4560" stroke-width="1.6"/>
<ellipse cx="581.0" cy="199.9" rx="10.80" ry="11.53" fill="none" stroke="#fff" stroke-opacity="0.4" stroke-width="1"/>
<ellipse cx="581.0" cy="199.9" rx="9.60" ry="10.33" fill="#fff" stroke="#0d4560" stroke-width="1.6"/>
<text x="581.0" y="204.1" font-size="11.6" textLength="11.2" lengthAdjust="spacingAndGlyphs">14</text>
<ellipse cx="616.4" cy="192.9" rx="8.10" ry="8.10" fill="none" stroke="#fff" stroke-opacity="0.4" stroke-width="1"/>
<ellipse cx="616.4" cy="192.9" rx="6.90" ry="6.90" fill="#fff" stroke="#0d4560" stroke-width="1.6"/>
<text x="616.4" y="196.9" font-size="11.2">5</text>
<ellipse cx="652.4" cy="198.0" rx="10.80" ry="11.53" fill="none" stroke="#fff" stroke-opacity="0.4" stroke-width="1"/>
<ellipse cx="652.4" cy="198.0" rx="9.60" ry="10.33" fill="#fff" stroke="#0d4560" stroke-width="1.6"/>
<text x="652.4" y="202.2" font-size="11.6" textLength="11.2" lengthAdjust="spacingAndGlyphs">57</text>
<ellipse cx="699.4" cy="193.2" rx="8.10" ry="8.10" fill="none" stroke="#fff" stroke-opacity="0.4" stroke-width="1"/>
<ellipse cx="699.4" cy="193.2" rx="6.90" ry="6.90" fill="#fff" stroke="#0d4560" stroke-width="1.6"/>
<text x="699.4" y="197.2" font-size="11.2">1</text>
<ellipse cx="695.2" cy="154.2" rx="8.38" ry="8.38" fill="none" stroke="#fff" stroke-opacity="0.4" stroke-width="1"/>
<ellipse cx="695.2" cy="154.2" rx="7.18" ry="7.18" fill="#fff" stroke="#0d4560" stroke-width="1.6"/>
<text x="695.2" y="158.2" font-size="11.2">2</text>
<ellipse cx="738.4" cy="154.0" rx="8.10" ry="8.10" fill="none" stroke="#fff" stroke-opacity="0.4" stroke-width="1"/>
<ellipse cx="738.4" cy="154.0" rx="6.90" ry="6.90" fill="#fff" stroke="#0d4560" stroke-width="1.6"/>
<text x="738.4" y="158.0" font-size="11.2">1</text>
<ellipse cx="711.0" cy="115.2" rx="8.38" ry="8.38" fill="none" stroke="#fff" stroke-opacity="0.4" stroke-width="1"/>
<ellipse cx="711.0" cy="115.2" rx="7.18" ry="7.18" fill="#fff" stroke="#0d4560" stroke-width="1.6"/>
<text x="711.0" y="119.2" font-size="11.2">4</text>
<ellipse cx="855.6" cy="127.2" rx="8.10" ry="8.10" fill="none" stroke="#fff" stroke-opacity="0.4" stroke-width="1"/>
<ellipse cx="855.6" cy="127.2" rx="6.90" ry="6.90" fill="#fff" stroke="#0d4560" stroke-width="1.6"/>
<text x="855.6" y="131.2" font-size="11.2">1</text>
<ellipse cx="719.0" cy="207.0" rx="10.80" ry="11.53" fill="none" stroke="#fff" stroke-opacity="0.4" stroke-width="1"/>
<ellipse cx="719.0" cy="207.0" rx="9.60" ry="10.33" fill="#fff" stroke="#0d4560" stroke-width="1.6"/>
<text x="719.0" y="211.2" font-size="11.6" textLength="11.2" lengthAdjust="spacingAndGlyphs">26</text>
<ellipse cx="561.9" cy="219.9" rx="11.06" ry="11.81" fill="none" stroke="#fff" stroke-opacity="0.4" stroke-width="1"/>
<ellipse cx="561.9" cy="219.9" rx="9.86" ry="10.61" fill="#fff" stroke="#0d4560" stroke-width="1.6"/>
<text x="561.9" y="224.1" font-size="11.6" textLength="11.5" lengthAdjust="spacingAndGlyphs">22</text>
<ellipse cx="630.9" cy="210.0" rx="8.10" ry="8.10" fill="none" stroke="#fff" stroke-opacity="0.4" stroke-width="1"/>
<ellipse cx="630.9" cy="210.0" rx="6.90" ry="6.90" fill="#fff" stroke="#0d4560" stroke-width="1.6"/>
<text x="630.9" y="214.0" font-size="11.2">4</text>
<ellipse cx="620.6" cy="229.0" rx="10.80" ry="11.53" fill="none" stroke="#fff" stroke-opacity="0.4" stroke-width="1"/>
<ellipse cx="620.6" cy="229.0" rx="9.60" ry="10.33" fill="#fff" stroke="#0d4560" stroke-width="1.6"/>
<text x="620.6" y="233.2" font-size="11.6" textLength="11.2" lengthAdjust="spacingAndGlyphs">20</text>
<ellipse cx="641.9" cy="224.7" rx="7.00" ry="7.00" fill="none" stroke="#fff" stroke-opacity="0.4" stroke-width="1"/>
<ellipse cx="641.9" cy="224.7" rx="5.80" ry="5.80" fill="#fff" stroke="#0d4560" stroke-width="1.6"/>
<ellipse cx="645.3" cy="226.6" rx="7.28" ry="7.28" fill="none" stroke="#fff" stroke-opacity="0.4" stroke-width="1"/>
<ellipse cx="645.3" cy="226.6" rx="6.08" ry="6.08" fill="#fff" stroke="#0d4560" stroke-width="1.6"/>
<text x="645.3" y="230.6" font-size="11.2">5</text>
<ellipse cx="655.6" cy="232.7" rx="10.80" ry="11.53" fill="none" stroke="#fff" stroke-opacity="0.4" stroke-width="1"/>
<ellipse cx="655.6" cy="232.7" rx="9.60" ry="10.33" fill="#fff" stroke="#0d4560" stroke-width="1.6"/>
<text x="655.6" y="236.9" font-size="11.6" textLength="11.2" lengthAdjust="spacingAndGlyphs">13</text>
<ellipse cx="667.6" cy="246.2" rx="8.10" ry="8.10" fill="none" stroke="#fff" stroke-opacity="0.4" stroke-width="1"/>
<ellipse cx="667.6" cy="246.2" rx="6.90" ry="6.90" fill="#fff" stroke="#0d4560" stroke-width="1.6"/>
<text x="667.6" y="250.2" font-size="11.2">5</text>
<ellipse cx="561.9" cy="271.3" rx="8.10" ry="8.10" fill="none" stroke="#fff" stroke-opacity="0.4" stroke-width="1"/>
<ellipse cx="561.9" cy="271.3" rx="6.90" ry="6.90" fill="#fff" stroke="#0d4560" stroke-width="1.6"/>
<text x="561.9" y="275.3" font-size="11.2">1</text>
<ellipse cx="632.0" cy="271.0" rx="8.10" ry="8.10" fill="none" stroke="#fff" stroke-opacity="0.4" stroke-width="1"/>
<ellipse cx="632.0" cy="271.0" rx="6.90" ry="6.90" fill="#fff" stroke="#0d4560" stroke-width="1.6"/>
<text x="632.0" y="275.0" font-size="11.2">3</text>
<ellipse cx="593.0" cy="298.9" rx="8.10" ry="8.10" fill="none" stroke="#fff" stroke-opacity="0.4" stroke-width="1"/>
<ellipse cx="593.0" cy="298.9" rx="6.90" ry="6.90" fill="#fff" stroke="#0d4560" stroke-width="1.6"/>
<text x="593.0" y="302.9" font-size="11.2">7</text>
<ellipse cx="636.6" cy="291.2" rx="8.10" ry="8.10" fill="none" stroke="#fff" stroke-opacity="0.4" stroke-width="1"/>
<ellipse cx="636.6" cy="291.2" rx="6.90" ry="6.90" fill="#fff" stroke="#0d4560" stroke-width="1.6"/>
<text x="636.6" y="295.2" font-size="11.2">1</text>
<ellipse cx="541.9" cy="330.9" rx="8.10" ry="8.10" fill="none" stroke="#fff" stroke-opacity="0.4" stroke-width="1"/>
<ellipse cx="541.9" cy="330.9" rx="6.90" ry="6.90" fill="#fff" stroke="#0d4560" stroke-width="1.6"/>
<text x="541.9" y="334.9" font-size="11.2">1</text>
<ellipse cx="569.5" cy="326.5" rx="7.94" ry="7.94" fill="none" stroke="#fff" stroke-opacity="0.4" stroke-width="1"/>
<ellipse cx="569.5" cy="326.5" rx="6.74" ry="6.74" fill="#fff" stroke="#0d4560" stroke-width="1.6"/>
<text x="569.5" y="330.5" font-size="11.2">4</text>
<ellipse cx="561.9" cy="337.9" rx="7.94" ry="7.94" fill="none" stroke="#fff" stroke-opacity="0.4" stroke-width="1"/>
<ellipse cx="561.9" cy="337.9" rx="6.74" ry="6.74" fill="#fff" stroke="#0d4560" stroke-width="1.6"/>
<text x="561.9" y="341.9" font-size="11.2">2</text>
<ellipse cx="593.0" cy="326.5" rx="11.06" ry="11.81" fill="none" stroke="#fff" stroke-opacity="0.4" stroke-width="1"/>
<ellipse cx="593.0" cy="326.5" rx="9.86" ry="10.61" fill="#fff" stroke="#0d4560" stroke-width="1.6"/>
<text x="593.0" y="330.7" font-size="11.6" textLength="11.5" lengthAdjust="spacingAndGlyphs">17</text>
<ellipse cx="581.3" cy="354.1" rx="8.10" ry="8.10" fill="none" stroke="#fff" stroke-opacity="0.4" stroke-width="1"/>
<ellipse cx="581.3" cy="354.1" rx="6.90" ry="6.90" fill="#fff" stroke="#0d4560" stroke-width="1.6"/>
<text x="581.3" y="358.1" font-size="11.2">4</text>
<ellipse cx="662.5" cy="348.4" rx="8.10" ry="8.10" fill="none" stroke="#fff" stroke-opacity="0.4" stroke-width="1"/>
<ellipse cx="662.5" cy="348.4" rx="6.90" ry="6.90" fill="#fff" stroke="#0d4560" stroke-width="1.6"/>
<text x="662.5" y="352.4" font-size="11.2">2</text>
<ellipse cx="577.1" cy="384.2" rx="8.10" ry="8.10" fill="none" stroke="#fff" stroke-opacity="0.4" stroke-width="1"/>
<ellipse cx="577.1" cy="384.2" rx="6.90" ry="6.90" fill="#fff" stroke="#0d4560" stroke-width="1.6"/>
<text x="577.1" y="388.2" font-size="11.2">1</text>
<ellipse cx="561.9" cy="389.7" rx="8.10" ry="8.10" fill="none" stroke="#fff" stroke-opacity="0.4" stroke-width="1"/>
<ellipse cx="561.9" cy="389.7" rx="6.90" ry="6.90" fill="#fff" stroke="#0d4560" stroke-width="1.6"/>
<text x="561.9" y="393.7" font-size="11.2">3</text>
<ellipse cx="581.3" cy="403.2" rx="8.10" ry="8.10" fill="none" stroke="#fff" stroke-opacity="0.4" stroke-width="1"/>
<ellipse cx="581.3" cy="403.2" rx="6.90" ry="6.90" fill="#fff" stroke="#0d4560" stroke-width="1.6"/>
<text x="581.3" y="407.2" font-size="11.2">2</text>
<ellipse cx="561.9" cy="410.3" rx="8.10" ry="8.10" fill="none" stroke="#fff" stroke-opacity="0.4" stroke-width="1"/>
<ellipse cx="561.9" cy="410.3" rx="6.90" ry="6.90" fill="#fff" stroke="#0d4560" stroke-width="1.6"/>
<text x="561.9" y="414.3" font-size="11.2">1</text>
<ellipse cx="854.9" cy="182.8" rx="12.53" ry="13.28" fill="none" stroke="#fff" stroke-opacity="0.4" stroke-width="1"/>
<ellipse cx="854.9" cy="182.8" rx="11.33" ry="12.08" fill="#fff" stroke="#0d4560" stroke-width="1.6"/>
<text x="854.9" y="187.3" font-size="12.6" textLength="17.6" lengthAdjust="spacingAndGlyphs">392</text>
<ellipse cx="943.8" cy="173.8" rx="11.06" ry="11.81" fill="none" stroke="#fff" stroke-opacity="0.4" stroke-width="1"/>
<ellipse cx="943.8" cy="173.8" rx="9.86" ry="10.61" fill="#fff" stroke="#0d4560" stroke-width="1.6"/>
<text x="943.8" y="178.0" font-size="11.6" textLength="11.5" lengthAdjust="spacingAndGlyphs">55</text>
<ellipse cx="773.7" cy="216.1" rx="8.10" ry="8.10" fill="none" stroke="#fff" stroke-opacity="0.4" stroke-width="1"/>
<ellipse cx="773.7" cy="216.1" rx="6.90" ry="6.90" fill="#fff" stroke="#0d4560" stroke-width="1.6"/>
<text x="773.7" y="220.1" font-size="11.2">4</text>
<ellipse cx="797.1" cy="232.9" rx="10.80" ry="11.53" fill="none" stroke="#fff" stroke-opacity="0.4" stroke-width="1"/>
<ellipse cx="797.1" cy="232.9" rx="9.60" ry="10.33" fill="#fff" stroke="#0d4560" stroke-width="1.6"/>
<text x="797.1" y="237.1" font-size="11.6" textLength="11.2" lengthAdjust="spacingAndGlyphs">10</text>
<ellipse cx="745.3" cy="249.4" rx="12.53" ry="13.28" fill="none" stroke="#fff" stroke-opacity="0.4" stroke-width="1"/>
<ellipse cx="745.3" cy="249.4" rx="11.33" ry="12.08" fill="#fff" stroke="#0d4560" stroke-width="1.6"/>
<text x="745.3" y="253.9" font-size="12.6" textLength="17.6" lengthAdjust="spacingAndGlyphs">163</text>
<ellipse cx="886.9" cy="241.8" rx="7.28" ry="7.28" fill="none" stroke="#fff" stroke-opacity="0.4" stroke-width="1"/>
<ellipse cx="886.9" cy="241.8" rx="6.08" ry="6.08" fill="#fff" stroke="#0d4560" stroke-width="1.6"/>
<ellipse cx="888.6" cy="241.3" rx="7.44" ry="7.44" fill="none" stroke="#fff" stroke-opacity="0.4" stroke-width="1"/>
<ellipse cx="888.6" cy="241.3" rx="6.24" ry="6.24" fill="#fff" stroke="#0d4560" stroke-width="1.6"/>
<ellipse cx="891.4" cy="240.3" rx="7.94" ry="7.94" fill="none" stroke="#fff" stroke-opacity="0.4" stroke-width="1"/>
<ellipse cx="891.4" cy="240.3" rx="6.74" ry="6.74" fill="#fff" stroke="#0d4560" stroke-width="1.6"/>
<text x="891.4" y="244.3" font-size="11.2">9</text>
<ellipse cx="918.5" cy="235.1" rx="10.96" ry="11.70" fill="none" stroke="#fff" stroke-opacity="0.4" stroke-width="1"/>
<ellipse cx="918.5" cy="235.1" rx="9.76" ry="10.50" fill="#fff" stroke="#0d4560" stroke-width="1.6"/>
<text x="918.5" y="239.3" font-size="11.6" textLength="11.4" lengthAdjust="spacingAndGlyphs">32</text>
<ellipse cx="836.2" cy="270.4" rx="10.80" ry="11.53" fill="none" stroke="#fff" stroke-opacity="0.4" stroke-width="1"/>
<ellipse cx="836.2" cy="270.4" rx="9.60" ry="10.33" fill="#fff" stroke="#0d4560" stroke-width="1.6"/>
<text x="836.2" y="274.6" font-size="11.6" textLength="11.2" lengthAdjust="spacingAndGlyphs">15</text>
<ellipse cx="860.0" cy="267.0" rx="10.80" ry="11.53" fill="none" stroke="#fff" stroke-opacity="0.4" stroke-width="1"/>
<ellipse cx="860.0" cy="267.0" rx="9.60" ry="10.33" fill="#fff" stroke="#0d4560" stroke-width="1.6"/>
<text x="860.0" y="271.2" font-size="11.6" textLength="11.2" lengthAdjust="spacingAndGlyphs">22</text>
<ellipse cx="922.3" cy="278.6" rx="8.10" ry="8.10" fill="none" stroke="#fff" stroke-opacity="0.4" stroke-width="1"/>
<ellipse cx="922.3" cy="278.6" rx="6.90" ry="6.90" fill="#fff" stroke="#0d4560" stroke-width="1.6"/>
<text x="922.3" y="282.6" font-size="11.2">5</text>
<ellipse cx="761.9" cy="302.7" rx="8.10" ry="8.10" fill="none" stroke="#fff" stroke-opacity="0.4" stroke-width="1"/>
<ellipse cx="761.9" cy="302.7" rx="6.90" ry="6.90" fill="#fff" stroke="#0d4560" stroke-width="1.6"/>
<text x="761.9" y="306.7" font-size="11.2">4</text>
<ellipse cx="851.4" cy="324.6" rx="7.94" ry="7.94" fill="none" stroke="#fff" stroke-opacity="0.4" stroke-width="1"/>
<ellipse cx="851.4" cy="324.6" rx="6.74" ry="6.74" fill="#fff" stroke="#0d4560" stroke-width="1.6"/>
<text x="851.4" y="328.6" font-size="11.2">9</text>
<ellipse cx="885.3" cy="321.1" rx="10.80" ry="11.53" fill="none" stroke="#fff" stroke-opacity="0.4" stroke-width="1"/>
<ellipse cx="885.3" cy="321.1" rx="9.60" ry="10.33" fill="#fff" stroke="#0d4560" stroke-width="1.6"/>
<text x="885.3" y="325.3" font-size="11.6" textLength="11.2" lengthAdjust="spacingAndGlyphs">18</text>
<ellipse cx="914.9" cy="349.7" rx="11.22" ry="11.98" fill="none" stroke="#fff" stroke-opacity="0.4" stroke-width="1"/>
<ellipse cx="914.9" cy="349.7" rx="10.02" ry="10.78" fill="#fff" stroke="#0d4560" stroke-width="1.6"/>
<text x="914.9" y="353.9" font-size="11.6" textLength="11.7" lengthAdjust="spacingAndGlyphs">32</text>
</g>
</svg>
<div style="position:absolute;left:6px;top:7px;width:22.2px;height:43.6px;background:#fff;border-radius:3px;"></div>
<div style="position:absolute;left:7.1px;top:8.1px;width:20.1px;height:19.8px;background:#4a4a4a;border-radius:2px 2px 0 0;"></div>
<div style="position:absolute;left:7.1px;top:27.9px;width:20.1px;height:0.9px;background:#c8c8c8;"></div>
<div style="position:absolute;left:7.1px;top:28.8px;width:20.1px;height:20.8px;background:#4a4a4a;border-radius:0 0 2px 2px;"></div>
<svg style="position:absolute;left:7px;top:8px" width="21" height="42" viewBox="0 0 21 42"><path d="M6.6 11 H14.8 M10.7 6.9 V15.1 M6.6 31.6 H14.8" stroke="#fff" stroke-width="1.8" fill="none"/></svg>
</div>
</div></div>
</body></html>
